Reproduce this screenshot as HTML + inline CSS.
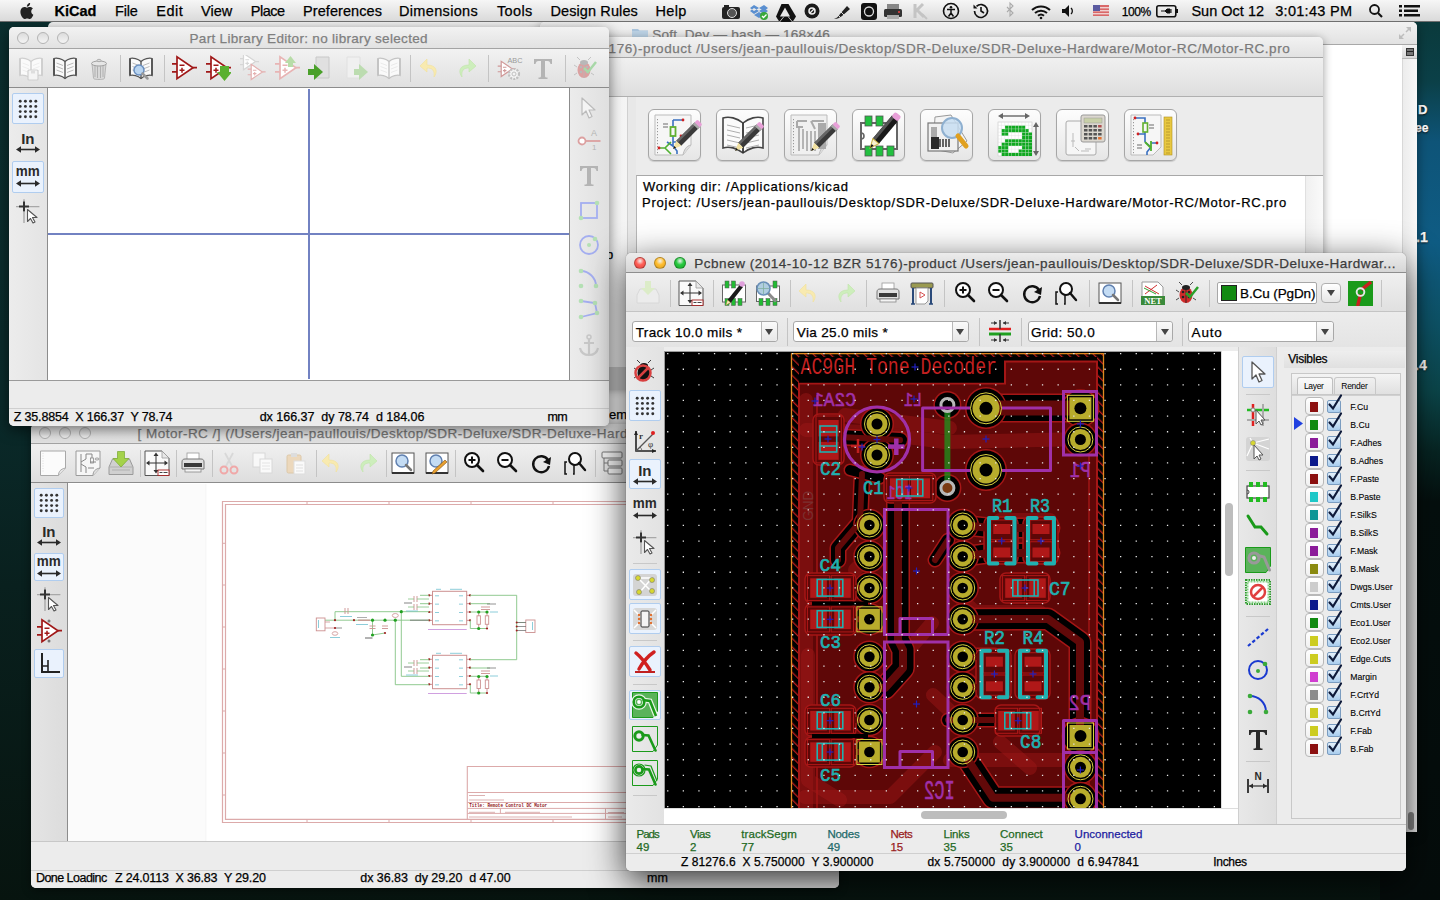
<!DOCTYPE html>
<html><head><meta charset="utf-8"><title>KiCad</title>
<style>
*{box-sizing:border-box;margin:0;padding:0}
html,body{width:1440px;height:900px;overflow:hidden;background:#0b2c2c}
body{position:relative;font-family:"Liberation Sans",sans-serif}
.a{position:absolute}
.t{position:absolute;white-space:nowrap;line-height:1;font-family:"Liberation Sans",sans-serif;-webkit-text-stroke-width:0.25px}
svg.a{overflow:visible}
</style></head><body>
<svg width="0" height="0" style="position:absolute"><defs><symbol id="i_book" viewBox="0 0 26 26"><path d="M13 6.5C10 4 5 2.5 2 3.5v17c3-1 8 .5 11 3 3-2.5 8-4 11-3v-17c-3-1-8 .5-11 3z" fill="#fafafa" stroke="#555" stroke-width="1.3"/><path d="M13 6.5v17" stroke="#555" stroke-width="1.4"/><path d="M4.5 8l6.5 2.5M4.5 11.5l6.5 2.5M4.5 15l6.5 2.5M15 10.5l6.5-2.5M15 14l6.5-2.5M15 17.5l6.5-2.5" stroke="#aaa" stroke-width=".8"/><path d="M2 3.5v17" stroke="#555" stroke-width="2"/><path d="M24 3.5v17" stroke="#555" stroke-width="1.8"/></symbol><symbol id="i_book_dis" viewBox="0 0 26 26"><path d="M13 6.5C10 4 5 2.5 2 3.5v17c3-1 8 .5 11 3 3-2.5 8-4 11-3v-17c-3-1-8 .5-11 3z" fill="#fafafa" stroke="#c4c4c4" stroke-width="1.3"/><path d="M13 6.5v17" stroke="#c4c4c4" stroke-width="1.4"/><path d="M4.5 8l6.5 2.5M4.5 11.5l6.5 2.5M4.5 15l6.5 2.5M15 10.5l6.5-2.5M15 14l6.5-2.5M15 17.5l6.5-2.5" stroke="#e4e4e4" stroke-width=".8"/><path d="M2 3.5v17" stroke="#c4c4c4" stroke-width="2"/><path d="M24 3.5v17" stroke="#c4c4c4" stroke-width="1.8"/></symbol><symbol id="i_booksave" viewBox="0 0 26 26"><path d="M13 6.5C10 4 5 2.5 2 3.5v17c3-1 8 .5 11 3 3-2.5 8-4 11-3v-17c-3-1-8 .5-11 3z" fill="#fafafa" stroke="#cfcfcf" stroke-width="1.3"/><path d="M13 6.5v17" stroke="#cfcfcf" stroke-width="1.4"/><path d="M4.5 8l6.5 2.5M4.5 11.5l6.5 2.5M4.5 15l6.5 2.5M15 10.5l6.5-2.5M15 14l6.5-2.5M15 17.5l6.5-2.5" stroke="#e8e8e8" stroke-width=".8"/><path d="M2 3.5v17" stroke="#cfcfcf" stroke-width="2"/><path d="M24 3.5v17" stroke="#cfcfcf" stroke-width="1.8"/><rect x="10" y="15" width="10" height="10" rx="1" fill="#f4f4f4" stroke="#cfcfcf" stroke-width="1.2"/><rect x="13" y="15.5" width="4" height="3" fill="#ddd"/></symbol><symbol id="i_trash" viewBox="0 0 26 26"><path d="M6 9h14l-1.5 14c0 1-1.5 1.5-5.5 1.5S7.5 24 7.5 23z" fill="#d8d8d8" stroke="#aaa" stroke-width=".8"/><ellipse cx="13" cy="8.5" rx="7.5" ry="2.5" fill="#e6e6e6" stroke="#999" stroke-width=".9"/><ellipse cx="13" cy="5.5" rx="2" ry="1.2" fill="#ddd" stroke="#999" stroke-width=".7"/><path d="M9 11v11M11.5 11v12M14.5 11v12M17 11v11" stroke="#b0b0b0" stroke-width="1"/></symbol><symbol id="i_booksearch" viewBox="0 0 26 26"><path d="M13 6.5C10 4 5 2.5 2 3.5v17c3-1 8 .5 11 3 3-2.5 8-4 11-3v-17c-3-1-8 .5-11 3z" fill="#fafafa" stroke="#555" stroke-width="1.3"/><path d="M13 6.5v17" stroke="#555" stroke-width="1.4"/><path d="M4.5 8l6.5 2.5M4.5 11.5l6.5 2.5M4.5 15l6.5 2.5M15 10.5l6.5-2.5M15 14l6.5-2.5M15 17.5l6.5-2.5" stroke="#aaa" stroke-width=".8"/><path d="M2 3.5v17" stroke="#555" stroke-width="2"/><path d="M24 3.5v17" stroke="#555" stroke-width="1.8"/><circle cx="11" cy="15" r="5" fill="#b8d4f0" stroke="#6a8fc0" stroke-width="1.5"/><path d="M14.5 18.5l5 5" stroke="#999" stroke-width="2.5" stroke-linecap="round"/></symbol><symbol id="i_opamp" viewBox="0 0 26 26"><path d="M6 1.8v21.8l16-10.9z" fill="#fff" stroke="#a01818" stroke-width="1.7" stroke-linejoin="miter"/><path d="M1 8.8h5M1 16.8h5M22 12.7h4.6" stroke="#a01818" stroke-width="1.7"/><path d="M8.5 10.3h5M8.5 15.2h5M11 12.7v5" stroke="#a01818" stroke-width="1.5"/></symbol><symbol id="i_opamp_dl" viewBox="0 0 26 26"><path d="M6 1.8v21.8l16-10.9z" fill="#fff" stroke="#a01818" stroke-width="1.7" stroke-linejoin="miter"/><path d="M1 8.8h5M1 16.8h5M22 12.7h4.6" stroke="#a01818" stroke-width="1.7"/><path d="M8.5 10.3h5M8.5 15.2h5M11 12.7v5" stroke="#a01818" stroke-width="1.5"/><path d="M15 11h9v6h3l-7.5 9-7.5-9h3z" fill="#5ab030"/></symbol><symbol id="i_opamp_pale" viewBox="0 0 26 26"><g transform="translate(-1,-3) scale(.75)"><path d="M6 1.8v21.8l16-10.9z" fill="#fff" stroke="#d6d6d6" stroke-width="1.7" stroke-linejoin="miter"/><path d="M1 8.8h5M1 16.8h5M22 12.7h4.6" stroke="#d6d6d6" stroke-width="1.7"/><path d="M8.5 10.3h5M8.5 15.2h5M11 12.7v5" stroke="#d6d6d6" stroke-width="1.5"/></g><g transform="translate(7,8) scale(.7)"><path d="M6 1.8v21.8l16-10.9z" fill="#fff" stroke="#e4b0b0" stroke-width="1.7" stroke-linejoin="miter"/><path d="M1 8.8h5M1 16.8h5M22 12.7h4.6" stroke="#e4b0b0" stroke-width="1.7"/><path d="M8.5 10.3h5M8.5 15.2h5M11 12.7v5" stroke="#e4b0b0" stroke-width="1.5"/></g></symbol><symbol id="i_opamp_up" viewBox="0 0 26 26"><path d="M6 1.8v21.8l16-10.9z" fill="#fff" stroke="#e8b4b4" stroke-width="1.7" stroke-linejoin="miter"/><path d="M1 8.8h5M1 16.8h5M22 12.7h4.6" stroke="#e8b4b4" stroke-width="1.7"/><path d="M8.5 10.3h5M8.5 15.2h5M11 12.7v5" stroke="#e8b4b4" stroke-width="1.5"/><path d="M14 12h5v-4h3l-5.5-7-5.5 7h3z" fill="#b8dca8"/></symbol><symbol id="i_import" viewBox="0 0 26 26"><path d="M9 2h13v21H9z" fill="#e0e0e0" stroke="#c8c8c8" stroke-width="1"/><path d="M1 14h6v-5l9 8-9 8v-5H1z" fill="#4aa02a"/></symbol><symbol id="i_export_dis" viewBox="0 0 26 26"><path d="M4 2h13v21H4z" fill="#f0f0f0" stroke="#e0e0e0" stroke-width="1"/><path d="M11 14h5v-5l9 8-9 8v-5h-5z" fill="#bcdcb0"/></symbol><symbol id="i_undo_dis" viewBox="0 0 26 26"><path d="M10 4L3 11l7 6v-4c5 0 8 2 7 9 4-5 3-12-7-12z" fill="#f8eab0" stroke="#f2e098" stroke-width=".6"/></symbol><symbol id="i_redo_dis" viewBox="0 0 26 26"><path d="M16 4l7 7-7 6v-4c-5 0-8 2-7 9-4-5-3-12 7-12z" fill="#cdeebc" stroke="#bfe4a8" stroke-width=".6"/></symbol><symbol id="i_undo" viewBox="0 0 26 26"><path d="M10 4L3 11l7 6v-4c5 0 8 2 7 9 4-5 3-12-7-12z" fill="#f4dc70" stroke="#d8bc40" stroke-width=".6"/></symbol><symbol id="i_opamp_abc" viewBox="0 0 26 26"><g transform="translate(0,5) scale(.7)"><path d="M6 1.8v21.8l16-10.9z" fill="#fff" stroke="#d09898" stroke-width="1.7" stroke-linejoin="miter"/><path d="M1 8.8h5M1 16.8h5M22 12.7h4.6" stroke="#d09898" stroke-width="1.7"/><path d="M8.5 10.3h5M8.5 15.2h5M11 12.7v5" stroke="#d09898" stroke-width="1.5"/></g><text x="10.5" y="8" font-size="7.5" font-family="Liberation Sans" fill="#9a9a9a" textLength="15" lengthAdjust="spacingAndGlyphs">ABC</text><circle cx="17" cy="19" r="5" fill="#f4f4f4" stroke="#c0c0c0" stroke-width="2.2" stroke-dasharray="2 1.2"/><circle cx="17" cy="19" r="2" fill="none" stroke="#c0c0c0" stroke-width="1"/></symbol><symbol id="i_T_gray" viewBox="0 0 26 26"><path d="M4 4h18v5h-1.5c-.5-2-1-3-3-3H15v15c0 1 .5 1.5 2.5 1.5V24h-9v-1.5C10.5 22.5 11 22 11 21V6H8.5c-2 0-2.5 1-3 3H4z" fill="#b4b4b4"/></symbol><symbol id="i_T_dark" viewBox="0 0 26 26"><path d="M4 4h18v5h-1.5c-.5-2-1-3-3-3H15v15c0 1 .5 1.5 2.5 1.5V24h-9v-1.5C10.5 22.5 11 22 11 21V6H8.5c-2 0-2.5 1-3 3H4z" fill="#2a2a2a"/></symbol><symbol id="i_bugcheck_dis" viewBox="0 0 26 26"><ellipse cx="12" cy="15" rx="6.5" ry="8" fill="#dca0a0"/><path d="M12 7v16" stroke="#b8b8b8" stroke-width=".8"/><circle cx="9" cy="12" r="1.3" fill="#b8b8b8"/><circle cx="15" cy="12" r="1.3" fill="#b8b8b8"/><circle cx="9" cy="17" r="1.3" fill="#b8b8b8"/><circle cx="15" cy="17" r="1.3" fill="#b8b8b8"/><ellipse cx="12" cy="7.5" rx="4" ry="2.5" fill="#b8b8b8"/><path d="M8 5L5 2M16 5l3-3M5 12L2 10M19 12l3-2M5 18l-3 2M19 18l3 2" stroke="#b8b8b8" stroke-width=".8"/><path d="M12 13l4 4 8-10" stroke="#a8d8a8" stroke-width="2.5" fill="none"/></symbol><symbol id="i_bugcheck" viewBox="0 0 26 26"><ellipse cx="12" cy="15" rx="6.5" ry="8" fill="#d02a2a"/><path d="M12 7v16" stroke="#222" stroke-width=".8"/><circle cx="9" cy="12" r="1.3" fill="#222"/><circle cx="15" cy="12" r="1.3" fill="#222"/><circle cx="9" cy="17" r="1.3" fill="#222"/><circle cx="15" cy="17" r="1.3" fill="#222"/><ellipse cx="12" cy="7.5" rx="4" ry="2.5" fill="#222"/><path d="M8 5L5 2M16 5l3-3M5 12L2 10M19 12l3-2M5 18l-3 2M19 18l3 2" stroke="#222" stroke-width=".8"/><path d="M12 13l4 4 8-10" stroke="#2aa02a" stroke-width="2.5" fill="none"/></symbol><symbol id="i_bug_no" viewBox="0 0 26 26"><ellipse cx="12" cy="15" rx="6.5" ry="8" fill="#111"/><path d="M12 7v16" stroke="#111" stroke-width=".8"/><circle cx="9" cy="12" r="1.3" fill="#111"/><circle cx="15" cy="12" r="1.3" fill="#111"/><circle cx="9" cy="17" r="1.3" fill="#111"/><circle cx="15" cy="17" r="1.3" fill="#111"/><ellipse cx="12" cy="7.5" rx="4" ry="2.5" fill="#111"/><path d="M8 5L5 2M16 5l3-3M5 12L2 10M19 12l3-2M5 18l-3 2M19 18l3 2" stroke="#111" stroke-width=".8"/><circle cx="11" cy="15" r="7.5" fill="none" stroke="#d84040" stroke-width="2.5"/><path d="M6 20L16 10" stroke="#d84040" stroke-width="2.5"/></symbol><symbol id="i_grid" viewBox="0 0 26 26"><circle cx="5.2" cy="5.2" r="1.45" fill="#333"/><circle cx="5.2" cy="10.4" r="1.45" fill="#333"/><circle cx="5.2" cy="15.6" r="1.45" fill="#333"/><circle cx="5.2" cy="20.8" r="1.45" fill="#333"/><circle cx="10.4" cy="5.2" r="1.45" fill="#333"/><circle cx="10.4" cy="10.4" r="1.45" fill="#333"/><circle cx="10.4" cy="15.6" r="1.45" fill="#333"/><circle cx="10.4" cy="20.8" r="1.45" fill="#333"/><circle cx="15.6" cy="5.2" r="1.45" fill="#333"/><circle cx="15.6" cy="10.4" r="1.45" fill="#333"/><circle cx="15.6" cy="15.6" r="1.45" fill="#333"/><circle cx="15.6" cy="20.8" r="1.45" fill="#333"/><circle cx="20.8" cy="5.2" r="1.45" fill="#333"/><circle cx="20.8" cy="10.4" r="1.45" fill="#333"/><circle cx="20.8" cy="15.6" r="1.45" fill="#333"/><circle cx="20.8" cy="20.8" r="1.45" fill="#333"/></symbol><symbol id="i_inch" viewBox="0 0 26 26"><text x="12.8" y="14.8" font-size="15" font-family="Liberation Sans" font-weight="bold" text-anchor="middle" fill="#2a2a2a">In</text><path d="M4 20.5h18" stroke="#2a2a2a" stroke-width="1.6"/><path d="M1 20.5l5-3.2v6.4zM25 20.5l-5-3.2v6.4z" fill="#2a2a2a"/></symbol><symbol id="i_mm" viewBox="0 0 26 26"><text x="12.7" y="12.4" font-size="14" font-family="Liberation Sans" font-weight="bold" text-anchor="middle" fill="#2a2a2a" textLength="24" lengthAdjust="spacingAndGlyphs">mm</text><path d="M4 19.5h18" stroke="#2a2a2a" stroke-width="1.6"/><path d="M1 19.5l5-3.2v6.4zM25 19.5l-5-3.2v6.4z" fill="#2a2a2a"/></symbol><symbol id="i_cursor" viewBox="0 0 26 26"><path d="M1 8.6h3M14 8.6h10.4" stroke="#a8a8a8" stroke-width="1.4"/><path d="M9 1.3v2.5M9 14v11" stroke="#a8a8a8" stroke-width="1.4"/><path d="M4 8.6h10M9 3.5v10" stroke="#333" stroke-width="2"/><path d="M12.5 11.5v12l3-3 2.5 4.5 2-1-2.5-4.5h4.5z" fill="#fff" stroke="#555" stroke-width="1.1" stroke-linejoin="round"/></symbol><symbol id="i_arrow_dis" viewBox="0 0 26 26"><path d="M6 3v17l4-4 3 7 3-1.5-3-6.5h6z" fill="#f4f4f4" stroke="#bbb" stroke-width="1.2" stroke-linejoin="round"/></symbol><symbol id="i_arrow" viewBox="0 0 26 26"><path d="M7 3v17l4-4 3 7 3-1.5-3-6.5h6z" fill="#fff" stroke="#555" stroke-width="1.3" stroke-linejoin="round"/></symbol><symbol id="i_pin_dis" viewBox="0 0 26 26"><circle cx="6" cy="16" r="3.5" fill="#fff" stroke="#dca0a0" stroke-width="1.8"/><path d="M9.5 16h15" stroke="#dca0a0" stroke-width="1.8"/><text x="15" y="11" font-size="9" font-family="Liberation Sans" fill="#b4b4b4">A</text><text x="16" y="25" font-size="8" font-family="Liberation Sans" fill="#b4b4b4">1</text></symbol><symbol id="i_rect_dis" viewBox="0 0 26 26"><rect x="5" y="6" width="16" height="15" fill="none" stroke="#a4aef0" stroke-width="1.8"/><circle cx="21" cy="6" r="2.3" fill="#b4e0b4"/><circle cx="5" cy="21" r="2.3" fill="#b4e0b4"/></symbol><symbol id="i_circ_dis" viewBox="0 0 26 26"><circle cx="13" cy="13" r="9" fill="none" stroke="#a4aef0" stroke-width="1.8"/><circle cx="13" cy="13" r="2" fill="#b4e0b4"/><circle cx="19" cy="7" r="2.3" fill="#b4e0b4"/></symbol><symbol id="i_arc_dis" viewBox="0 0 26 26"><path d="M5 6c8 0 15 7 15 15" fill="none" stroke="#a4aef0" stroke-width="1.8"/><circle cx="5" cy="6" r="2.3" fill="#b4e0b4"/><circle cx="20" cy="21" r="2.3" fill="#b4e0b4"/><circle cx="5" cy="21" r="2.3" fill="#b4e0b4"/></symbol><symbol id="i_poly_dis" viewBox="0 0 26 26"><path d="M5 7l14 2 2 10-16 4" fill="none" stroke="#a4aef0" stroke-width="1.8"/><circle cx="5" cy="7" r="2.3" fill="#b4e0b4"/><circle cx="19" cy="9" r="2.3" fill="#b4e0b4"/><circle cx="21" cy="19" r="2.3" fill="#b4e0b4"/><circle cx="5" cy="23" r="2.3" fill="#b4e0b4"/></symbol><symbol id="i_anchor_dis" viewBox="0 0 26 26"><circle cx="13" cy="5" r="2" fill="none" stroke="#c8c8c8" stroke-width="1.5"/><path d="M13 7v16M8 11h10M4 16c1 5 5 7 9 7s8-2 9-7" fill="none" stroke="#c8c8c8" stroke-width="2.2"/></symbol><symbol id="i_newdoc" viewBox="0 0 26 26"><path d="M0.5 1h25v17l-7 7.5H0.5z" fill="#fbfbfb" stroke="#a8a8a8" stroke-width="1"/><path d="M18.5 25.5c0-4 2-6.5 7-7.5" fill="#e4e4e4" stroke="#a8a8a8" stroke-width="1"/><path d="M3 3v20" stroke="#ccc" stroke-width=".6" stroke-dasharray="1 1.5"/></symbol><symbol id="i_schdoc" viewBox="0 0 26 26"><path d="M1 1h24v17l-7 7.5H1z" fill="#f6f6f6" stroke="#9a9a9a" stroke-width="1"/><path d="M18 25.5c0-4 2-6.5 7-7.5" fill="#e0e0e0" stroke="#9a9a9a"/><path d="M6 4v18M6 12l5-3M6 14l5 3M11 9v-5h6M11 17v6M17 4v4M15 12h6M13 18h6" stroke="#888" stroke-width="1" fill="none"/><rect x="15.5" y="8" width="3" height="5" fill="none" stroke="#888" stroke-width=".8"/><ellipse cx="22" cy="9" rx="2" ry="1" fill="none" stroke="#888" stroke-width=".8"/></symbol><symbol id="i_save_tray" viewBox="0 0 26 26"><path d="M1 17l3.5-8h17l3.5 8v7.5H1z" fill="#d0d0d0" stroke="#9a9a9a" stroke-width="1"/><path d="M1.5 17h23" stroke="#b0b0b0"/><path d="M4 20h18" stroke="#bbb" stroke-width="1.5"/><path d="M9.5 1.5h7v7h4.5l-8 8.5-8-8.5h4.5z" fill="#a4d24a" stroke="#78a830" stroke-width=".7"/></symbol><symbol id="i_save_tray_dis" viewBox="0 0 26 26"><path d="M2 15l3-6h16l3 6v8H2z" fill="#ececec" stroke="#d8d8d8" stroke-width="1"/><path d="M10 1h6v7h4l-7 7-7-7h4z" fill="#dcecc8"/></symbol><symbol id="i_pagesettings" viewBox="0 0 26 26"><path d="M1 1h17l7 7v17.5H1z" fill="#fafafa" stroke="#555" stroke-width="1"/><path d="M18 1v7h7" fill="#e8e8e8" stroke="#999" stroke-width=".8"/><path d="M12 4v18M3.5 13h19" stroke="#333" stroke-width="1"/><path d="M12 2.5l-2.5 3.5h5zM12 23.5l-2.5-3.5h5zM2 13l3.5-2.5v5zM24 13l-3.5-2.5v5z" fill="#333"/><rect x="14" y="20" width="11" height="5.5" fill="#fff" stroke="#a02020" stroke-width=".9"/><path d="M15.5 22.5h3M19.5 22.5h4" stroke="#444" stroke-width="1.2"/></symbol><symbol id="i_print" viewBox="0 0 26 26"><rect x="7" y="3" width="12" height="8" fill="#fff" stroke="#999" stroke-width=".8"/><path d="M2 12c0-2 1-3 3-3h16c2 0 3 1 3 3v7H2z" fill="#e0e0e0" stroke="#777" stroke-width="1"/><rect x="4" y="13" width="18" height="4" fill="#3a3a3a"/><rect x="5" y="19" width="16" height="3" fill="#f4f4f4" stroke="#888" stroke-width=".8"/></symbol><symbol id="i_cut_dis" viewBox="0 0 26 26"><path d="M9 3l7 13M17 3l-7 13" stroke="#d8d8d8" stroke-width="1.8"/><circle cx="8" cy="20" r="3.5" fill="none" stroke="#f0a8a8" stroke-width="2"/><circle cx="18" cy="20" r="3.5" fill="none" stroke="#f0a8a8" stroke-width="2"/></symbol><symbol id="i_copy_dis" viewBox="0 0 26 26"><rect x="3" y="3" width="12" height="14" fill="#f8f8f8" stroke="#d8d8d8"/><rect x="10" y="9" width="12" height="14" fill="#fafafa" stroke="#d8d8d8"/><path d="M12 13h8M12 16h8M12 19h8" stroke="#e4e4e4"/></symbol><symbol id="i_paste_dis" viewBox="0 0 26 26"><rect x="4" y="5" width="14" height="18" rx="1.5" fill="#ecd8bc" stroke="#dcc8a8"/><rect x="8" y="3" width="6" height="4" fill="#ddd"/><rect x="11" y="11" width="11" height="13" fill="#fafafa" stroke="#ddd"/><path d="M13 15h7M13 18h7M13 21h7" stroke="#e0e0e0"/></symbol><symbol id="i_find" viewBox="0 0 26 26"><rect x="2" y="3" width="22" height="20" fill="#fff" stroke="#555" stroke-width="1"/><path d="M2 23h22" stroke="#333" stroke-width="2"/><circle cx="12" cy="11" r="6" fill="#c4dcf4" stroke="#6080b0" stroke-width="1.5"/><path d="M16 15l5 5" stroke="#777" stroke-width="2.5" stroke-linecap="round"/></symbol><symbol id="i_findrep" viewBox="0 0 26 26"><rect x="2" y="3" width="22" height="20" fill="#fff" stroke="#555" stroke-width="1"/><path d="M2 23h22" stroke="#333" stroke-width="2"/><circle cx="12" cy="11" r="6" fill="#c4dcf4" stroke="#6080b0" stroke-width="1.5"/><path d="M8 24l3-1 12-11-2-2-12 11z" fill="#e8a030" stroke="#805010" stroke-width=".6"/></symbol><symbol id="i_zoomin" viewBox="0 0 26 26"><circle cx="11" cy="10" r="7" fill="#fff" stroke="#111" stroke-width="2"/><path d="M7.5 10h7M11 6.5v7" stroke="#111" stroke-width="2"/><path d="M16 15l6 6" stroke="#111" stroke-width="2.6" stroke-linecap="round"/></symbol><symbol id="i_zoomout" viewBox="0 0 26 26"><circle cx="11" cy="10" r="7" fill="#fff" stroke="#111" stroke-width="2"/><path d="M7.5 10h7" stroke="#111" stroke-width="2"/><path d="M16 15l6 6" stroke="#111" stroke-width="2.6" stroke-linecap="round"/></symbol><symbol id="i_refresh" viewBox="0 0 26 26"><path d="M20 10A8 8 0 1 0 21 16" fill="none" stroke="#111" stroke-width="2.4"/><path d="M23 7l-1 8-7-3z" fill="#111"/></symbol><symbol id="i_zoomfit" viewBox="0 0 26 26"><circle cx="13" cy="9" r="6" fill="#fff" stroke="#111" stroke-width="2"/><path d="M17 13l6 7" stroke="#111" stroke-width="2.4" stroke-linecap="round"/><path d="M5 12h-2v12h2M11 24h1v-9" stroke="#111" stroke-width="1.5" fill="none"/></symbol><symbol id="i_hier" viewBox="0 0 26 26"><rect x="4" y="2" width="20" height="6" rx="1" fill="#f4f4f4" stroke="#777"/><rect x="10" y="10" width="14" height="6" rx="1" fill="#f4f4f4" stroke="#777"/><rect x="10" y="18" width="14" height="6" rx="1" fill="#f4f4f4" stroke="#777"/><path d="M6 8v13h4M6 13h4" stroke="#777" fill="none"/></symbol><symbol id="i_opamp_side" viewBox="0 0 26 26"><path d="M6 1.8v21.8l16-10.9z" fill="#fff" stroke="#a01818" stroke-width="1.7" stroke-linejoin="miter"/><path d="M1 8.8h5M1 16.8h5M22 12.7h4.6" stroke="#a01818" stroke-width="1.7"/><path d="M8.5 10.3h5M8.5 15.2h5M11 12.7v5" stroke="#a01818" stroke-width="1.5"/><circle cx="13" cy="3" r="1.5" fill="#777"/><circle cx="13" cy="23" r="1.5" fill="#777"/></symbol><symbol id="i_bus" viewBox="0 0 26 26"><path d="M6 3v19h18" stroke="#222" stroke-width="2" fill="none"/><path d="M12 10v12M6 16h6" stroke="#222" stroke-width="1.6"/></symbol><symbol id="i_modedit" viewBox="0 0 26 26"><rect x="1.5" y="5" width="23" height="17" fill="#fff" stroke="#666" stroke-width="1"/><g fill="#22bb33" stroke="#555" stroke-width=".5"><rect x="4" y="1" width="4" height="7"/><rect x="10.5" y="1" width="4" height="7"/><rect x="4" y="18.5" width="4" height="7"/><rect x="10.5" y="18.5" width="4" height="7"/><rect x="17" y="18.5" width="4" height="7"/></g><path d="M5 25l1.5-5L19 4.5l3 2.5L9.5 23z" fill="#1a1a1a"/><circle cx="21" cy="4" r="2.8" fill="#e0a0dc"/><path d="M5 25l1.5-5 3 2.5z" fill="#f6ecc0" stroke="#c8b040" stroke-width=".5"/></symbol><symbol id="i_modview" viewBox="0 0 26 26"><rect x="1.5" y="6" width="23" height="15.5" fill="#fff" stroke="#666" stroke-width="1"/><g fill="#22bb33" stroke="#555" stroke-width=".5"><rect x="18" y="1" width="4" height="7"/><rect x="4" y="18.5" width="4" height="7"/><rect x="11" y="18.5" width="4" height="7"/><rect x="18" y="18.5" width="4" height="7"/></g><path d="M12.5 12.5l8.5 9" stroke="#8a8a8a" stroke-width="3"/><circle cx="8.5" cy="8.5" r="6.5" fill="#b0cde0" stroke="#6a90b8" stroke-width="1.6"/><path d="M8.5 3v11M3 8.5h11" stroke="#80b0a0" stroke-width=".8"/></symbol><symbol id="i_plot" viewBox="0 0 26 26"><rect x="2" y="3" width="22" height="5" rx="1" fill="#9a9a50" stroke="#555"/><path d="M4 8v16M22 8v16" stroke="#2a4a7a" stroke-width="2"/><path d="M2 24h4M20 24h4" stroke="#2a4a7a" stroke-width="1.5"/><path d="M7 8h12v13l-3 3H7z" fill="#fff" stroke="#999"/><path d="M11 12v6l5-3z" fill="none" stroke="#d04040" stroke-width=".9"/></symbol><symbol id="i_netlist" viewBox="0 0 26 26"><path d="M2 2h16l5 5v12H2z" fill="#fff" stroke="#999"/><path d="M5 6l14 8M5 14l12-9" stroke="#d03030" stroke-width="1"/><path d="M4 8l12 6" stroke="#30a030" stroke-width="1"/><rect x="1" y="16" width="24" height="9" fill="#3a8a3a"/><text x="13" y="24" font-size="8.5" font-family="Liberation Serif" font-weight="bold" text-anchor="middle" fill="#fff">NET</text></symbol><symbol id="i_layerbtn" viewBox="0 0 26 26"><rect x="0" y="0" width="26" height="26" fill="#1a9a1a"/><path d="M10 26L13 14M14 9L24 1" stroke="#c82020" stroke-width="3.5"/><circle cx="13" cy="11.5" r="4" fill="none" stroke="#e8e8e8" stroke-width="2"/></symbol><symbol id="i_autowidth" viewBox="0 0 26 26"><path d="M2 11h22" stroke="#e02020" stroke-width="2.5"/><path d="M2 16h22" stroke="#20a020" stroke-width="3"/><path d="M13 2v9M13 16v8" stroke="#333" stroke-width="1.5"/><path d="M4 5h6M16 5h6M4 22h6M16 22h6" stroke="#333" stroke-width="1"/><path d="M10 5l-3-2v4zM16 5l3-2v4zM10 22l-3-2v4zM16 22l3-2v4z" fill="#333"/></symbol><symbol id="i_polar" viewBox="0 0 26 26"><path d="M4 3v20h20" stroke="#222" stroke-width="1.6" fill="none"/><path d="M4 3l-2 4h4zM24 23l-4-2v4z" fill="#222"/><path d="M4 23L21 6" stroke="#555" stroke-width="1.3"/><circle cx="21" cy="5" r="2" fill="#e02020"/><text x="7" y="11" font-size="9" font-family="Liberation Serif" font-weight="bold" fill="#333">r</text><text x="16" y="19" font-size="9" font-family="Liberation Serif" fill="#333">φ</text><path d="M10 23a6 6 0 0 0-2-4" stroke="#555" fill="none" stroke-width=".8"/></symbol><symbol id="i_ratsnest" viewBox="0 0 26 26"><rect x="1" y="2" width="24" height="22" rx="3" fill="#d4d4d4"/><path d="M6 6l14 14M20 6L8 20M6 6l14 0" stroke="#fff" stroke-width="1.5"/><circle cx="6" cy="6" r="2.5" fill="#d8d830" stroke="#777" stroke-width=".6"/><circle cx="20" cy="8" r="2.5" fill="#d8d830" stroke="#777" stroke-width=".6"/><circle cx="7" cy="20" r="2.5" fill="#d8d830" stroke="#777" stroke-width=".6"/><circle cx="20" cy="19" r="2.5" fill="#d8d830" stroke="#777" stroke-width=".6"/></symbol><symbol id="i_modrats" viewBox="0 0 26 26"><rect x="1" y="2" width="24" height="22" rx="3" fill="#d8d8d8"/><path d="M2 4l8 8M24 4l-8 8M2 22l8-8M24 22l-8-8" stroke="#fff" stroke-width="1.5"/><rect x="9" y="5" width="8" height="16" rx="1" fill="#f4f4f4" stroke="#333"/><g fill="#e07030"><circle cx="7" cy="9" r="1.2"/><circle cx="7" cy="13" r="1.2"/><circle cx="7" cy="17" r="1.2"/><circle cx="19" cy="9" r="1.2"/><circle cx="19" cy="13" r="1.2"/><circle cx="19" cy="17" r="1.2"/></g></symbol><symbol id="i_xdel" viewBox="0 0 26 26"><path d="M4 4c5 4 9 9 14 17M22 3c-6 4-11 10-15 17" stroke="#d02020" stroke-width="3.5" fill="none" stroke-linecap="round"/><path d="M3 23h20" stroke="#c02020" stroke-width="2"/></symbol><symbol id="i_pad_fill" viewBox="0 0 26 26"><path d="M0.5 0.5H25.5V19L21 25.5H0.5Z" fill="#5ab35a" stroke="#1a9a1a" stroke-width="1"/><path d="M10.5 8L18 9L24 24" stroke="#eaf5ea" stroke-width="5" fill="none"/><circle cx="7" cy="10" r="5.6" fill="none" stroke="#eaf5ea" stroke-width="4.5"/><circle cx="7" cy="10" r="5.3" fill="none" stroke="#1a9a1a" stroke-width="2.6"/><path d="M10.5 8L18 9L24 24" stroke="#1a9a1a" stroke-width="2.6" fill="none"/><circle cx="7" cy="10" r="1.9" fill="#fff"/></symbol><symbol id="i_pad_out" viewBox="0 0 26 26"><path d="M0.5 0.5H25.5V19L21 25.5H0.5Z" fill="none" stroke="#1a9a1a" stroke-width="1"/><circle cx="7" cy="10" r="4.2" fill="none" stroke="#1a9a1a" stroke-width="3"/><path d="M10.5 9L16.5 9.5L23.5 24.5" stroke="#1a9a1a" stroke-width="2.6" fill="none" stroke-linecap="round"/><circle cx="7" cy="10" r="1.8" fill="#f0f0f0"/></symbol><symbol id="i_pad_out2" viewBox="0 0 26 26"><path d="M0.5 0.5H25.5V19L21 25.5H0.5Z" fill="none" stroke="#1a9a1a" stroke-width="1"/><circle cx="7" cy="10" r="6" fill="none" stroke="#1a9a1a" stroke-width="1.2"/><path d="M12.5 5L19 6L25 21" stroke="#1a9a1a" stroke-width="1.2" fill="none"/><circle cx="7" cy="10" r="3.6" fill="none" stroke="#1a9a1a" stroke-width="2.6"/><path d="M10.5 9L17 9.5L23.5 24.5" stroke="#1a9a1a" stroke-width="2.6" fill="none" stroke-linecap="round"/><circle cx="7" cy="10" r="1.6" fill="#f0f0f0"/></symbol><symbol id="i_hlnet" viewBox="0 0 26 26"><path d="M2 8h22" stroke="#22bb22" stroke-width="2.5"/><path d="M8 2v22" stroke="#e02020" stroke-width="2.5"/><path d="M2 18h22M18 2v22" stroke="#aaa" stroke-width="2"/><circle cx="8" cy="8" r="2" fill="#eee" stroke="#888"/><path d="M11 8v14l3-3 2 4 2-1-2-4h4z" fill="#fff" stroke="#555" stroke-width="1"/></symbol><symbol id="i_localrats" viewBox="0 0 26 26"><rect x="1" y="1" width="24" height="24" rx="3" fill="#d4d4d4"/><path d="M8 7L2 20M8 7l16-4M8 7l16 6M8 7L5 2" stroke="#fff" stroke-width="1.2"/><circle cx="8" cy="7" r="2.5" fill="#d8d830" stroke="#888" stroke-width=".6"/><path d="M9 9v14l3-3 2 4 2-1-2-4h4z" fill="#fff" stroke="#555" stroke-width="1"/></symbol><symbol id="i_module" viewBox="0 0 26 26"><rect x="2" y="7" width="22" height="12" fill="#fff" stroke="#444" stroke-width="1.2"/><g fill="#22bb22"><rect x="4" y="3" width="4" height="5"/><rect x="11" y="3" width="4" height="5"/><rect x="18" y="3" width="4" height="5"/><rect x="4" y="18" width="4" height="5"/><rect x="11" y="18" width="4" height="5"/><rect x="18" y="18" width="4" height="5"/></g><path d="M2 11a2 2 0 0 1 0 4" fill="none" stroke="#444"/></symbol><symbol id="i_track" viewBox="0 0 26 26"><path d="M3 4l7 11h6l6 7" stroke="#1a9a1a" stroke-width="3" fill="none" stroke-linecap="round"/></symbol><symbol id="i_via" viewBox="0 0 26 26"><path d="M0.5 0.5H25.5V19L21 25.5H0.5Z" fill="#5ab35a" stroke="#1a9a1a" stroke-width="1"/><circle cx="9" cy="11" r="5" fill="none" stroke="#999" stroke-width="3.2"/><path d="M13 8.5L19 10L24.5 23" stroke="#999" stroke-width="3" fill="none" stroke-linecap="round"/><circle cx="9" cy="11" r="2" fill="#eee"/></symbol><symbol id="i_keepout" viewBox="0 0 26 26"><rect x="1" y="1" width="24" height="24" fill="#fff" stroke="#2a9a2a" stroke-width="2" stroke-dasharray="1.5 1"/><rect x="2.5" y="2.5" width="21" height="21" fill="none" stroke="#8ad08a" stroke-width="2" stroke-dasharray="2 1"/><circle cx="13" cy="13" r="7" fill="none" stroke="#e04040" stroke-width="2.5"/><path d="M8 18l10-10" stroke="#e04040" stroke-width="2.5"/></symbol><symbol id="i_dashline" viewBox="0 0 26 26"><path d="M3 22L23 5" stroke="#1a3ad0" stroke-width="2.2" stroke-dasharray="3.5 2.2"/></symbol><symbol id="i_circle" viewBox="0 0 26 26"><circle cx="13" cy="13" r="9" fill="none" stroke="#1a3ad0" stroke-width="2"/><circle cx="13" cy="14" r="2" fill="#3aaa3a"/><circle cx="20" cy="7" r="2.3" fill="#3aaa3a"/></symbol><symbol id="i_arc" viewBox="0 0 26 26"><path d="M5 5c8 0 16 6 16 16" fill="none" stroke="#1a3ad0" stroke-width="2"/><circle cx="5" cy="5" r="2.3" fill="#3aaa3a"/><circle cx="21" cy="21" r="2.3" fill="#3aaa3a"/><circle cx="5" cy="21" r="2.3" fill="#3aaa3a"/></symbol><symbol id="i_dimension" viewBox="0 0 26 26"><path d="M3 11v14M23 11v14" stroke="#2a2a2a" stroke-width="1.8"/><path d="M4 18h18" stroke="#2a2a2a" stroke-width="1.2"/><path d="M4 18l4-2.5v5zM22 18l-4-2.5v5z" fill="#2a2a2a"/><text x="13" y="12" font-size="10" font-family="Liberation Sans" font-weight="bold" text-anchor="middle" fill="#2a2a2a">N</text></symbol></defs></svg><div class="a" style="left:0.00px;top:0.00px;width:1440.00px;height:900.00px;background:linear-gradient(180deg,#0b3030 0%,#0a2a2a 45%,#09201e 65%,#07140f 100%)"></div><div class="a" style="left:1380.00px;top:22.00px;width:60.00px;height:878.00px;background:linear-gradient(180deg,#0a3a3c 0px,#0b4048 60px,#0e5478 120px,#0f5c84 220px,#0d5266 300px,#0b4448 370px,#072422 430px,#050f0e 480px,#050c0b 878px)"></div><span id="t1" class="t" style="left:1418.00px;top:102.90px;font-size:13.00px;color:#fff;font-weight:bold;text-shadow:0 1px 2px #000">D</span><span id="t2" class="t" style="left:1415.00px;top:122.24px;font-size:12.00px;color:#fff;font-weight:bold;text-shadow:0 1px 2px #000">ee</span><span id="t3" class="t" style="left:1416.00px;top:229.55px;font-size:14.00px;color:#fff;font-weight:bold;text-shadow:0 1px 2px #000">.1</span><span id="t4" class="t" style="left:1415.00px;top:358.05px;font-size:14.00px;color:#fff;font-weight:bold;text-shadow:0 1px 2px #000">.4</span><div class="a" style="left:48.00px;top:22.00px;width:600.00px;height:20.00px;background:linear-gradient(#f4f4f4,#e4e4e4);border-radius:5px 5px 0 0"></div><div class="a" style="left:540.00px;top:22.00px;width:877.00px;height:810.00px;background:#fff;border-radius:5px 5px 4px 4px;box-shadow:0 3px 12px rgba(0,0,0,.45)"></div><div class="a" style="left:540.00px;top:22.00px;width:877.00px;height:23.00px;background:linear-gradient(#f2f2f2,#e2e2e2);border-radius:5px 5px 0 0;border-bottom:1px solid #a8a8a8"></div><svg class="a" style="left:632.00px;top:28.00px;" width="16.00" height="12.00" viewBox="0 0 16.00 12.00"><path d="M0 1h6l1.5 1.5H16V12H0z" fill="#a9c4dc"/><path d="M0 3h16v9H0z" fill="#bcd3e6"/></svg><span id="t5" class="t" style="left:652.20px;top:27.97px;font-size:13.50px;color:#7a7a7a;letter-spacing:0.229px;">Soft_Dev — bash — 168×46</span><svg class="a" style="left:1398.00px;top:26.00px;" width="14.00" height="14.00" viewBox="0 0 14.00 14.00"><path d="M8 1h5v5zM6 13H1V8z" fill="#bdbdbd"/><path d="M12 2L8 6M2 12l4-4" stroke="#bdbdbd" stroke-width="1.5"/></svg><div class="a" style="left:1402.00px;top:45.00px;width:15.00px;height:787.00px;background:linear-gradient(90deg,#ececec,#f8f8f8);border-left:1px solid #d8d8d8"></div><div class="a" style="left:1402.00px;top:45.00px;width:15.00px;height:14.00px;background:linear-gradient(#f4f4f4,#d8d8d8);border-bottom:1px solid #b8b8b8"></div><div class="a" style="left:1406.00px;top:48.00px;width:8.00px;height:8.00px;background:#777;border:1px solid #333"></div><div class="a" style="left:1407.00px;top:51.00px;width:6.00px;height:1.00px;background:#222"></div><span id="t6" class="t" style="left:609.00px;top:407.90px;font-size:13.00px;color:#000;">emp</span><div class="a" style="left:1407.50px;top:812.00px;width:6.00px;height:18.00px;background:#8a8a8a;border-radius:3px"></div><div class="a" style="left:480.00px;top:37.00px;width:843.00px;height:350.00px;background:#ececec;border-radius:5px;box-shadow:0 2px 10px rgba(0,0,0,.4)"></div><div class="a" style="left:480.00px;top:37.00px;width:843.00px;height:21.00px;background:linear-gradient(#f2f2f2,#e2e2e2);border-radius:5px 5px 0 0;border-bottom:1px solid #a4a4a4"></div><span id="t7" class="t" style="left:608.60px;top:42.27px;font-size:13.50px;color:#7a7a7a;letter-spacing:0.566px;">176)-product /Users/jean-paullouis/Desktop/SDR-Deluxe/SDR-Deluxe-Hardware/Motor-RC/Motor-RC.pro</span><span id="t8" class="t" style="left:560.00px;top:42.27px;font-size:13.50px;color:#7a7a7a;">BZR 5</span><div class="a" style="left:480.00px;top:58.00px;width:843.00px;height:39.00px;background:linear-gradient(#f0f0f0,#dedede);border-bottom:1px solid #b0b0b0"></div><div class="a" style="left:480.00px;top:97.00px;width:147.00px;height:290.00px;background:linear-gradient(90deg,#f6f6f6,#fff 70%,#f4f4f4)"></div><div class="a" style="left:627.00px;top:97.00px;width:9.00px;height:290.00px;background:#e8e8e8;border-left:1px solid #d0d0d0"></div><span id="t9" class="t" style="left:606.00px;top:247.90px;font-size:13.00px;color:#000;">p</span><div class="a" style="left:636.00px;top:97.00px;width:687.00px;height:78.00px;background:#ececec"></div><div class="a" style="left:636.00px;top:175.00px;width:687.00px;height:212.00px;background:#fff;border-top:1px solid #a8a8a8;border-left:1px solid #b8b8b8"></div><div class="a" style="left:1305.00px;top:176.00px;width:18.00px;height:211.00px;background:linear-gradient(90deg,#f0f0f0,#fafafa);border-left:1px solid #e0e0e0"></div><span id="t10" class="t" style="left:643.00px;top:180.10px;font-size:13.00px;color:#000;letter-spacing:0.791px;">Working dir: /Applications/kicad</span><span id="t11" class="t" style="left:642.00px;top:195.60px;font-size:13.00px;color:#000;letter-spacing:0.768px;">Project: /Users/jean-paullouis/Desktop/SDR-Deluxe/SDR-Deluxe-Hardware/Motor-RC/Motor-RC.pro</span><div class="a" style="left:648.00px;top:108.50px;width:53.00px;height:52.00px;background:linear-gradient(#fdfdfd,#e6e6e6);border:1px solid #a6a6a6;border-radius:6px;box-shadow:0 1px 1px rgba(0,0,0,.15)"></div><div class="a" style="left:716.00px;top:108.50px;width:53.00px;height:52.00px;background:linear-gradient(#fdfdfd,#e6e6e6);border:1px solid #a6a6a6;border-radius:6px;box-shadow:0 1px 1px rgba(0,0,0,.15)"></div><div class="a" style="left:784.00px;top:108.50px;width:53.00px;height:52.00px;background:linear-gradient(#fdfdfd,#e6e6e6);border:1px solid #a6a6a6;border-radius:6px;box-shadow:0 1px 1px rgba(0,0,0,.15)"></div><div class="a" style="left:852.00px;top:108.50px;width:53.00px;height:52.00px;background:linear-gradient(#fdfdfd,#e6e6e6);border:1px solid #a6a6a6;border-radius:6px;box-shadow:0 1px 1px rgba(0,0,0,.15)"></div><div class="a" style="left:920.00px;top:108.50px;width:53.00px;height:52.00px;background:linear-gradient(#fdfdfd,#e6e6e6);border:1px solid #a6a6a6;border-radius:6px;box-shadow:0 1px 1px rgba(0,0,0,.15)"></div><div class="a" style="left:988.00px;top:108.50px;width:53.00px;height:52.00px;background:linear-gradient(#fdfdfd,#e6e6e6);border:1px solid #a6a6a6;border-radius:6px;box-shadow:0 1px 1px rgba(0,0,0,.15)"></div><div class="a" style="left:1056.00px;top:108.50px;width:53.00px;height:52.00px;background:linear-gradient(#fdfdfd,#e6e6e6);border:1px solid #a6a6a6;border-radius:6px;box-shadow:0 1px 1px rgba(0,0,0,.15)"></div><div class="a" style="left:1124.00px;top:108.50px;width:53.00px;height:52.00px;background:linear-gradient(#fdfdfd,#e6e6e6);border:1px solid #a6a6a6;border-radius:6px;box-shadow:0 1px 1px rgba(0,0,0,.15)"></div><div class="a" style="left:480.00px;top:367.00px;width:147.00px;height:22.00px;background:#d0d0d0"></div><svg class="a" style="left:650.5px;top:110.5px" width="48" height="48" viewBox="0 0 48 48"><path d="M4 4h36v30l-8 10H4z" fill="#f6f6f6" stroke="#bbb" stroke-width="1"/><path d="M32 44c1-5 3-9 8-10" fill="#ddd" stroke="#bbb"/><rect x="6" y="8" width="1" height="1.2" fill="#999"/><rect x="6" y="11" width="1" height="1.2" fill="#999"/><rect x="6" y="14" width="1" height="1.2" fill="#999"/><rect x="6" y="17" width="1" height="1.2" fill="#999"/><rect x="6" y="20" width="1" height="1.2" fill="#999"/><rect x="6" y="23" width="1" height="1.2" fill="#999"/><rect x="6" y="26" width="1" height="1.2" fill="#999"/><rect x="6" y="29" width="1" height="1.2" fill="#999"/><rect x="6" y="32" width="1" height="1.2" fill="#999"/><rect x="6" y="35" width="1" height="1.2" fill="#999"/><rect x="6" y="38" width="1" height="1.2" fill="#999"/><rect x="6" y="41" width="1" height="1.2" fill="#999"/><path d="M22 9h10M22 9v7M22 25v6h8M22 31v4M22 35l-6-4M22 35l4 5v3" stroke="#3a70c0" stroke-width="1.6" fill="none"/><rect x="19.5" y="16" width="5" height="9" fill="none" stroke="#60b030" stroke-width="1.8"/><path d="M14 37l6-6M14 37h-6M20 43l-6-6" stroke="#50b030" stroke-width="1.6" fill="none"/><circle cx="32" cy="9" r="1.4" fill="#d02020"/><circle cx="30" cy="25" r="1.4" fill="#d02020"/><circle cx="8" cy="37" r="1.4" fill="#d02020"/><path d="M12 13h5M12 16h5" stroke="#999" stroke-width="1.6"/><g transform="translate(32 28) rotate(45)"><rect x="-3.5" y="-20" width="7" height="26" fill="#3a3a3a"/><rect x="-3.5" y="-20" width="2.5" height="26" fill="#666"/><rect x="-3.5" y="-24" width="7" height="5" rx="1.5" fill="#e8a0d8"/><rect x="-3.5" y="-20" width="7" height="2.5" fill="#aaa"/><path d="M-3.5 6L0 14 3.5 6z" fill="#f0e0a0"/><path d="M-1.2 11L0 14 1.2 11z" fill="#111"/></g></svg><svg class="a" style="left:718.5px;top:110.5px" width="48" height="48" viewBox="0 0 48 48"><path d="M24 12c-6-5-14-7-20-5v30c6-2 14 0 20 5 6-5 14-7 20-5V7c-6-2-14 0-20 5z" fill="#fbfbfb" stroke="#444" stroke-width="1.6"/><path d="M24 12v30" stroke="#333" stroke-width="1.8"/><path d="M8 14 l13 3M27 17 l13 -3" stroke="#999" stroke-width=".8"/><path d="M8 19 l13 3M27 22 l13 -3" stroke="#999" stroke-width=".8"/><path d="M8 24 l13 3M27 27 l13 -3" stroke="#999" stroke-width=".8"/><path d="M8 29 l13 3M27 32 l13 -3" stroke="#999" stroke-width=".8"/><path d="M8 34 l13 3M27 37 l13 -3" stroke="#999" stroke-width=".8"/><g transform="translate(26 30) rotate(45)"><rect x="-3.5" y="-20" width="7" height="26" fill="#3a3a3a"/><rect x="-3.5" y="-20" width="2.5" height="26" fill="#666"/><rect x="-3.5" y="-24" width="7" height="5" rx="1.5" fill="#e8a0d8"/><rect x="-3.5" y="-20" width="7" height="2.5" fill="#aaa"/><path d="M-3.5 6L0 14 3.5 6z" fill="#f0e0a0"/><path d="M-1.2 11L0 14 1.2 11z" fill="#111"/></g></svg><svg class="a" style="left:786.5px;top:110.5px" width="48" height="48" viewBox="0 0 48 48"><path d="M4 4h36v30l-8 10H4z" fill="#f0f0f0" stroke="#bbb" stroke-width="1"/><path d="M32 44c1-5 3-9 8-10" fill="#ddd" stroke="#bbb"/><rect x="6" y="8" width="1" height="1.2" fill="#999"/><rect x="6" y="11" width="1" height="1.2" fill="#999"/><rect x="6" y="14" width="1" height="1.2" fill="#999"/><rect x="6" y="17" width="1" height="1.2" fill="#999"/><rect x="6" y="20" width="1" height="1.2" fill="#999"/><rect x="6" y="23" width="1" height="1.2" fill="#999"/><rect x="6" y="26" width="1" height="1.2" fill="#999"/><rect x="6" y="29" width="1" height="1.2" fill="#999"/><rect x="6" y="32" width="1" height="1.2" fill="#999"/><rect x="6" y="35" width="1" height="1.2" fill="#999"/><rect x="6" y="38" width="1" height="1.2" fill="#999"/><rect x="6" y="41" width="1" height="1.2" fill="#999"/><path d="M10 10h10M25 10h12" stroke="#aaa" stroke-width="2"/><path d="M12 16v24M16 18v20M20 20v20M24 20v20M28 20v20" stroke="#b4b4b4" stroke-width="2"/><rect x="31" y="12" width="8" height="26" fill="#aaa"/><path d="M10 10v6h6M24 10l4 8" stroke="#aaa" stroke-width="2" fill="none"/><g transform="translate(34 30) rotate(45)"><rect x="-3.5" y="-20" width="7" height="26" fill="#3a3a3a"/><rect x="-3.5" y="-20" width="2.5" height="26" fill="#666"/><rect x="-3.5" y="-24" width="7" height="5" rx="1.5" fill="#e8a0d8"/><rect x="-3.5" y="-20" width="7" height="2.5" fill="#aaa"/><path d="M-3.5 6L0 14 3.5 6z" fill="#f0e0a0"/><path d="M-1.2 11L0 14 1.2 11z" fill="#111"/></g></svg><svg class="a" style="left:854.5px;top:110.5px" width="48" height="48" viewBox="0 0 48 48"><rect x="6" y="12" width="36" height="26" fill="#fff" stroke="#666" stroke-width="2"/><path d="M6 22a3 3 0 0 1 0 6" fill="none" stroke="#666" stroke-width="1.6"/><g fill="#22c040" stroke="#555" stroke-width=".8"><rect x="10" y="5" width="7" height="10"/><rect x="21" y="5" width="7" height="10"/><rect x="10" y="35" width="7" height="10"/><rect x="21" y="35" width="7" height="10"/><rect x="32" y="35" width="7" height="10"/></g><g transform="translate(26 24) rotate(40)"><rect x="-4" y="-22" width="8" height="30" fill="#1a1a1a"/><rect x="-4" y="-22" width="3" height="30" fill="#555"/><rect x="-4" y="-27" width="8" height="6" rx="2" fill="#e8a0d8"/><path d="M-4 8L0 17 4 8z" fill="#f8f0d0" stroke="#c8b040" stroke-width="1"/><path d="M-1.3 13L0 17 1.3 13z" fill="#111"/></g></svg><svg class="a" style="left:922.5px;top:110.5px" width="48" height="48" viewBox="0 0 48 48"><path d="M12 6l16-2 16 26-14 12-20-4z" fill="#f4f4f4" stroke="#999"/><rect x="5" y="12" width="30" height="28" fill="#f0f0f0" stroke="#777" stroke-width="1.2"/><rect x="8" y="16" width="6" height="20" fill="#aaa"/><rect x="8" y="26" width="8" height="12" fill="#2a2a2a"/><path d="M17 28v8M20 28v8M23 28v8M26 28v8" stroke="#333" stroke-width="1.5"/><circle cx="29" cy="17" r="10" fill="#c8def2" fill-opacity=".85" stroke="#8fb0d0" stroke-width="2"/><path d="M35 25l8 10" stroke="#e0a020" stroke-width="5" stroke-linecap="round"/></svg><svg class="a" style="left:990.5px;top:110.5px" width="48" height="48" viewBox="0 0 48 48"><rect x="7" y="11" width="34" height="34" fill="#fff" stroke="#ccc" stroke-width=".6"/><path d="M7 11v34M7 11h34" stroke="#ddd" stroke-width=".4"/><path d="M10.4 11v34M7 14.4h34" stroke="#ddd" stroke-width=".4"/><path d="M13.8 11v34M7 17.8h34" stroke="#ddd" stroke-width=".4"/><path d="M17.2 11v34M7 21.2h34" stroke="#ddd" stroke-width=".4"/><path d="M20.6 11v34M7 24.6h34" stroke="#ddd" stroke-width=".4"/><path d="M24 11v34M7 28h34" stroke="#ddd" stroke-width=".4"/><path d="M27.4 11v34M7 31.4h34" stroke="#ddd" stroke-width=".4"/><path d="M30.8 11v34M7 34.8h34" stroke="#ddd" stroke-width=".4"/><path d="M34.2 11v34M7 38.2h34" stroke="#ddd" stroke-width=".4"/><path d="M37.6 11v34M7 41.6h34" stroke="#ddd" stroke-width=".4"/><path d="M41 11v34M7 45h34" stroke="#ddd" stroke-width=".4"/><rect x="14.1" y="14.7" width="3.1" height="3.1" fill="#10a820"/><rect x="17.5" y="14.7" width="3.1" height="3.1" fill="#10a820"/><rect x="20.9" y="14.7" width="3.1" height="3.1" fill="#10a820"/><rect x="24.3" y="14.7" width="3.1" height="3.1" fill="#10a820"/><rect x="27.7" y="14.7" width="3.1" height="3.1" fill="#10a820"/><rect x="31.1" y="14.7" width="3.1" height="3.1" fill="#10a820"/><rect x="10.7" y="18.1" width="3.1" height="3.1" fill="#10a820"/><rect x="14.1" y="18.1" width="3.1" height="3.1" fill="#10a820"/><rect x="17.5" y="18.1" width="3.1" height="3.1" fill="#10a820"/><rect x="20.9" y="18.1" width="3.1" height="3.1" fill="#10a820"/><rect x="24.3" y="18.1" width="3.1" height="3.1" fill="#10a820"/><rect x="27.7" y="18.1" width="3.1" height="3.1" fill="#10a820"/><rect x="31.1" y="18.1" width="3.1" height="3.1" fill="#10a820"/><rect x="34.5" y="18.1" width="3.1" height="3.1" fill="#10a820"/><rect x="10.7" y="21.5" width="3.1" height="3.1" fill="#10a820"/><rect x="14.1" y="21.5" width="3.1" height="3.1" fill="#10a820"/><rect x="31.1" y="21.5" width="3.1" height="3.1" fill="#10a820"/><rect x="34.5" y="21.5" width="3.1" height="3.1" fill="#10a820"/><rect x="37.9" y="21.5" width="3.1" height="3.1" fill="#10a820"/><rect x="31.1" y="24.9" width="3.1" height="3.1" fill="#10a820"/><rect x="34.5" y="24.9" width="3.1" height="3.1" fill="#10a820"/><rect x="37.9" y="24.9" width="3.1" height="3.1" fill="#10a820"/><rect x="14.1" y="28.3" width="3.1" height="3.1" fill="#10a820"/><rect x="17.5" y="28.3" width="3.1" height="3.1" fill="#10a820"/><rect x="20.9" y="28.3" width="3.1" height="3.1" fill="#10a820"/><rect x="24.3" y="28.3" width="3.1" height="3.1" fill="#10a820"/><rect x="27.7" y="28.3" width="3.1" height="3.1" fill="#10a820"/><rect x="31.1" y="28.3" width="3.1" height="3.1" fill="#10a820"/><rect x="34.5" y="28.3" width="3.1" height="3.1" fill="#10a820"/><rect x="37.9" y="28.3" width="3.1" height="3.1" fill="#10a820"/><rect x="10.7" y="31.7" width="3.1" height="3.1" fill="#10a820"/><rect x="14.1" y="31.7" width="3.1" height="3.1" fill="#10a820"/><rect x="17.5" y="31.7" width="3.1" height="3.1" fill="#10a820"/><rect x="20.9" y="31.7" width="3.1" height="3.1" fill="#10a820"/><rect x="24.3" y="31.7" width="3.1" height="3.1" fill="#10a820"/><rect x="27.7" y="31.7" width="3.1" height="3.1" fill="#10a820"/><rect x="31.1" y="31.7" width="3.1" height="3.1" fill="#10a820"/><rect x="34.5" y="31.7" width="3.1" height="3.1" fill="#10a820"/><rect x="37.9" y="31.7" width="3.1" height="3.1" fill="#10a820"/><rect x="7.3" y="35.1" width="3.1" height="3.1" fill="#10a820"/><rect x="10.7" y="35.1" width="3.1" height="3.1" fill="#10a820"/><rect x="14.1" y="35.1" width="3.1" height="3.1" fill="#10a820"/><rect x="31.1" y="35.1" width="3.1" height="3.1" fill="#10a820"/><rect x="34.5" y="35.1" width="3.1" height="3.1" fill="#10a820"/><rect x="37.9" y="35.1" width="3.1" height="3.1" fill="#10a820"/><rect x="7.3" y="38.5" width="3.1" height="3.1" fill="#10a820"/><rect x="10.7" y="38.5" width="3.1" height="3.1" fill="#10a820"/><rect x="14.1" y="38.5" width="3.1" height="3.1" fill="#10a820"/><rect x="27.7" y="38.5" width="3.1" height="3.1" fill="#10a820"/><rect x="31.1" y="38.5" width="3.1" height="3.1" fill="#10a820"/><rect x="34.5" y="38.5" width="3.1" height="3.1" fill="#10a820"/><rect x="37.9" y="38.5" width="3.1" height="3.1" fill="#10a820"/><rect x="10.7" y="41.9" width="3.1" height="3.1" fill="#10a820"/><rect x="14.1" y="41.9" width="3.1" height="3.1" fill="#10a820"/><rect x="17.5" y="41.9" width="3.1" height="3.1" fill="#10a820"/><rect x="20.9" y="41.9" width="3.1" height="3.1" fill="#10a820"/><rect x="24.3" y="41.9" width="3.1" height="3.1" fill="#10a820"/><rect x="27.7" y="41.9" width="3.1" height="3.1" fill="#10a820"/><rect x="31.1" y="41.9" width="3.1" height="3.1" fill="#10a820"/><rect x="34.5" y="41.9" width="3.1" height="3.1" fill="#10a820"/><rect x="37.9" y="41.9" width="3.1" height="3.1" fill="#10a820"/><path d="M9 5h28" stroke="#666" stroke-width="1.4"/><path d="M7 5l5-3v6zM39 5l-5-3v6z" fill="#666"/><path d="M45 13v30" stroke="#666" stroke-width="1.4"/><path d="M45 11l-3 5h6zM45 45l-3-5h6z" fill="#666"/></svg><svg class="a" style="left:1058.5px;top:110.5px" width="48" height="48" viewBox="0 0 48 48"><rect x="7" y="10" width="30" height="34" rx="2" fill="#f6f6f6" stroke="#aaa"/><path d="M14 22v14M12 30h4M16 36l4 4M22 40h8M26 38h6" stroke="#bbb" stroke-width="1"/><rect x="22" y="4" width="24" height="27" rx="2" fill="#dcd8d0" stroke="#999"/><rect x="25" y="7" width="18" height="5" fill="#c8d0a8" stroke="#999" stroke-width=".5"/><rect x="25" y="14" width="3.5" height="2.5" fill="#555"/><rect x="25" y="18" width="3.5" height="2.5" fill="#555"/><rect x="25" y="22" width="3.5" height="2.5" fill="#555"/><rect x="25" y="26" width="3.5" height="2.5" fill="#555"/><rect x="29.7" y="14" width="3.5" height="2.5" fill="#555"/><rect x="29.7" y="18" width="3.5" height="2.5" fill="#555"/><rect x="29.7" y="22" width="3.5" height="2.5" fill="#555"/><rect x="29.7" y="26" width="3.5" height="2.5" fill="#555"/><rect x="34.4" y="14" width="3.5" height="2.5" fill="#555"/><rect x="34.4" y="18" width="3.5" height="2.5" fill="#555"/><rect x="34.4" y="22" width="3.5" height="2.5" fill="#555"/><rect x="34.4" y="26" width="3.5" height="2.5" fill="#555"/><rect x="39.1" y="14" width="3.5" height="2.5" fill="#b05050"/><rect x="39.1" y="18" width="3.5" height="2.5" fill="#555"/><rect x="39.1" y="22" width="3.5" height="2.5" fill="#555"/><rect x="39.1" y="26" width="3.5" height="2.5" fill="#e07030"/></svg><svg class="a" style="left:1126.5px;top:110.5px" width="48" height="48" viewBox="0 0 48 48"><path d="M4 4h30v32l-8 8H4z" fill="#f6f6f6" stroke="#bbb"/><rect x="6" y="8" width="1" height="1.2" fill="#999"/><rect x="6" y="11" width="1" height="1.2" fill="#999"/><rect x="6" y="14" width="1" height="1.2" fill="#999"/><rect x="6" y="17" width="1" height="1.2" fill="#999"/><rect x="6" y="20" width="1" height="1.2" fill="#999"/><rect x="6" y="23" width="1" height="1.2" fill="#999"/><rect x="6" y="26" width="1" height="1.2" fill="#999"/><rect x="6" y="29" width="1" height="1.2" fill="#999"/><rect x="6" y="32" width="1" height="1.2" fill="#999"/><rect x="6" y="35" width="1" height="1.2" fill="#999"/><rect x="6" y="38" width="1" height="1.2" fill="#999"/><rect x="6" y="41" width="1" height="1.2" fill="#999"/><path d="M8 7h10v5M18 21v10M12 23h6M18 31l6 5M24 36l-4 5v3M24 32h6" stroke="#3a70c0" stroke-width="1.6" fill="none"/><rect x="16" y="12" width="4.5" height="9" fill="none" stroke="#60b030" stroke-width="1.6"/><path d="M18 31l6 6M24 30v10" stroke="#50b030" stroke-width="1.8"/><circle cx="8" cy="7" r="1.4" fill="#d02020"/><circle cx="11" cy="23" r="1.4" fill="#d02020"/><circle cx="30" cy="32" r="1.4" fill="#d02020"/><path d="M22 14h5M22 17h5M10 34h5M10 37h5" stroke="#999" stroke-width="1.5"/><rect x="37" y="6" width="8" height="38" fill="#e8c840" stroke="#b09020" stroke-width=".6"/><path d="M39 9 h4" stroke="#a08020" stroke-width=".6"/><path d="M39 12 h4" stroke="#a08020" stroke-width=".6"/><path d="M39 15 h4" stroke="#a08020" stroke-width=".6"/><path d="M39 18 h4" stroke="#a08020" stroke-width=".6"/><path d="M39 21 h4" stroke="#a08020" stroke-width=".6"/><path d="M39 24 h4" stroke="#a08020" stroke-width=".6"/><path d="M39 27 h4" stroke="#a08020" stroke-width=".6"/><path d="M39 30 h4" stroke="#a08020" stroke-width=".6"/><path d="M39 33 h4" stroke="#a08020" stroke-width=".6"/><path d="M39 36 h4" stroke="#a08020" stroke-width=".6"/><path d="M39 39 h4" stroke="#a08020" stroke-width=".6"/><path d="M39 42 h4" stroke="#a08020" stroke-width=".6"/></svg><div class="a" style="left:31.00px;top:424.00px;width:808.00px;height:464.00px;background:#ececec;border-radius:5px;box-shadow:0 2px 10px rgba(0,0,0,.45)"></div><div class="a" style="left:31.00px;top:424.00px;width:808.00px;height:19.50px;background:linear-gradient(#f2f2f2,#e2e2e2);border-radius:5px 5px 0 0;border-bottom:1px solid #a4a4a4"></div><div class="a" style="left:39.00px;top:427.00px;width:12.00px;height:12.00px;border-radius:50%;background:linear-gradient(#dcdcdc,#f4f4f4);border:1px solid #b4b4b4"></div><div class="a" style="left:59.00px;top:427.00px;width:12.00px;height:12.00px;border-radius:50%;background:linear-gradient(#dcdcdc,#f4f4f4);border:1px solid #b4b4b4"></div><div class="a" style="left:79.00px;top:427.00px;width:12.00px;height:12.00px;border-radius:50%;background:linear-gradient(#dcdcdc,#f4f4f4);border:1px solid #b4b4b4"></div><span id="t12" class="t" style="left:137.50px;top:426.97px;font-size:13.50px;color:#7a7a7a;letter-spacing:0.484px;">[ Motor-RC /] (/Users/jean-paullouis/Desktop/SDR-Deluxe/SDR-Deluxe-Hard</span><div class="a" style="left:31.00px;top:443.50px;width:808.00px;height:39.00px;background:linear-gradient(#f0f0f0,#dedede);border-bottom:1px solid #8c8c8c"></div><div class="a" style="left:31.00px;top:483.00px;width:36.00px;height:358.00px;background:linear-gradient(90deg,#e4e4e4,#dcdcdc)"></div><div class="a" style="left:67.00px;top:483.00px;width:772.00px;height:358.00px;background:#fff;border-left:1px solid #8c8c8c"></div><div class="a" style="left:31.00px;top:841.00px;width:808.00px;height:29.00px;background:#ececec;border-top:1px solid #c8c8c8"></div><div class="a" style="left:31.00px;top:870.00px;width:808.00px;height:18.00px;background:#ececec;border-top:1px solid #cfcfcf;border-radius:0 0 5px 5px"></div><span id="t13" class="t" style="left:35.90px;top:872.32px;font-size:12.50px;color:#000;letter-spacing:-0.527px;">Done Loadinc</span><span id="t14" class="t" style="left:114.90px;top:872.32px;font-size:12.50px;color:#000;letter-spacing:-0.161px;">Z 24.0113&nbsp;&nbsp;X 36.83&nbsp;&nbsp;Y 29.20</span><span id="t15" class="t" style="left:360.30px;top:872.32px;font-size:12.50px;color:#000;letter-spacing:-0.044px;">dx 36.83&nbsp;&nbsp;dy 29.20&nbsp;&nbsp;d 47.00</span><span id="t16" class="t" style="left:647.00px;top:872.32px;font-size:12.50px;color:#000;letter-spacing:0.187px;">mm</span><svg class="a" style="left:40.0px;top:450.0px" width="26" height="26"><use href="#i_newdoc" width="26" height="26"/></svg><svg class="a" style="left:74.5px;top:450.0px" width="26" height="26"><use href="#i_schdoc" width="26" height="26"/></svg><svg class="a" style="left:108.0px;top:450.0px" width="26" height="26"><use href="#i_save_tray" width="26" height="26"/></svg><svg class="a" style="left:143.7px;top:450.0px" width="26" height="26"><use href="#i_pagesettings" width="26" height="26"/></svg><svg class="a" style="left:179.5px;top:450.0px" width="26" height="26"><use href="#i_print" width="26" height="26"/></svg><svg class="a" style="left:216.0px;top:450.0px" width="26" height="26"><use href="#i_cut_dis" width="26" height="26"/></svg><svg class="a" style="left:249.7px;top:450.0px" width="26" height="26"><use href="#i_copy_dis" width="26" height="26"/></svg><svg class="a" style="left:283.0px;top:450.0px" width="26" height="26"><use href="#i_paste_dis" width="26" height="26"/></svg><svg class="a" style="left:318.5px;top:450.0px" width="26" height="26"><use href="#i_undo_dis" width="26" height="26"/></svg><svg class="a" style="left:353.7px;top:450.0px" width="26" height="26"><use href="#i_redo_dis" width="26" height="26"/></svg><svg class="a" style="left:390.0px;top:450.0px" width="26" height="26"><use href="#i_find" width="26" height="26"/></svg><svg class="a" style="left:424.0px;top:450.0px" width="26" height="26"><use href="#i_findrep" width="26" height="26"/></svg><svg class="a" style="left:460.7px;top:450.0px" width="26" height="26"><use href="#i_zoomin" width="26" height="26"/></svg><svg class="a" style="left:494.0px;top:450.0px" width="26" height="26"><use href="#i_zoomout" width="26" height="26"/></svg><svg class="a" style="left:528.0px;top:450.0px" width="26" height="26"><use href="#i_refresh" width="26" height="26"/></svg><svg class="a" style="left:561.6px;top:450.0px" width="26" height="26"><use href="#i_zoomfit" width="26" height="26"/></svg><svg class="a" style="left:598.0px;top:450.0px" width="26" height="26"><use href="#i_hier" width="26" height="26"/></svg><div class="a" style="left:139.50px;top:450.00px;width:1.00px;height:27.00px;background:#c4c4c4"></div><div class="a" style="left:175.50px;top:450.00px;width:1.00px;height:27.00px;background:#c4c4c4"></div><div class="a" style="left:211.70px;top:450.00px;width:1.00px;height:27.00px;background:#c4c4c4"></div><div class="a" style="left:315.60px;top:450.00px;width:1.00px;height:27.00px;background:#c4c4c4"></div><div class="a" style="left:385.60px;top:450.00px;width:1.00px;height:27.00px;background:#c4c4c4"></div><div class="a" style="left:455.00px;top:450.00px;width:1.00px;height:27.00px;background:#c4c4c4"></div><div class="a" style="left:594.50px;top:450.00px;width:1.00px;height:27.00px;background:#c4c4c4"></div><div class="a" style="left:34.0px;top:487.5px;width:30.0px;height:30.0px;background:#eaf2fd;border:1px solid #b0cdef;border-radius:2px"></div><svg class="a" style="left:36.0px;top:489.5px" width="26" height="26"><use href="#i_grid" width="26" height="26"/></svg><svg class="a" style="left:36.0px;top:522.0px" width="26" height="26"><use href="#i_inch" width="26" height="26"/></svg><div class="a" style="left:34.0px;top:552.5px;width:30.0px;height:28.5px;background:#eaf2fd;border:1px solid #b0cdef;border-radius:2px"></div><svg class="a" style="left:36.0px;top:553.7px" width="26" height="26"><use href="#i_mm" width="26" height="26"/></svg><svg class="a" style="left:36.0px;top:586.0px" width="26" height="26"><use href="#i_cursor" width="26" height="26"/></svg><svg class="a" style="left:36.0px;top:618.0px" width="26" height="26"><use href="#i_opamp_side" width="26" height="26"/></svg><div class="a" style="left:34.0px;top:649.0px;width:30.0px;height:28.5px;background:#eaf2fd;border:1px solid #b0cdef;border-radius:2px"></div><svg class="a" style="left:36.0px;top:650.0px" width="26" height="26"><use href="#i_bus" width="26" height="26"/></svg><svg class="a" style="left:0;top:0" width="1440" height="900" viewBox="0 0 1440 900"><g clip-path="url(#schclip)"><defs><clipPath id="schclip"><rect x="68" y="484" width="570" height="357"/></clipPath></defs><rect x="68" y="484" width="137.5" height="357" fill="#fbfbfb"/><rect x="205.5" y="484" width="0.8" height="357" fill="#f2f2f2"/><path d="M660 501.5 L222.5 501.5 L222.5 822.5 L660 822.5" stroke="#dcaaaa" stroke-width="1.2" fill="none"/><path d="M660 504.5 L225.5 504.5 L225.5 819.3 L660 819.3" stroke="#dcaaaa" stroke-width="1.2" fill="none"/><path d="M307 501.5 L307 504.5" stroke="#dcaaaa" stroke-width="1" fill="none"/><path d="M307 819.3 L307 822.5" stroke="#dcaaaa" stroke-width="1" fill="none"/><path d="M389 501.5 L389 504.5" stroke="#dcaaaa" stroke-width="1" fill="none"/><path d="M389 819.3 L389 822.5" stroke="#dcaaaa" stroke-width="1" fill="none"/><path d="M471 501.5 L471 504.5" stroke="#dcaaaa" stroke-width="1" fill="none"/><path d="M471 819.3 L471 822.5" stroke="#dcaaaa" stroke-width="1" fill="none"/><path d="M553 501.5 L553 504.5" stroke="#dcaaaa" stroke-width="1" fill="none"/><path d="M553 819.3 L553 822.5" stroke="#dcaaaa" stroke-width="1" fill="none"/><path d="M222.5 543.3 L225.5 543.3" stroke="#dcaaaa" stroke-width="1" fill="none"/><path d="M222.5 585 L225.5 585" stroke="#dcaaaa" stroke-width="1" fill="none"/><path d="M222.5 627 L225.5 627" stroke="#dcaaaa" stroke-width="1" fill="none"/><path d="M222.5 669 L225.5 669" stroke="#dcaaaa" stroke-width="1" fill="none"/><path d="M222.5 711 L225.5 711" stroke="#dcaaaa" stroke-width="1" fill="none"/><path d="M222.5 753 L225.5 753" stroke="#dcaaaa" stroke-width="1" fill="none"/><path d="M222.5 795 L225.5 795" stroke="#dcaaaa" stroke-width="1" fill="none"/><path d="M660 766.5 L467.3 766.5 L467.3 819.3" stroke="#dcaaaa" stroke-width="1.1" fill="none"/><path d="M467.3 792.5 L660 792.5" stroke="#dcaaaa" stroke-width="1" fill="none"/><path d="M467.3 802.5 L660 802.5" stroke="#dcaaaa" stroke-width="1" fill="none"/><path d="M467.3 808.4 L660 808.4" stroke="#dcaaaa" stroke-width="1" fill="none"/><path d="M467.3 813.4 L660 813.4" stroke="#dcaaaa" stroke-width="1" fill="none"/><path d="M500.4 808.4 L500.4 813.4" stroke="#dcaaaa" stroke-width="1" fill="none"/><path d="M605.5 808.4 L605.5 819.3" stroke="#dcaaaa" stroke-width="1" fill="none"/><path d="M469 795.5 L485 795.5" stroke="#d8a8a8" stroke-width="0.9" fill="none"/><path d="M469 800 L504 800" stroke="#d8a8a8" stroke-width="0.9" fill="none"/><path d="M469 812.3 L495 812.3" stroke="#d8a8a8" stroke-width="0.9" fill="none"/><path d="M505 812.3 L540 812.3" stroke="#d8a8a8" stroke-width="0.9" fill="none"/><path d="M469 817 L572 817" stroke="#d8a8a8" stroke-width="0.9" fill="none"/><path d="M608 812.5 L624 812.5" stroke="#d8a8a8" stroke-width="0.9" fill="none"/><path d="M608 817 L622 817" stroke="#d8a8a8" stroke-width="0.9" fill="none"/><text x="469.2" y="807.2" font-size="6" font-weight="bold" fill="#901818" font-family="Liberation Mono" textLength="78" lengthAdjust="spacingAndGlyphs">Title: Remote Control DC Motor</text><rect x="432.5" y="591.3" width="34.2" height="33.4" fill="none" stroke="#cc9090" stroke-width="1"/><path d="M428 595.3 L432.5 595.3" stroke="#cc9090" stroke-width="1" fill="none"/><circle cx="429.2" cy="595.3" r="1.1" fill="#a02020"/><path d="M466.7 595.3 L471 595.3" stroke="#cc9090" stroke-width="1" fill="none"/><circle cx="470" cy="595.3" r="1.1" fill="#a02020"/><path d="M435 595.8 L439 595.8" stroke="#70c0d0" stroke-width="0.8" fill="none"/><path d="M459 595.8 L463 595.8" stroke="#70c0d0" stroke-width="0.8" fill="none"/><path d="M428 603.65 L432.5 603.65" stroke="#cc9090" stroke-width="1" fill="none"/><circle cx="429.2" cy="603.65" r="1.1" fill="#a02020"/><path d="M466.7 603.65 L471 603.65" stroke="#cc9090" stroke-width="1" fill="none"/><circle cx="470" cy="603.65" r="1.1" fill="#a02020"/><path d="M435 604.15 L439 604.15" stroke="#70c0d0" stroke-width="0.8" fill="none"/><path d="M459 604.15 L463 604.15" stroke="#70c0d0" stroke-width="0.8" fill="none"/><path d="M428 612 L432.5 612" stroke="#cc9090" stroke-width="1" fill="none"/><circle cx="429.2" cy="612" r="1.1" fill="#a02020"/><path d="M466.7 612 L471 612" stroke="#cc9090" stroke-width="1" fill="none"/><circle cx="470" cy="612" r="1.1" fill="#a02020"/><path d="M435 612.5 L439 612.5" stroke="#70c0d0" stroke-width="0.8" fill="none"/><path d="M459 612.5 L463 612.5" stroke="#70c0d0" stroke-width="0.8" fill="none"/><path d="M428 620.35 L432.5 620.35" stroke="#cc9090" stroke-width="1" fill="none"/><circle cx="429.2" cy="620.35" r="1.1" fill="#a02020"/><path d="M466.7 620.35 L471 620.35" stroke="#cc9090" stroke-width="1" fill="none"/><circle cx="470" cy="620.35" r="1.1" fill="#a02020"/><path d="M435 620.85 L439 620.85" stroke="#70c0d0" stroke-width="0.8" fill="none"/><path d="M459 620.85 L463 620.85" stroke="#70c0d0" stroke-width="0.8" fill="none"/><path d="M428 629.5 L466.7 629.5" stroke="#d0a0e0" stroke-width="1" fill="none"/><path d="M436 589.3 L441 589.3" stroke="#70c0d0" stroke-width="0.8" fill="none"/><path d="M450 589.3 L462 589.3" stroke="#70c0d0" stroke-width="0.8" fill="none"/><rect x="432.5" y="655.3" width="34.2" height="33.4" fill="none" stroke="#cc9090" stroke-width="1"/><path d="M428 659.3 L432.5 659.3" stroke="#cc9090" stroke-width="1" fill="none"/><circle cx="429.2" cy="659.3" r="1.1" fill="#a02020"/><path d="M466.7 659.3 L471 659.3" stroke="#cc9090" stroke-width="1" fill="none"/><circle cx="470" cy="659.3" r="1.1" fill="#a02020"/><path d="M435 659.8 L439 659.8" stroke="#70c0d0" stroke-width="0.8" fill="none"/><path d="M459 659.8 L463 659.8" stroke="#70c0d0" stroke-width="0.8" fill="none"/><path d="M428 667.65 L432.5 667.65" stroke="#cc9090" stroke-width="1" fill="none"/><circle cx="429.2" cy="667.65" r="1.1" fill="#a02020"/><path d="M466.7 667.65 L471 667.65" stroke="#cc9090" stroke-width="1" fill="none"/><circle cx="470" cy="667.65" r="1.1" fill="#a02020"/><path d="M435 668.15 L439 668.15" stroke="#70c0d0" stroke-width="0.8" fill="none"/><path d="M459 668.15 L463 668.15" stroke="#70c0d0" stroke-width="0.8" fill="none"/><path d="M428 676 L432.5 676" stroke="#cc9090" stroke-width="1" fill="none"/><circle cx="429.2" cy="676" r="1.1" fill="#a02020"/><path d="M466.7 676 L471 676" stroke="#cc9090" stroke-width="1" fill="none"/><circle cx="470" cy="676" r="1.1" fill="#a02020"/><path d="M435 676.5 L439 676.5" stroke="#70c0d0" stroke-width="0.8" fill="none"/><path d="M459 676.5 L463 676.5" stroke="#70c0d0" stroke-width="0.8" fill="none"/><path d="M428 684.35 L432.5 684.35" stroke="#cc9090" stroke-width="1" fill="none"/><circle cx="429.2" cy="684.35" r="1.1" fill="#a02020"/><path d="M466.7 684.35 L471 684.35" stroke="#cc9090" stroke-width="1" fill="none"/><circle cx="470" cy="684.35" r="1.1" fill="#a02020"/><path d="M435 684.85 L439 684.85" stroke="#70c0d0" stroke-width="0.8" fill="none"/><path d="M459 684.85 L463 684.85" stroke="#70c0d0" stroke-width="0.8" fill="none"/><path d="M428 693.5 L466.7 693.5" stroke="#d0a0e0" stroke-width="1" fill="none"/><path d="M436 653.3 L441 653.3" stroke="#70c0d0" stroke-width="0.8" fill="none"/><path d="M450 653.3 L462 653.3" stroke="#70c0d0" stroke-width="0.8" fill="none"/><path d="M470 595.3 L516.7 595.3 L516.7 659.7 L470 659.7" stroke="#84c484" stroke-width="0.9" fill="none"/><path d="M335 620.2 L335 611.7 L429.2 611.7" stroke="#84c484" stroke-width="0.9" fill="none"/><path d="M325 620.2 L429.2 620.2" stroke="#84c484" stroke-width="0.9" fill="none"/><path d="M401.3 611.7 L401.3 676.3 L429.2 676.3" stroke="#84c484" stroke-width="0.9" fill="none"/><path d="M395.3 620.2 L395.3 684.7 L429.2 684.7" stroke="#84c484" stroke-width="0.9" fill="none"/><path d="M470 603.7 L490 603.7" stroke="#84c484" stroke-width="0.9" fill="none"/><path d="M470 612 L487 612" stroke="#84c484" stroke-width="0.9" fill="none"/><path d="M470.3 620.3 L470.3 628.5 L487 628.5" stroke="#84c484" stroke-width="0.9" fill="none"/><path d="M470 668 L490 668" stroke="#84c484" stroke-width="0.9" fill="none"/><path d="M470 676.3 L487 676.3" stroke="#84c484" stroke-width="0.9" fill="none"/><path d="M470.3 684.7 L470.3 693 L487 693" stroke="#84c484" stroke-width="0.9" fill="none"/><path d="M516.7 622.5 L526 622.5" stroke="#84c484" stroke-width="0.9" fill="none"/><path d="M372.5 620.2 L372.5 635 L385 633" stroke="#84c484" stroke-width="0.9" fill="none"/><path d="M420 603.7 L429.2 603.7" stroke="#84c484" stroke-width="0.9" fill="none"/><path d="M420 595.3 L429.2 595.3" stroke="#84c484" stroke-width="0.9" fill="none"/><path d="M420 668 L429.2 668" stroke="#84c484" stroke-width="0.9" fill="none"/><path d="M420 659.7 L429.2 659.7" stroke="#84c484" stroke-width="0.9" fill="none"/><rect x="477" y="615.8" width="3.4" height="8.5" fill="none" stroke="#cc9090" stroke-width="0.9"/><path d="M478.7 612.8 L478.7 615.8" stroke="#cc9090" stroke-width="0.9" fill="none"/><path d="M478.7 624.3 L478.7 627.8" stroke="#cc9090" stroke-width="0.9" fill="none"/><rect x="477" y="680" width="3.4" height="8.5" fill="none" stroke="#cc9090" stroke-width="0.9"/><path d="M478.7 677 L478.7 680" stroke="#cc9090" stroke-width="0.9" fill="none"/><path d="M478.7 688.5 L478.7 692" stroke="#cc9090" stroke-width="0.9" fill="none"/><rect x="485.3" y="615.8" width="3.4" height="8.5" fill="none" stroke="#cc9090" stroke-width="0.9"/><path d="M487 612.8 L487 615.8" stroke="#cc9090" stroke-width="0.9" fill="none"/><path d="M487 624.3 L487 627.8" stroke="#cc9090" stroke-width="0.9" fill="none"/><rect x="485.3" y="680" width="3.4" height="8.5" fill="none" stroke="#cc9090" stroke-width="0.9"/><path d="M487 677 L487 680" stroke="#cc9090" stroke-width="0.9" fill="none"/><path d="M487 688.5 L487 692" stroke="#cc9090" stroke-width="0.9" fill="none"/><path d="M414 596 L414 602" stroke="#cc9090" stroke-width="0.9" fill="none"/><path d="M417 596 L417 602" stroke="#cc9090" stroke-width="0.9" fill="none"/><path d="M408 599 L414 599" stroke="#84c484" stroke-width="0.8" fill="none"/><path d="M417 599 L429 599" stroke="#84c484" stroke-width="0.8" fill="none"/><path d="M414 604 L414 610" stroke="#cc9090" stroke-width="0.9" fill="none"/><path d="M417 604 L417 610" stroke="#cc9090" stroke-width="0.9" fill="none"/><path d="M408 607 L414 607" stroke="#84c484" stroke-width="0.8" fill="none"/><path d="M417 607 L429 607" stroke="#84c484" stroke-width="0.8" fill="none"/><path d="M404 603 L412 603" stroke="#777" stroke-width="0.9" fill="none"/><path d="M406 611 L418 611" stroke="#70c0d0" stroke-width="0.8" fill="none"/><path d="M414 660 L414 666" stroke="#cc9090" stroke-width="0.9" fill="none"/><path d="M417 660 L417 666" stroke="#cc9090" stroke-width="0.9" fill="none"/><path d="M408 663 L414 663" stroke="#84c484" stroke-width="0.8" fill="none"/><path d="M417 663 L429 663" stroke="#84c484" stroke-width="0.8" fill="none"/><path d="M414 668 L414 674" stroke="#cc9090" stroke-width="0.9" fill="none"/><path d="M417 668 L417 674" stroke="#cc9090" stroke-width="0.9" fill="none"/><path d="M408 671 L414 671" stroke="#84c484" stroke-width="0.8" fill="none"/><path d="M417 671 L429 671" stroke="#84c484" stroke-width="0.8" fill="none"/><path d="M404 667 L412 667" stroke="#777" stroke-width="0.9" fill="none"/><path d="M406 675 L418 675" stroke="#70c0d0" stroke-width="0.8" fill="none"/><path d="M481 607 L490 607" stroke="#cc9090" stroke-width="0.9" fill="none"/><path d="M481 609.5 L490 609.5" stroke="#cc9090" stroke-width="0.9" fill="none"/><path d="M487 604 L496 604" stroke="#777" stroke-width="0.8" fill="none"/><path d="M490 612 L498 612" stroke="#70c0d0" stroke-width="0.8" fill="none"/><path d="M481 671 L490 671" stroke="#cc9090" stroke-width="0.9" fill="none"/><path d="M481 673.5 L490 673.5" stroke="#cc9090" stroke-width="0.9" fill="none"/><path d="M487 668 L496 668" stroke="#777" stroke-width="0.8" fill="none"/><path d="M490 676 L498 676" stroke="#70c0d0" stroke-width="0.8" fill="none"/><rect x="316.3" y="618" width="8.7" height="12.8" fill="none" stroke="#cc9090" stroke-width="0.9"/><path d="M318.5 620 L318.5 628" stroke="#70c0d0" stroke-width="0.8" fill="none"/><path d="M325 622 L330 622" stroke="#cc9090" stroke-width="0.8" fill="none"/><path d="M325 628 L335 628" stroke="#cc9090" stroke-width="0.8" fill="none"/><ellipse cx="335" cy="633.5" rx="2.8" ry="1.8" fill="none" stroke="#cc9090" stroke-width="0.8"/><path d="M330 637.5 L340 637.5" stroke="#70c0d0" stroke-width="0.8" fill="none"/><path d="M335 628 L342 628" stroke="#777" stroke-width="0.8" fill="none"/><rect x="525.8" y="620" width="9.2" height="12.5" fill="none" stroke="#cc9090" stroke-width="0.9"/><path d="M532.5 622 L532.5 630" stroke="#70c0d0" stroke-width="0.8" fill="none"/><path d="M516 622.5 L526 622.5" stroke="#777" stroke-width="0.8" fill="none"/><circle cx="516.7" cy="622.5" r="1" fill="#a02020"/><path d="M516 626.5 L526 626.5" stroke="#777" stroke-width="0.8" fill="none"/><circle cx="516.7" cy="626.5" r="1" fill="#a02020"/><path d="M516 630.5 L526 630.5" stroke="#777" stroke-width="0.8" fill="none"/><circle cx="516.7" cy="630.5" r="1" fill="#a02020"/><path d="M358 620.2 L370 620.2" stroke="#cc9090" stroke-width="1.2" fill="none"/><path d="M357 617.5 L367 617.5" stroke="#999" stroke-width="0.8" fill="none"/><path d="M356 624.5 L368 624.5" stroke="#70c0d0" stroke-width="0.8" fill="none"/><path d="M345 608 L345 614" stroke="#cc9090" stroke-width="0.9" fill="none"/><path d="M348 608 L348 614" stroke="#cc9090" stroke-width="0.9" fill="none"/><path d="M340 616.5 L352 616.5" stroke="#70c0d0" stroke-width="0.8" fill="none"/><path d="M369.5 626 L375.5 626" stroke="#cc9090" stroke-width="0.9" fill="none"/><path d="M369.5 628.5 L375.5 628.5" stroke="#cc9090" stroke-width="0.9" fill="none"/><path d="M382 626 L388 626" stroke="#cc9090" stroke-width="0.9" fill="none"/><path d="M382 628.5 L388 628.5" stroke="#cc9090" stroke-width="0.9" fill="none"/><path d="M365 638 L372.5 638" stroke="#555" stroke-width="0.9" fill="none"/><ellipse cx="395.3" cy="615.5" rx="3" ry="2" fill="none" stroke="#cc9090" stroke-width="0.8"/><path d="M410 620.2 L428 620.2" stroke="#777" stroke-width="0.9" fill="none"/><circle cx="401.3" cy="611.7" r="1.6" fill="#20a020"/><circle cx="395.3" cy="620.2" r="1.6" fill="#20a020"/><circle cx="372.5" cy="620.2" r="1.6" fill="#20a020"/><circle cx="385" cy="620.2" r="1.6" fill="#20a020"/><circle cx="372.5" cy="635" r="1.6" fill="#20a020"/><circle cx="478.7" cy="612" r="1.6" fill="#20a020"/><circle cx="487" cy="612" r="1.6" fill="#20a020"/><circle cx="478.7" cy="628.5" r="1.6" fill="#20a020"/><circle cx="478.7" cy="676.5" r="1.6" fill="#20a020"/><circle cx="487" cy="676.5" r="1.6" fill="#20a020"/><circle cx="478.7" cy="693" r="1.6" fill="#20a020"/><circle cx="335" cy="620.2" r="1.1" fill="#a02020"/><circle cx="335" cy="628" r="1.1" fill="#a02020"/><circle cx="354" cy="620.2" r="1.1" fill="#a02020"/><circle cx="385" cy="633" r="1.1" fill="#a02020"/><circle cx="487" cy="628.5" r="1.1" fill="#a02020"/><circle cx="487" cy="693" r="1.1" fill="#a02020"/></g></svg><div class="a" style="left:9.00px;top:27.00px;width:599.50px;height:399.00px;background:#ececec;border-radius:5px;box-shadow:0 4px 14px rgba(0,0,0,.55)"></div><div class="a" style="left:9.00px;top:27.00px;width:599.50px;height:21.50px;background:linear-gradient(#f2f2f2,#e2e2e2);border-radius:5px 5px 0 0;border-bottom:1px solid #a4a4a4"></div><div class="a" style="left:17.00px;top:32.00px;width:12.00px;height:12.00px;border-radius:50%;background:linear-gradient(#dcdcdc,#f4f4f4);border:1px solid #b4b4b4"></div><div class="a" style="left:37.00px;top:32.00px;width:12.00px;height:12.00px;border-radius:50%;background:linear-gradient(#dcdcdc,#f4f4f4);border:1px solid #b4b4b4"></div><div class="a" style="left:57.00px;top:32.00px;width:12.00px;height:12.00px;border-radius:50%;background:linear-gradient(#dcdcdc,#f4f4f4);border:1px solid #b4b4b4"></div><span id="t17" class="t" style="left:189.50px;top:32.17px;font-size:13.50px;color:#7f7f7f;letter-spacing:0.312px;">Part Library Editor: no library selected</span><div class="a" style="left:9.00px;top:48.50px;width:599.50px;height:39.00px;background:linear-gradient(#f2f2f2,#e0e0e0);border-bottom:1px solid #8c8c8c"></div><div class="a" style="left:9.00px;top:87.50px;width:37.50px;height:292.00px;background:linear-gradient(90deg,#ececec,#e4e4e4)"></div><div class="a" style="left:47.00px;top:87.50px;width:523.00px;height:292.00px;background:#fff;border-left:1px solid #8c8c8c;border-right:1px solid #8c8c8c"></div><div class="a" style="left:570.00px;top:87.50px;width:38.50px;height:292.00px;background:linear-gradient(90deg,#ececec,#e0e0e0)"></div><div class="a" style="left:308.00px;top:89.00px;width:2.00px;height:290.00px;background:#7282c2"></div><div class="a" style="left:48.00px;top:233.00px;width:521.00px;height:2.00px;background:#7282c2"></div><div class="a" style="left:9.00px;top:379.50px;width:599.50px;height:29.00px;background:#ececec;border-top:1px solid #9a9a9a"></div><div class="a" style="left:9.00px;top:408.00px;width:599.50px;height:18.00px;background:#ececec;border-top:1px solid #cfcfcf;border-radius:0 0 5px 5px"></div><span id="t18" class="t" style="left:13.75px;top:411.32px;font-size:12.50px;color:#000;letter-spacing:-0.164px;">Z 35.8854&nbsp;&nbsp;X 166.37&nbsp;&nbsp;Y 78.74</span><span id="t19" class="t" style="left:259.70px;top:411.32px;font-size:12.50px;color:#000;letter-spacing:-0.024px;">dx 166.37&nbsp;&nbsp;dy 78.74&nbsp;&nbsp;d 184.06</span><span id="t20" class="t" style="left:547.50px;top:411.32px;font-size:12.50px;color:#000;letter-spacing:-0.613px;">mm</span><svg class="a" style="left:17.8px;top:55.0px" width="26" height="26"><use href="#i_booksave" width="26" height="26"/></svg><svg class="a" style="left:52.0px;top:55.0px" width="26" height="26"><use href="#i_book" width="26" height="26"/></svg><svg class="a" style="left:85.5px;top:55.0px" width="26" height="26"><use href="#i_trash" width="26" height="26"/></svg><svg class="a" style="left:128.0px;top:55.0px" width="26" height="26"><use href="#i_booksearch" width="26" height="26"/></svg><svg class="a" style="left:171.0px;top:55.0px" width="26" height="26"><use href="#i_opamp" width="26" height="26"/></svg><svg class="a" style="left:205.0px;top:55.0px" width="26" height="26"><use href="#i_opamp_dl" width="26" height="26"/></svg><svg class="a" style="left:239.7px;top:55.0px" width="26" height="26"><use href="#i_opamp_pale" width="26" height="26"/></svg><svg class="a" style="left:274.0px;top:55.0px" width="26" height="26"><use href="#i_opamp_up" width="26" height="26"/></svg><svg class="a" style="left:307.0px;top:55.0px" width="26" height="26"><use href="#i_import" width="26" height="26"/></svg><svg class="a" style="left:343.0px;top:55.0px" width="26" height="26"><use href="#i_export_dis" width="26" height="26"/></svg><svg class="a" style="left:376.0px;top:55.0px" width="26" height="26"><use href="#i_book_dis" width="26" height="26"/></svg><svg class="a" style="left:417.0px;top:55.0px" width="26" height="26"><use href="#i_undo_dis" width="26" height="26"/></svg><svg class="a" style="left:453.0px;top:55.0px" width="26" height="26"><use href="#i_redo_dis" width="26" height="26"/></svg><svg class="a" style="left:497.0px;top:55.0px" width="26" height="26"><use href="#i_opamp_abc" width="26" height="26"/></svg><svg class="a" style="left:530.0px;top:55.0px" width="26" height="26"><use href="#i_T_gray" width="26" height="26"/></svg><svg class="a" style="left:572.0px;top:55.0px" width="26" height="26"><use href="#i_bugcheck_dis" width="26" height="26"/></svg><div class="a" style="left:120.00px;top:55.00px;width:1.00px;height:27.00px;background:#c4c4c4"></div><div class="a" style="left:163.50px;top:55.00px;width:1.00px;height:27.00px;background:#c4c4c4"></div><div class="a" style="left:410.00px;top:55.00px;width:1.00px;height:27.00px;background:#c4c4c4"></div><div class="a" style="left:487.50px;top:55.00px;width:1.00px;height:27.00px;background:#c4c4c4"></div><div class="a" style="left:564.60px;top:55.00px;width:1.00px;height:27.00px;background:#c4c4c4"></div><div class="a" style="left:12.0px;top:93.0px;width:32.0px;height:31.0px;background:#eaf2fd;border:1px solid #b0cdef;border-radius:2px"></div><svg class="a" style="left:15.0px;top:95.5px" width="26" height="26"><use href="#i_grid" width="26" height="26"/></svg><svg class="a" style="left:15.0px;top:129.0px" width="26" height="26"><use href="#i_inch" width="26" height="26"/></svg><div class="a" style="left:12.0px;top:161.0px;width:32.0px;height:31.5px;background:#eaf2fd;border:1px solid #b0cdef;border-radius:2px"></div><svg class="a" style="left:15.0px;top:164.0px" width="26" height="26"><use href="#i_mm" width="26" height="26"/></svg><svg class="a" style="left:15.0px;top:198.0px" width="26" height="26"><use href="#i_cursor" width="26" height="26"/></svg><svg class="a" style="left:576.0px;top:95.0px" width="26" height="26"><use href="#i_arrow_dis" width="26" height="26"/></svg><svg class="a" style="left:576.0px;top:125.0px" width="26" height="26"><use href="#i_pin_dis" width="26" height="26"/></svg><svg class="a" style="left:576.0px;top:162.0px" width="26" height="26"><use href="#i_T_gray" width="26" height="26"/></svg><svg class="a" style="left:576.0px;top:197.0px" width="26" height="26"><use href="#i_rect_dis" width="26" height="26"/></svg><svg class="a" style="left:576.0px;top:232.0px" width="26" height="26"><use href="#i_circ_dis" width="26" height="26"/></svg><svg class="a" style="left:576.0px;top:265.0px" width="26" height="26"><use href="#i_arc_dis" width="26" height="26"/></svg><svg class="a" style="left:576.0px;top:294.0px" width="26" height="26"><use href="#i_poly_dis" width="26" height="26"/></svg><svg class="a" style="left:576.0px;top:332.0px" width="26" height="26"><use href="#i_anchor_dis" width="26" height="26"/></svg><div class="a" style="left:626.00px;top:252.50px;width:780.00px;height:618.50px;background:#ececec;border-radius:5px;box-shadow:0 10px 36px rgba(0,0,0,.8),0 0 1px rgba(0,0,0,.6)"></div><div class="a" style="left:626.00px;top:252.50px;width:780.00px;height:20.50px;background:linear-gradient(#ececec,#d6d6d6);border-radius:5px 5px 0 0;border-bottom:1px solid #8e8e8e"></div><div class="a" style="left:634.00px;top:257.00px;width:12.00px;height:12.00px;border-radius:50%;background:radial-gradient(circle at 50% 30%,#fff8 0,#ff5f57 45%,#e0443e 100%);border:1px solid rgba(0,0,0,.25)"></div><div class="a" style="left:654.00px;top:257.00px;width:12.00px;height:12.00px;border-radius:50%;background:radial-gradient(circle at 50% 30%,#fff8 0,#ffbd2e 45%,#dea123 100%);border:1px solid rgba(0,0,0,.25)"></div><div class="a" style="left:674.00px;top:257.00px;width:12.00px;height:12.00px;border-radius:50%;background:radial-gradient(circle at 50% 30%,#fff8 0,#28c940 45%,#1aab29 100%);border:1px solid rgba(0,0,0,.25)"></div><span id="t21" class="t" style="left:694.30px;top:257.07px;font-size:13.50px;color:#3c3c3c;letter-spacing:0.518px;">Pcbnew (2014-10-12 BZR 5176)-product /Users/jean-paullouis/Desktop/SDR-Deluxe/SDR-Deluxe-Hardwar...</span><div class="a" style="left:626.00px;top:273.00px;width:780.00px;height:39.00px;background:linear-gradient(#f0f0f0,#e0e0e0);border-bottom:1px solid #c4c4c4"></div><div class="a" style="left:626.00px;top:312.00px;width:780.00px;height:35.00px;background:linear-gradient(#ececec,#e4e4e4)"></div><div class="a" style="left:632.00px;top:321.00px;width:146.00px;height:21.00px;background:#fff;border:1px solid #a8a8a8;border-radius:3px"></div><div class="a" style="left:760.70px;top:322.00px;width:16.30px;height:19.00px;background:linear-gradient(#fafafa,#e8e8e8);border-left:1px solid #b8b8b8;border-radius:0 3px 3px 0"></div><svg class="a" style="left:765.35px;top:328.50px;" width="8.00" height="6.00" viewBox="0 0 8.00 6.00"><path d="M0 0h8L4 6z" fill="#444"/></svg><span id="t22" class="t" style="left:635.70px;top:326.17px;font-size:13.50px;color:#000;letter-spacing:0.389px;">Track 10.0 mils *</span><div class="a" style="left:792.70px;top:321.00px;width:176.30px;height:21.00px;background:#fff;border:1px solid #a8a8a8;border-radius:3px"></div><div class="a" style="left:951.50px;top:322.00px;width:16.50px;height:19.00px;background:linear-gradient(#fafafa,#e8e8e8);border-left:1px solid #b8b8b8;border-radius:0 3px 3px 0"></div><svg class="a" style="left:956.25px;top:328.50px;" width="8.00" height="6.00" viewBox="0 0 8.00 6.00"><path d="M0 0h8L4 6z" fill="#444"/></svg><span id="t23" class="t" style="left:796.80px;top:326.17px;font-size:13.50px;color:#000;letter-spacing:0.351px;">Via 25.0 mils *</span><div class="a" style="left:1027.70px;top:321.00px;width:145.30px;height:21.00px;background:#fff;border:1px solid #a8a8a8;border-radius:3px"></div><div class="a" style="left:1156.00px;top:322.00px;width:16.00px;height:19.00px;background:linear-gradient(#fafafa,#e8e8e8);border-left:1px solid #b8b8b8;border-radius:0 3px 3px 0"></div><svg class="a" style="left:1160.50px;top:328.50px;" width="8.00" height="6.00" viewBox="0 0 8.00 6.00"><path d="M0 0h8L4 6z" fill="#444"/></svg><span id="t24" class="t" style="left:1031.00px;top:326.17px;font-size:13.50px;color:#000;letter-spacing:0.503px;">Grid: 50.0</span><div class="a" style="left:1188.00px;top:321.00px;width:146.00px;height:21.00px;background:#fff;border:1px solid #a8a8a8;border-radius:3px"></div><div class="a" style="left:1316.00px;top:322.00px;width:17.00px;height:19.00px;background:linear-gradient(#fafafa,#e8e8e8);border-left:1px solid #b8b8b8;border-radius:0 3px 3px 0"></div><svg class="a" style="left:1321.00px;top:328.50px;" width="8.00" height="6.00" viewBox="0 0 8.00 6.00"><path d="M0 0h8L4 6z" fill="#444"/></svg><span id="t25" class="t" style="left:1191.60px;top:326.17px;font-size:13.50px;color:#000;letter-spacing:0.812px;">Auto</span><div class="a" style="left:787.00px;top:318.00px;width:1.00px;height:28.00px;background:#c4c4c4"></div><div class="a" style="left:978.80px;top:318.00px;width:1.00px;height:28.00px;background:#c4c4c4"></div><div class="a" style="left:1021.00px;top:318.00px;width:1.00px;height:28.00px;background:#c4c4c4"></div><div class="a" style="left:1182.00px;top:318.00px;width:1.00px;height:28.00px;background:#c4c4c4"></div><div class="a" style="left:626.00px;top:347.00px;width:38.00px;height:477.00px;background:linear-gradient(90deg,#eaeaea,#e2e2e2)"></div><div class="a" style="left:664.00px;top:351.00px;width:558.00px;height:457.00px;background:#000;border:1px solid #9a9a9a"></div><div class="a" style="left:1221.00px;top:351.00px;width:17.00px;height:457.00px;background:#fff;border-left:1px solid #ddd"></div><div class="a" style="left:1225.00px;top:503.00px;width:8.00px;height:73.00px;background:#bdbdbd;border-radius:4px"></div><div class="a" style="left:664.00px;top:808.00px;width:574.00px;height:16.00px;background:#fff;border-top:1px solid #ddd"></div><div class="a" style="left:921.00px;top:811.00px;width:86.00px;height:8.00px;background:#bdbdbd;border-radius:4px"></div><div class="a" style="left:1238.00px;top:347.00px;width:38.00px;height:477.00px;background:linear-gradient(90deg,#e8e8e8,#dedede);border-left:1px solid #cfcfcf"></div><div class="a" style="left:1276.00px;top:347.00px;width:130.00px;height:477.00px;background:#ececec;border-left:1px solid #d0d0d0"></div><div class="a" style="left:1284.00px;top:351.00px;width:121.00px;height:17.00px;background:linear-gradient(#eeeeee,#e0e0e0)"></div><span id="t26" class="t" style="left:1288.30px;top:353.44px;font-size:12.00px;color:#000;letter-spacing:-0.262px;">Visibles</span><div class="a" style="left:1290.50px;top:373.00px;width:110.00px;height:446.00px;background:#ececec;border:1px solid #c8c8c8"></div><div class="a" style="left:1291.50px;top:374.00px;width:108.00px;height:21.00px;background:linear-gradient(#f4f4f4,#e0e0e0);border-bottom:1px solid #c8c8c8"></div><div class="a" style="left:1297.00px;top:377.00px;width:36.00px;height:17.00px;background:linear-gradient(#fafafa,#ececec);border:1px solid #c0c0c0;border-bottom:none;border-radius:3px 3px 0 0"></div><div class="a" style="left:1334.00px;top:377.00px;width:42.00px;height:17.00px;background:linear-gradient(#f0f0f0,#e2e2e2);border:1px solid #c8c8c8;border-bottom:none;border-radius:3px 3px 0 0"></div><span id="t27" class="t" style="left:1304.00px;top:381.70px;font-size:8.50px;color:#000;letter-spacing:-0.358px;-webkit-text-stroke-width:0">Layer</span><span id="t28" class="t" style="left:1341.30px;top:381.70px;font-size:8.50px;color:#000;letter-spacing:-0.270px;-webkit-text-stroke-width:0">Render</span><div class="a" style="left:1291.50px;top:395.00px;width:108.00px;height:1.00px;background:#d0d0d0"></div><div class="a" style="left:1304.50px;top:397.00px;width:19.00px;height:18.00px;background:linear-gradient(#fff,#f0f0f0);border:1px solid #b8b8b8;border-radius:4px"></div><div class="a" style="left:1309.80px;top:401.50px;width:8.50px;height:10.00px;background:#8c1010"></div><div class="a" style="left:1327.00px;top:399.50px;width:13.50px;height:13.00px;background:linear-gradient(#e4f0fb,#a9cdee);border:1px solid #7a9cc0;border-radius:2px"></div><svg class="a" style="left:1326.00px;top:394.00px;" width="18.00" height="17.00" viewBox="0 0 18.00 17.00"><path d="M3.5 10.5l3.5 4 8-13" stroke="#0e1a3a" stroke-width="2.2" fill="none" stroke-linecap="round"/></svg><span id="t29" class="t" style="left:1350.20px;top:403.04px;font-size:8.70px;color:#000;-webkit-text-stroke-width:0.1px">F.Cu</span><div class="a" style="left:1304.50px;top:415.00px;width:19.00px;height:18.00px;background:linear-gradient(#fff,#f0f0f0);border:1px solid #b8b8b8;border-radius:4px"></div><div class="a" style="left:1309.80px;top:419.50px;width:8.50px;height:10.00px;background:#108a10"></div><div class="a" style="left:1327.00px;top:417.50px;width:13.50px;height:13.00px;background:linear-gradient(#e4f0fb,#a9cdee);border:1px solid #7a9cc0;border-radius:2px"></div><svg class="a" style="left:1326.00px;top:412.00px;" width="18.00" height="17.00" viewBox="0 0 18.00 17.00"><path d="M3.5 10.5l3.5 4 8-13" stroke="#0e1a3a" stroke-width="2.2" fill="none" stroke-linecap="round"/></svg><span id="t30" class="t" style="left:1350.20px;top:421.04px;font-size:8.70px;color:#000;-webkit-text-stroke-width:0.1px">B.Cu</span><div class="a" style="left:1304.50px;top:433.00px;width:19.00px;height:18.00px;background:linear-gradient(#fff,#f0f0f0);border:1px solid #b8b8b8;border-radius:4px"></div><div class="a" style="left:1309.80px;top:437.50px;width:8.50px;height:10.00px;background:#8c1c9a"></div><div class="a" style="left:1327.00px;top:435.50px;width:13.50px;height:13.00px;background:linear-gradient(#e4f0fb,#a9cdee);border:1px solid #7a9cc0;border-radius:2px"></div><svg class="a" style="left:1326.00px;top:430.00px;" width="18.00" height="17.00" viewBox="0 0 18.00 17.00"><path d="M3.5 10.5l3.5 4 8-13" stroke="#0e1a3a" stroke-width="2.2" fill="none" stroke-linecap="round"/></svg><span id="t31" class="t" style="left:1350.20px;top:439.04px;font-size:8.70px;color:#000;-webkit-text-stroke-width:0.1px">F.Adhes</span><div class="a" style="left:1304.50px;top:451.00px;width:19.00px;height:18.00px;background:linear-gradient(#fff,#f0f0f0);border:1px solid #b8b8b8;border-radius:4px"></div><div class="a" style="left:1309.80px;top:455.50px;width:8.50px;height:10.00px;background:#0c1a8c"></div><div class="a" style="left:1327.00px;top:453.50px;width:13.50px;height:13.00px;background:linear-gradient(#e4f0fb,#a9cdee);border:1px solid #7a9cc0;border-radius:2px"></div><svg class="a" style="left:1326.00px;top:448.00px;" width="18.00" height="17.00" viewBox="0 0 18.00 17.00"><path d="M3.5 10.5l3.5 4 8-13" stroke="#0e1a3a" stroke-width="2.2" fill="none" stroke-linecap="round"/></svg><span id="t32" class="t" style="left:1350.20px;top:457.04px;font-size:8.70px;color:#000;-webkit-text-stroke-width:0.1px">B.Adhes</span><div class="a" style="left:1304.50px;top:469.00px;width:19.00px;height:18.00px;background:linear-gradient(#fff,#f0f0f0);border:1px solid #b8b8b8;border-radius:4px"></div><div class="a" style="left:1309.80px;top:473.50px;width:8.50px;height:10.00px;background:#8c1010"></div><div class="a" style="left:1327.00px;top:471.50px;width:13.50px;height:13.00px;background:linear-gradient(#e4f0fb,#a9cdee);border:1px solid #7a9cc0;border-radius:2px"></div><svg class="a" style="left:1326.00px;top:466.00px;" width="18.00" height="17.00" viewBox="0 0 18.00 17.00"><path d="M3.5 10.5l3.5 4 8-13" stroke="#0e1a3a" stroke-width="2.2" fill="none" stroke-linecap="round"/></svg><span id="t33" class="t" style="left:1350.20px;top:475.04px;font-size:8.70px;color:#000;-webkit-text-stroke-width:0.1px">F.Paste</span><div class="a" style="left:1304.50px;top:487.00px;width:19.00px;height:18.00px;background:linear-gradient(#fff,#f0f0f0);border:1px solid #b8b8b8;border-radius:4px"></div><div class="a" style="left:1309.80px;top:491.50px;width:8.50px;height:10.00px;background:#1ec8c8"></div><div class="a" style="left:1327.00px;top:489.50px;width:13.50px;height:13.00px;background:linear-gradient(#e4f0fb,#a9cdee);border:1px solid #7a9cc0;border-radius:2px"></div><svg class="a" style="left:1326.00px;top:484.00px;" width="18.00" height="17.00" viewBox="0 0 18.00 17.00"><path d="M3.5 10.5l3.5 4 8-13" stroke="#0e1a3a" stroke-width="2.2" fill="none" stroke-linecap="round"/></svg><span id="t34" class="t" style="left:1350.20px;top:493.04px;font-size:8.70px;color:#000;-webkit-text-stroke-width:0.1px">B.Paste</span><div class="a" style="left:1304.50px;top:505.00px;width:19.00px;height:18.00px;background:linear-gradient(#fff,#f0f0f0);border:1px solid #b8b8b8;border-radius:4px"></div><div class="a" style="left:1309.80px;top:509.50px;width:8.50px;height:10.00px;background:#0e9696"></div><div class="a" style="left:1327.00px;top:507.50px;width:13.50px;height:13.00px;background:linear-gradient(#e4f0fb,#a9cdee);border:1px solid #7a9cc0;border-radius:2px"></div><svg class="a" style="left:1326.00px;top:502.00px;" width="18.00" height="17.00" viewBox="0 0 18.00 17.00"><path d="M3.5 10.5l3.5 4 8-13" stroke="#0e1a3a" stroke-width="2.2" fill="none" stroke-linecap="round"/></svg><span id="t35" class="t" style="left:1350.20px;top:511.04px;font-size:8.70px;color:#000;-webkit-text-stroke-width:0.1px">F.SilkS</span><div class="a" style="left:1304.50px;top:523.00px;width:19.00px;height:18.00px;background:linear-gradient(#fff,#f0f0f0);border:1px solid #b8b8b8;border-radius:4px"></div><div class="a" style="left:1309.80px;top:527.50px;width:8.50px;height:10.00px;background:#8c1c9a"></div><div class="a" style="left:1327.00px;top:525.50px;width:13.50px;height:13.00px;background:linear-gradient(#e4f0fb,#a9cdee);border:1px solid #7a9cc0;border-radius:2px"></div><svg class="a" style="left:1326.00px;top:520.00px;" width="18.00" height="17.00" viewBox="0 0 18.00 17.00"><path d="M3.5 10.5l3.5 4 8-13" stroke="#0e1a3a" stroke-width="2.2" fill="none" stroke-linecap="round"/></svg><span id="t36" class="t" style="left:1350.20px;top:529.04px;font-size:8.70px;color:#000;-webkit-text-stroke-width:0.1px">B.SilkS</span><div class="a" style="left:1304.50px;top:541.00px;width:19.00px;height:18.00px;background:linear-gradient(#fff,#f0f0f0);border:1px solid #b8b8b8;border-radius:4px"></div><div class="a" style="left:1309.80px;top:545.50px;width:8.50px;height:10.00px;background:#8c1c9a"></div><div class="a" style="left:1327.00px;top:543.50px;width:13.50px;height:13.00px;background:linear-gradient(#e4f0fb,#a9cdee);border:1px solid #7a9cc0;border-radius:2px"></div><svg class="a" style="left:1326.00px;top:538.00px;" width="18.00" height="17.00" viewBox="0 0 18.00 17.00"><path d="M3.5 10.5l3.5 4 8-13" stroke="#0e1a3a" stroke-width="2.2" fill="none" stroke-linecap="round"/></svg><span id="t37" class="t" style="left:1350.20px;top:547.04px;font-size:8.70px;color:#000;-webkit-text-stroke-width:0.1px">F.Mask</span><div class="a" style="left:1304.50px;top:559.00px;width:19.00px;height:18.00px;background:linear-gradient(#fff,#f0f0f0);border:1px solid #b8b8b8;border-radius:4px"></div><div class="a" style="left:1309.80px;top:563.50px;width:8.50px;height:10.00px;background:#8a8a10"></div><div class="a" style="left:1327.00px;top:561.50px;width:13.50px;height:13.00px;background:linear-gradient(#e4f0fb,#a9cdee);border:1px solid #7a9cc0;border-radius:2px"></div><svg class="a" style="left:1326.00px;top:556.00px;" width="18.00" height="17.00" viewBox="0 0 18.00 17.00"><path d="M3.5 10.5l3.5 4 8-13" stroke="#0e1a3a" stroke-width="2.2" fill="none" stroke-linecap="round"/></svg><span id="t38" class="t" style="left:1350.20px;top:565.04px;font-size:8.70px;color:#000;-webkit-text-stroke-width:0.1px">B.Mask</span><div class="a" style="left:1304.50px;top:577.00px;width:19.00px;height:18.00px;background:linear-gradient(#fff,#f0f0f0);border:1px solid #b8b8b8;border-radius:4px"></div><div class="a" style="left:1309.80px;top:581.50px;width:8.50px;height:10.00px;background:#cccccc"></div><div class="a" style="left:1327.00px;top:579.50px;width:13.50px;height:13.00px;background:linear-gradient(#e4f0fb,#a9cdee);border:1px solid #7a9cc0;border-radius:2px"></div><svg class="a" style="left:1326.00px;top:574.00px;" width="18.00" height="17.00" viewBox="0 0 18.00 17.00"><path d="M3.5 10.5l3.5 4 8-13" stroke="#0e1a3a" stroke-width="2.2" fill="none" stroke-linecap="round"/></svg><span id="t39" class="t" style="left:1350.20px;top:583.04px;font-size:8.70px;color:#000;-webkit-text-stroke-width:0.1px">Dwgs.User</span><div class="a" style="left:1304.50px;top:595.00px;width:19.00px;height:18.00px;background:linear-gradient(#fff,#f0f0f0);border:1px solid #b8b8b8;border-radius:4px"></div><div class="a" style="left:1309.80px;top:599.50px;width:8.50px;height:10.00px;background:#0c1a8c"></div><div class="a" style="left:1327.00px;top:597.50px;width:13.50px;height:13.00px;background:linear-gradient(#e4f0fb,#a9cdee);border:1px solid #7a9cc0;border-radius:2px"></div><svg class="a" style="left:1326.00px;top:592.00px;" width="18.00" height="17.00" viewBox="0 0 18.00 17.00"><path d="M3.5 10.5l3.5 4 8-13" stroke="#0e1a3a" stroke-width="2.2" fill="none" stroke-linecap="round"/></svg><span id="t40" class="t" style="left:1350.20px;top:601.04px;font-size:8.70px;color:#000;-webkit-text-stroke-width:0.1px">Cmts.User</span><div class="a" style="left:1304.50px;top:613.00px;width:19.00px;height:18.00px;background:linear-gradient(#fff,#f0f0f0);border:1px solid #b8b8b8;border-radius:4px"></div><div class="a" style="left:1309.80px;top:617.50px;width:8.50px;height:10.00px;background:#108a10"></div><div class="a" style="left:1327.00px;top:615.50px;width:13.50px;height:13.00px;background:linear-gradient(#e4f0fb,#a9cdee);border:1px solid #7a9cc0;border-radius:2px"></div><svg class="a" style="left:1326.00px;top:610.00px;" width="18.00" height="17.00" viewBox="0 0 18.00 17.00"><path d="M3.5 10.5l3.5 4 8-13" stroke="#0e1a3a" stroke-width="2.2" fill="none" stroke-linecap="round"/></svg><span id="t41" class="t" style="left:1350.20px;top:619.04px;font-size:8.70px;color:#000;-webkit-text-stroke-width:0.1px">Eco1.User</span><div class="a" style="left:1304.50px;top:631.00px;width:19.00px;height:18.00px;background:linear-gradient(#fff,#f0f0f0);border:1px solid #b8b8b8;border-radius:4px"></div><div class="a" style="left:1309.80px;top:635.50px;width:8.50px;height:10.00px;background:#cccc20"></div><div class="a" style="left:1327.00px;top:633.50px;width:13.50px;height:13.00px;background:linear-gradient(#e4f0fb,#a9cdee);border:1px solid #7a9cc0;border-radius:2px"></div><svg class="a" style="left:1326.00px;top:628.00px;" width="18.00" height="17.00" viewBox="0 0 18.00 17.00"><path d="M3.5 10.5l3.5 4 8-13" stroke="#0e1a3a" stroke-width="2.2" fill="none" stroke-linecap="round"/></svg><span id="t42" class="t" style="left:1350.20px;top:637.04px;font-size:8.70px;color:#000;-webkit-text-stroke-width:0.1px">Eco2.User</span><div class="a" style="left:1304.50px;top:649.00px;width:19.00px;height:18.00px;background:linear-gradient(#fff,#f0f0f0);border:1px solid #b8b8b8;border-radius:4px"></div><div class="a" style="left:1309.80px;top:653.50px;width:8.50px;height:10.00px;background:#cccc20"></div><div class="a" style="left:1327.00px;top:651.50px;width:13.50px;height:13.00px;background:linear-gradient(#e4f0fb,#a9cdee);border:1px solid #7a9cc0;border-radius:2px"></div><svg class="a" style="left:1326.00px;top:646.00px;" width="18.00" height="17.00" viewBox="0 0 18.00 17.00"><path d="M3.5 10.5l3.5 4 8-13" stroke="#0e1a3a" stroke-width="2.2" fill="none" stroke-linecap="round"/></svg><span id="t43" class="t" style="left:1350.20px;top:655.04px;font-size:8.70px;color:#000;-webkit-text-stroke-width:0.1px">Edge.Cuts</span><div class="a" style="left:1304.50px;top:667.00px;width:19.00px;height:18.00px;background:linear-gradient(#fff,#f0f0f0);border:1px solid #b8b8b8;border-radius:4px"></div><div class="a" style="left:1309.80px;top:671.50px;width:8.50px;height:10.00px;background:#d03ed0"></div><div class="a" style="left:1327.00px;top:669.50px;width:13.50px;height:13.00px;background:linear-gradient(#e4f0fb,#a9cdee);border:1px solid #7a9cc0;border-radius:2px"></div><svg class="a" style="left:1326.00px;top:664.00px;" width="18.00" height="17.00" viewBox="0 0 18.00 17.00"><path d="M3.5 10.5l3.5 4 8-13" stroke="#0e1a3a" stroke-width="2.2" fill="none" stroke-linecap="round"/></svg><span id="t44" class="t" style="left:1350.20px;top:673.04px;font-size:8.70px;color:#000;-webkit-text-stroke-width:0.1px">Margin</span><div class="a" style="left:1304.50px;top:685.00px;width:19.00px;height:18.00px;background:linear-gradient(#fff,#f0f0f0);border:1px solid #b8b8b8;border-radius:4px"></div><div class="a" style="left:1309.80px;top:689.50px;width:8.50px;height:10.00px;background:#8c8c8c"></div><div class="a" style="left:1327.00px;top:687.50px;width:13.50px;height:13.00px;background:linear-gradient(#e4f0fb,#a9cdee);border:1px solid #7a9cc0;border-radius:2px"></div><svg class="a" style="left:1326.00px;top:682.00px;" width="18.00" height="17.00" viewBox="0 0 18.00 17.00"><path d="M3.5 10.5l3.5 4 8-13" stroke="#0e1a3a" stroke-width="2.2" fill="none" stroke-linecap="round"/></svg><span id="t45" class="t" style="left:1350.20px;top:691.04px;font-size:8.70px;color:#000;-webkit-text-stroke-width:0.1px">F.CrtYd</span><div class="a" style="left:1304.50px;top:703.00px;width:19.00px;height:18.00px;background:linear-gradient(#fff,#f0f0f0);border:1px solid #b8b8b8;border-radius:4px"></div><div class="a" style="left:1309.80px;top:707.50px;width:8.50px;height:10.00px;background:#cccc20"></div><div class="a" style="left:1327.00px;top:705.50px;width:13.50px;height:13.00px;background:linear-gradient(#e4f0fb,#a9cdee);border:1px solid #7a9cc0;border-radius:2px"></div><svg class="a" style="left:1326.00px;top:700.00px;" width="18.00" height="17.00" viewBox="0 0 18.00 17.00"><path d="M3.5 10.5l3.5 4 8-13" stroke="#0e1a3a" stroke-width="2.2" fill="none" stroke-linecap="round"/></svg><span id="t46" class="t" style="left:1350.20px;top:709.04px;font-size:8.70px;color:#000;-webkit-text-stroke-width:0.1px">B.CrtYd</span><div class="a" style="left:1304.50px;top:721.00px;width:19.00px;height:18.00px;background:linear-gradient(#fff,#f0f0f0);border:1px solid #b8b8b8;border-radius:4px"></div><div class="a" style="left:1309.80px;top:725.50px;width:8.50px;height:10.00px;background:#cccc20"></div><div class="a" style="left:1327.00px;top:723.50px;width:13.50px;height:13.00px;background:linear-gradient(#e4f0fb,#a9cdee);border:1px solid #7a9cc0;border-radius:2px"></div><svg class="a" style="left:1326.00px;top:718.00px;" width="18.00" height="17.00" viewBox="0 0 18.00 17.00"><path d="M3.5 10.5l3.5 4 8-13" stroke="#0e1a3a" stroke-width="2.2" fill="none" stroke-linecap="round"/></svg><span id="t47" class="t" style="left:1350.20px;top:727.04px;font-size:8.70px;color:#000;-webkit-text-stroke-width:0.1px">F.Fab</span><div class="a" style="left:1304.50px;top:739.00px;width:19.00px;height:18.00px;background:linear-gradient(#fff,#f0f0f0);border:1px solid #b8b8b8;border-radius:4px"></div><div class="a" style="left:1309.80px;top:743.50px;width:8.50px;height:10.00px;background:#8c1010"></div><div class="a" style="left:1327.00px;top:741.50px;width:13.50px;height:13.00px;background:linear-gradient(#e4f0fb,#a9cdee);border:1px solid #7a9cc0;border-radius:2px"></div><svg class="a" style="left:1326.00px;top:736.00px;" width="18.00" height="17.00" viewBox="0 0 18.00 17.00"><path d="M3.5 10.5l3.5 4 8-13" stroke="#0e1a3a" stroke-width="2.2" fill="none" stroke-linecap="round"/></svg><span id="t48" class="t" style="left:1350.20px;top:745.04px;font-size:8.70px;color:#000;-webkit-text-stroke-width:0.1px">B.Fab</span><svg class="a" style="left:1294.00px;top:417.00px;" width="9.00" height="13.00" viewBox="0 0 9.00 13.00"><path d="M0 0l9 6.5-9 6.5z" fill="#2040e0"/></svg><div class="a" style="left:626.00px;top:824.00px;width:780.00px;height:29.00px;background:#ececec;border-top:1px solid #c0c0c0"></div><div class="a" style="left:626.00px;top:853.00px;width:780.00px;height:18.00px;background:#ececec;border-top:1px solid #cfcfcf;border-radius:0 0 5px 5px"></div><span id="t49" class="t" style="left:636.60px;top:828.97px;font-size:11.50px;color:#1f6a1f;letter-spacing:-1.021px;">Pads</span><span id="t50" class="t" style="left:636.60px;top:842.07px;font-size:11.50px;color:#1f6a1f;">49</span><span id="t51" class="t" style="left:690.00px;top:828.97px;font-size:11.50px;color:#1f6a1f;letter-spacing:-0.471px;">Vias</span><span id="t52" class="t" style="left:690.00px;top:842.07px;font-size:11.50px;color:#1f6a1f;">2</span><span id="t53" class="t" style="left:741.30px;top:828.97px;font-size:11.50px;color:#1f6a1f;letter-spacing:0.077px;">trackSegm</span><span id="t54" class="t" style="left:741.30px;top:842.07px;font-size:11.50px;color:#1f6a1f;">77</span><span id="t55" class="t" style="left:827.40px;top:828.97px;font-size:11.50px;color:#1e6a6a;letter-spacing:-0.248px;">Nodes</span><span id="t56" class="t" style="left:827.40px;top:842.07px;font-size:11.50px;color:#1e6a6a;">49</span><span id="t57" class="t" style="left:890.40px;top:828.97px;font-size:11.50px;color:#9a1c1c;letter-spacing:-0.432px;">Nets</span><span id="t58" class="t" style="left:890.40px;top:842.07px;font-size:11.50px;color:#9a1c1c;">15</span><span id="t59" class="t" style="left:943.50px;top:828.97px;font-size:11.50px;color:#1f6a1f;letter-spacing:-0.174px;">Links</span><span id="t60" class="t" style="left:943.50px;top:842.07px;font-size:11.50px;color:#1f6a1f;">35</span><span id="t61" class="t" style="left:1000.00px;top:828.97px;font-size:11.50px;color:#1f6a1f;letter-spacing:-0.023px;">Connect</span><span id="t62" class="t" style="left:1000.00px;top:842.07px;font-size:11.50px;color:#1f6a1f;">35</span><span id="t63" class="t" style="left:1074.60px;top:828.97px;font-size:11.50px;color:#1c1ca0;letter-spacing:0.003px;">Unconnected</span><span id="t64" class="t" style="left:1074.60px;top:842.07px;font-size:11.50px;color:#1c1ca0;">0</span><span id="t65" class="t" style="left:681.00px;top:855.84px;font-size:12.00px;color:#000;letter-spacing:0.079px;">Z 81276.6&nbsp;&nbsp;X 5.750000&nbsp;&nbsp;Y 3.900000</span><span id="t66" class="t" style="left:927.40px;top:855.84px;font-size:12.00px;color:#000;letter-spacing:0.173px;">dx 5.750000&nbsp;&nbsp;dy 3.900000&nbsp;&nbsp;d 6.947841</span><span id="t67" class="t" style="left:1213.30px;top:855.84px;font-size:12.00px;color:#000;letter-spacing:-0.331px;">Inches</span><svg class="a" style="left:635.0px;top:280.0px" width="26" height="26"><use href="#i_save_tray_dis" width="26" height="26"/></svg><svg class="a" style="left:678.0px;top:280.0px" width="26" height="26"><use href="#i_pagesettings" width="26" height="26"/></svg><svg class="a" style="left:721.0px;top:280.0px" width="26" height="26"><use href="#i_modedit" width="26" height="26"/></svg><svg class="a" style="left:754.7px;top:280.0px" width="26" height="26"><use href="#i_modview" width="26" height="26"/></svg><svg class="a" style="left:796.0px;top:280.0px" width="26" height="26"><use href="#i_undo_dis" width="26" height="26"/></svg><svg class="a" style="left:832.0px;top:280.0px" width="26" height="26"><use href="#i_redo_dis" width="26" height="26"/></svg><svg class="a" style="left:874.7px;top:280.0px" width="26" height="26"><use href="#i_print" width="26" height="26"/></svg><svg class="a" style="left:908.8px;top:280.0px" width="26" height="26"><use href="#i_plot" width="26" height="26"/></svg><svg class="a" style="left:952.0px;top:280.0px" width="26" height="26"><use href="#i_zoomin" width="26" height="26"/></svg><svg class="a" style="left:985.0px;top:280.0px" width="26" height="26"><use href="#i_zoomout" width="26" height="26"/></svg><svg class="a" style="left:1019.0px;top:280.0px" width="26" height="26"><use href="#i_refresh" width="26" height="26"/></svg><svg class="a" style="left:1052.7px;top:280.0px" width="26" height="26"><use href="#i_zoomfit" width="26" height="26"/></svg><svg class="a" style="left:1097.0px;top:280.0px" width="26" height="26"><use href="#i_find" width="26" height="26"/></svg><svg class="a" style="left:1140.0px;top:280.0px" width="26" height="26"><use href="#i_netlist" width="26" height="26"/></svg><svg class="a" style="left:1173.5px;top:280.0px" width="26" height="26"><use href="#i_bugcheck" width="26" height="26"/></svg><div class="a" style="left:669.60px;top:280.00px;width:1.00px;height:27.00px;background:#c4c4c4"></div><div class="a" style="left:712.70px;top:280.00px;width:1.00px;height:27.00px;background:#c4c4c4"></div><div class="a" style="left:790.00px;top:280.00px;width:1.00px;height:27.00px;background:#c4c4c4"></div><div class="a" style="left:866.00px;top:280.00px;width:1.00px;height:27.00px;background:#c4c4c4"></div><div class="a" style="left:943.50px;top:280.00px;width:1.00px;height:27.00px;background:#c4c4c4"></div><div class="a" style="left:1088.80px;top:280.00px;width:1.00px;height:27.00px;background:#c4c4c4"></div><div class="a" style="left:1131.60px;top:280.00px;width:1.00px;height:27.00px;background:#c4c4c4"></div><div class="a" style="left:1208.80px;top:280.00px;width:1.00px;height:27.00px;background:#c4c4c4"></div><div class="a" style="left:1381.00px;top:280.00px;width:1.00px;height:27.00px;background:#c4c4c4"></div><div class="a" style="left:1217.00px;top:282.00px;width:100.00px;height:22.00px;background:#fff;border:1px solid #a8a8a8;border-radius:2px"></div><div class="a" style="left:1221.00px;top:285.00px;width:16.00px;height:16.00px;background:#128a12;border:1px solid #222"></div><span id="t68" class="t" style="left:1240.00px;top:287.47px;font-size:13.50px;color:#000;letter-spacing:-0.103px;">B.Cu (PgDn)</span><div class="a" style="left:1321.00px;top:283.00px;width:20.00px;height:20.00px;background:linear-gradient(#fff,#e6e6e6);border:1px solid #b0b0b0;border-radius:4px"></div><svg class="a" style="left:1327.00px;top:290.00px;" width="8.00" height="6.00" viewBox="0 0 8.00 6.00"><path d="M0 0h8L4 6z" fill="#444"/></svg><svg class="a" style="left:1347.5px;top:280.5px" width="25" height="25"><use href="#i_layerbtn" width="25" height="25"/></svg><svg class="a" style="left:986.6px;top:318.0px" width="26" height="26"><use href="#i_autowidth" width="26" height="26"/></svg><svg class="a" style="left:632.0px;top:358.0px" width="26" height="26"><use href="#i_bug_no" width="26" height="26"/></svg><div class="a" style="left:629.3px;top:390.0px;width:31.5px;height:31.0px;background:#eaf2fd;border:1px solid #b0cdef;border-radius:2px"></div><svg class="a" style="left:632.0px;top:392.5px" width="26" height="26"><use href="#i_grid" width="26" height="26"/></svg><svg class="a" style="left:632.0px;top:427.5px" width="26" height="26"><use href="#i_polar" width="26" height="26"/></svg><div class="a" style="left:629.3px;top:459.0px;width:31.5px;height:30.0px;background:#eaf2fd;border:1px solid #b0cdef;border-radius:2px"></div><svg class="a" style="left:632.0px;top:461.0px" width="26" height="26"><use href="#i_inch" width="26" height="26"/></svg><svg class="a" style="left:632.0px;top:496.0px" width="26" height="26"><use href="#i_mm" width="26" height="26"/></svg><svg class="a" style="left:632.0px;top:529.0px" width="26" height="26"><use href="#i_cursor" width="26" height="26"/></svg><div class="a" style="left:633.00px;top:563.00px;width:24.00px;height:1.00px;background:#c8c8c8"></div><div class="a" style="left:629.3px;top:569.0px;width:31.5px;height:31.0px;background:#eaf2fd;border:1px solid #b0cdef;border-radius:2px"></div><svg class="a" style="left:632.0px;top:571.5px" width="26" height="26"><use href="#i_ratsnest" width="26" height="26"/></svg><div class="a" style="left:629.3px;top:603.0px;width:31.5px;height:31.0px;background:#eaf2fd;border:1px solid #b0cdef;border-radius:2px"></div><svg class="a" style="left:632.0px;top:605.6px" width="26" height="26"><use href="#i_modrats" width="26" height="26"/></svg><div class="a" style="left:633.00px;top:640.00px;width:24.00px;height:1.00px;background:#c8c8c8"></div><div class="a" style="left:629.3px;top:646.0px;width:31.5px;height:31.0px;background:#eaf2fd;border:1px solid #b0cdef;border-radius:2px"></div><svg class="a" style="left:632.0px;top:648.6px" width="26" height="26"><use href="#i_xdel" width="26" height="26"/></svg><div class="a" style="left:633.00px;top:683.50px;width:24.00px;height:1.00px;background:#c8c8c8"></div><div class="a" style="left:629.3px;top:690.0px;width:31.5px;height:30.0px;background:#eaf2fd;border:1px solid #b0cdef;border-radius:2px"></div><svg class="a" style="left:632.0px;top:692.0px" width="26" height="26"><use href="#i_pad_fill" width="26" height="26"/></svg><svg class="a" style="left:632.0px;top:725.7px" width="26" height="26"><use href="#i_pad_out" width="26" height="26"/></svg><svg class="a" style="left:632.0px;top:759.5px" width="26" height="26"><use href="#i_pad_out2" width="26" height="26"/></svg><div class="a" style="left:633.00px;top:794.70px;width:24.00px;height:1.00px;background:#c8c8c8"></div><div class="a" style="left:1242.0px;top:356.0px;width:32.0px;height:31.5px;background:#eaf2fd;border:1px solid #b0cdef;border-radius:2px"></div><svg class="a" style="left:1245.0px;top:359.0px" width="26" height="26"><use href="#i_arrow" width="26" height="26"/></svg><div class="a" style="left:1246.00px;top:393.60px;width:24.00px;height:1.00px;background:#c8c8c8"></div><div class="a" style="left:1246.00px;top:470.00px;width:24.00px;height:1.00px;background:#c8c8c8"></div><div class="a" style="left:1246.00px;top:615.50px;width:24.00px;height:1.00px;background:#c8c8c8"></div><div class="a" style="left:1246.00px;top:760.50px;width:24.00px;height:1.00px;background:#c8c8c8"></div><svg class="a" style="left:1245.0px;top:402.0px" width="26" height="26"><use href="#i_hlnet" width="26" height="26"/></svg><svg class="a" style="left:1245.0px;top:435.6px" width="26" height="26"><use href="#i_localrats" width="26" height="26"/></svg><svg class="a" style="left:1245.0px;top:478.7px" width="26" height="26"><use href="#i_module" width="26" height="26"/></svg><svg class="a" style="left:1245.0px;top:512.0px" width="26" height="26"><use href="#i_track" width="26" height="26"/></svg><svg class="a" style="left:1245.0px;top:546.7px" width="26" height="26"><use href="#i_via" width="26" height="26"/></svg><svg class="a" style="left:1245.0px;top:579.0px" width="26" height="26"><use href="#i_keepout" width="26" height="26"/></svg><svg class="a" style="left:1245.0px;top:624.0px" width="26" height="26"><use href="#i_dashline" width="26" height="26"/></svg><svg class="a" style="left:1245.0px;top:657.0px" width="26" height="26"><use href="#i_circle" width="26" height="26"/></svg><svg class="a" style="left:1245.0px;top:690.6px" width="26" height="26"><use href="#i_arc" width="26" height="26"/></svg><svg class="a" style="left:1245.0px;top:726.0px" width="26" height="26"><use href="#i_T_dark" width="26" height="26"/></svg><svg class="a" style="left:1245.0px;top:768.0px" width="26" height="26"><use href="#i_dimension" width="26" height="26"/></svg><svg class="a" style="left:0;top:0" width="1440" height="900" viewBox="0 0 1440 900"><rect x="665" y="352" width="556" height="456" fill="#000"/><defs><pattern id="hatch" width="6" height="6" patternUnits="userSpaceOnUse" patternTransform="rotate(-45)"><rect width="6" height="6" fill="#000"/><rect width="1.3" height="6" fill="#b81c1c"/></pattern><clipPath id="pcbclip"><rect x="665" y="352" width="556" height="456"/></clipPath></defs><g clip-path="url(#pcbclip)"><rect x="791.5" y="353.5" width="7.5" height="466.5" fill="url(#hatch)"/><rect x="1097" y="353.5" width="7" height="466.5" fill="url(#hatch)"/><rect x="791.5" y="353.5" width="312.5" height="3.5" fill="url(#hatch)"/><path d="M791.5 820 L791.5 353.7 L1103.5 353.7 L1103.5 820" stroke="#e08a20" stroke-width="1.3" fill="none" stroke-linecap="butt" stroke-linejoin="round"/><path d="M799 383.5 L1005 383.5 L1005 361.5 L1097 361.5 L1097 820 L799 820Z" fill="#5e0707" stroke="#a51616" stroke-width="2"/><path d="M806 430 L870 432 L945 442 L1062 439.5" stroke="rgba(160,24,24,.45)" stroke-width="14" fill="none" stroke-linecap="round" stroke-linejoin="round"/><path d="M806 400 L806 808" stroke="rgba(160,24,24,.45)" stroke-width="14" fill="none" stroke-linecap="round" stroke-linejoin="round"/><path d="M845 415 L950 428" stroke="rgba(160,24,24,.45)" stroke-width="14" fill="none" stroke-linecap="round" stroke-linejoin="round"/><path d="M932 623 L900 660" stroke="rgba(160,24,24,.45)" stroke-width="14" fill="none" stroke-linecap="round" stroke-linejoin="round"/><path d="M962 600 L975 612 L1040 612" stroke="rgba(160,24,24,.45)" stroke-width="14" fill="none" stroke-linecap="round" stroke-linejoin="round"/><path d="M1000 742 L1030 768" stroke="rgba(160,24,24,.45)" stroke-width="14" fill="none" stroke-linecap="round" stroke-linejoin="round"/><path d="M805 797 L890 797 L935 752" stroke="rgba(160,24,24,.45)" stroke-width="14" fill="none" stroke-linecap="round" stroke-linejoin="round"/><path d="M933 695 L965 725" stroke="rgba(160,24,24,.45)" stroke-width="14" fill="none" stroke-linecap="round" stroke-linejoin="round"/><path d="M950 760 L1063 760" stroke="rgba(160,24,24,.45)" stroke-width="14" fill="none" stroke-linecap="round" stroke-linejoin="round"/><path d="M808 655 L808 780 L840 800" stroke="rgba(160,24,24,.45)" stroke-width="14" fill="none" stroke-linecap="round" stroke-linejoin="round"/><path d="M855 570 L870 555" stroke="rgba(160,24,24,.45)" stroke-width="14" fill="none" stroke-linecap="round" stroke-linejoin="round"/><path d="M1000 520 L1050 520" stroke="rgba(160,24,24,.45)" stroke-width="14" fill="none" stroke-linecap="round" stroke-linejoin="round"/><path d="M817 395 L817 808" stroke="#a51616" stroke-width="1.4" fill="none" stroke-linecap="butt" stroke-linejoin="round"/><path d="M1089 395 L1089 808" stroke="#a51616" stroke-width="1.4" fill="none" stroke-linecap="butt" stroke-linejoin="round"/><path d="M990 408 L1080 408" stroke="#a51616" stroke-width="29" fill="none" stroke-linecap="round" stroke-linejoin="round"/><path d="M990 408 L1080 408" stroke="#000" stroke-width="26" fill="none" stroke-linecap="round" stroke-linejoin="round"/><path d="M962.7 619.3 L1048 619 L1080 642 L1080 736" stroke="#a51616" stroke-width="23" fill="none" stroke-linecap="round" stroke-linejoin="round"/><path d="M962.7 619.3 L1048 619 L1080 642 L1080 736" stroke="#000" stroke-width="20" fill="none" stroke-linecap="round" stroke-linejoin="round"/><path d="M962.7 752 L993 797.7 L1080 797.7" stroke="#a51616" stroke-width="23" fill="none" stroke-linecap="round" stroke-linejoin="round"/><path d="M962.7 752 L993 797.7 L1080 797.7" stroke="#000" stroke-width="20" fill="none" stroke-linecap="round" stroke-linejoin="round"/><path d="M898 500 L898 640 L903 650 L903 668 L885 688 L869.4 687.3" stroke="#a51616" stroke-width="24" fill="none" stroke-linecap="round" stroke-linejoin="round"/><path d="M898 500 L898 640 L903 650 L903 668 L885 688 L869.4 687.3" stroke="#000" stroke-width="21" fill="none" stroke-linecap="round" stroke-linejoin="round"/><path d="M862 474 L860 522 L838 548 L838 560" stroke="#a51616" stroke-width="17" fill="none" stroke-linecap="round" stroke-linejoin="round"/><path d="M862 474 L860 522 L838 548 L838 560" stroke="#000" stroke-width="14" fill="none" stroke-linecap="round" stroke-linejoin="round"/><path d="M840 437 L900 440" stroke="#a51616" stroke-width="17" fill="none" stroke-linecap="round" stroke-linejoin="round"/><path d="M840 437 L900 440" stroke="#000" stroke-width="14" fill="none" stroke-linecap="round" stroke-linejoin="round"/><path d="M850 470 L880 478" stroke="#a51616" stroke-width="13" fill="none" stroke-linecap="round" stroke-linejoin="round"/><path d="M850 470 L880 478" stroke="#000" stroke-width="10" fill="none" stroke-linecap="round" stroke-linejoin="round"/><path d="M962.7 525 L990 528 L1050 528" stroke="#a51616" stroke-width="21" fill="none" stroke-linecap="round" stroke-linejoin="round"/><path d="M962.7 525 L990 528 L1050 528" stroke="#000" stroke-width="18" fill="none" stroke-linecap="round" stroke-linejoin="round"/><path d="M962.7 556.5 L990 553 L1050 553" stroke="#a51616" stroke-width="21" fill="none" stroke-linecap="round" stroke-linejoin="round"/><path d="M962.7 556.5 L990 553 L1050 553" stroke="#000" stroke-width="18" fill="none" stroke-linecap="round" stroke-linejoin="round"/><path d="M962.7 657 L995 657" stroke="#a51616" stroke-width="19" fill="none" stroke-linecap="round" stroke-linejoin="round"/><path d="M962.7 657 L995 657" stroke="#000" stroke-width="16" fill="none" stroke-linecap="round" stroke-linejoin="round"/><path d="M962.7 687 L995 687" stroke="#a51616" stroke-width="19" fill="none" stroke-linecap="round" stroke-linejoin="round"/><path d="M962.7 687 L995 687" stroke="#000" stroke-width="16" fill="none" stroke-linecap="round" stroke-linejoin="round"/><path d="M852 588 L869.4 588" stroke="#a51616" stroke-width="15" fill="none" stroke-linecap="round" stroke-linejoin="round"/><path d="M852 588 L869.4 588" stroke="#000" stroke-width="12" fill="none" stroke-linecap="round" stroke-linejoin="round"/><path d="M852 619.3 L869.4 619.3" stroke="#a51616" stroke-width="15" fill="none" stroke-linecap="round" stroke-linejoin="round"/><path d="M852 619.3 L869.4 619.3" stroke="#000" stroke-width="12" fill="none" stroke-linecap="round" stroke-linejoin="round"/><path d="M852 720 L869.4 720" stroke="#a51616" stroke-width="15" fill="none" stroke-linecap="round" stroke-linejoin="round"/><path d="M852 720 L869.4 720" stroke="#000" stroke-width="12" fill="none" stroke-linecap="round" stroke-linejoin="round"/><path d="M852 752 L869.4 752" stroke="#a51616" stroke-width="15" fill="none" stroke-linecap="round" stroke-linejoin="round"/><path d="M852 752 L869.4 752" stroke="#000" stroke-width="12" fill="none" stroke-linecap="round" stroke-linejoin="round"/><path d="M948 720 L1000 720" stroke="#a51616" stroke-width="15" fill="none" stroke-linecap="round" stroke-linejoin="round"/><path d="M948 720 L1000 720" stroke="#000" stroke-width="12" fill="none" stroke-linecap="round" stroke-linejoin="round"/><path d="M935 560 L948 540" stroke="#a51616" stroke-width="15" fill="none" stroke-linecap="round" stroke-linejoin="round"/><path d="M935 560 L948 540" stroke="#000" stroke-width="12" fill="none" stroke-linecap="round" stroke-linejoin="round"/><rect x="799" y="357" width="205" height="25.5" fill="#000"/><circle cx="877" cy="424" r="17" fill="#a51616"/><circle cx="877" cy="424" r="15.5" fill="#000"/><circle cx="877" cy="455" r="17" fill="#a51616"/><circle cx="877" cy="455" r="15.5" fill="#000"/><circle cx="986" cy="408" r="21" fill="#a51616"/><circle cx="986" cy="408" r="19.5" fill="#000"/><circle cx="986" cy="470" r="21" fill="#a51616"/><circle cx="986" cy="470" r="19.5" fill="#000"/><circle cx="1080.4" cy="408.3" r="19" fill="#a51616"/><circle cx="1080.4" cy="408.3" r="17.5" fill="#000"/><circle cx="1080.4" cy="439.5" r="17" fill="#a51616"/><circle cx="1080.4" cy="439.5" r="15.5" fill="#000"/><circle cx="1080.5" cy="736" r="19" fill="#a51616"/><circle cx="1080.5" cy="736" r="17.5" fill="#000"/><circle cx="1080.5" cy="767.3" r="17" fill="#a51616"/><circle cx="1080.5" cy="767.3" r="15.5" fill="#000"/><circle cx="1080.5" cy="798.8" r="17" fill="#a51616"/><circle cx="1080.5" cy="798.8" r="15.5" fill="#000"/><circle cx="947.4" cy="405" r="14" fill="#a51616"/><circle cx="947.4" cy="405" r="12.5" fill="#000"/><circle cx="947.4" cy="488" r="14" fill="#a51616"/><circle cx="947.4" cy="488" r="12.5" fill="#000"/><circle cx="869.4" cy="525" r="16.2" fill="#a51616"/><circle cx="869.4" cy="525" r="14.7" fill="#000"/><circle cx="962.7" cy="525" r="16.2" fill="#a51616"/><circle cx="962.7" cy="525" r="14.7" fill="#000"/><circle cx="869.4" cy="556.5" r="16.2" fill="#a51616"/><circle cx="869.4" cy="556.5" r="14.7" fill="#000"/><circle cx="962.7" cy="556.5" r="16.2" fill="#a51616"/><circle cx="962.7" cy="556.5" r="14.7" fill="#000"/><circle cx="869.4" cy="588" r="16.2" fill="#a51616"/><circle cx="869.4" cy="588" r="14.7" fill="#000"/><circle cx="962.7" cy="588" r="16.2" fill="#a51616"/><circle cx="962.7" cy="588" r="14.7" fill="#000"/><circle cx="869.4" cy="619.3" r="16.2" fill="#a51616"/><circle cx="869.4" cy="619.3" r="14.7" fill="#000"/><circle cx="962.7" cy="619.3" r="16.2" fill="#a51616"/><circle cx="962.7" cy="619.3" r="14.7" fill="#000"/><circle cx="869.4" cy="656.7" r="16.2" fill="#a51616"/><circle cx="869.4" cy="656.7" r="14.7" fill="#000"/><circle cx="962.7" cy="656.7" r="16.2" fill="#a51616"/><circle cx="962.7" cy="656.7" r="14.7" fill="#000"/><circle cx="869.4" cy="687.3" r="16.2" fill="#a51616"/><circle cx="869.4" cy="687.3" r="14.7" fill="#000"/><circle cx="962.7" cy="687.3" r="16.2" fill="#a51616"/><circle cx="962.7" cy="687.3" r="14.7" fill="#000"/><circle cx="869.4" cy="720" r="16.2" fill="#a51616"/><circle cx="869.4" cy="720" r="14.7" fill="#000"/><circle cx="962.7" cy="720" r="16.2" fill="#a51616"/><circle cx="962.7" cy="720" r="14.7" fill="#000"/><circle cx="869.4" cy="752" r="16.2" fill="#a51616"/><circle cx="869.4" cy="752" r="14.7" fill="#000"/><circle cx="962.7" cy="752" r="16.2" fill="#a51616"/><circle cx="962.7" cy="752" r="14.7" fill="#000"/><rect x="805" y="573" width="51" height="30" rx="6" fill="#5e0707" stroke="#a51616" stroke-width="1.5"/><rect x="805" y="604" width="51" height="31" rx="6" fill="#5e0707" stroke="#a51616" stroke-width="1.5"/><rect x="805" y="705" width="51" height="31" rx="6" fill="#5e0707" stroke="#a51616" stroke-width="1.5"/><rect x="805" y="737" width="51" height="30" rx="6" fill="#5e0707" stroke="#a51616" stroke-width="1.5"/><rect x="813" y="414" width="31" height="51" rx="6" fill="#5e0707" stroke="#a51616" stroke-width="1.5"/><rect x="884" y="473" width="52" height="30" rx="6" fill="#5e0707" stroke="#a51616" stroke-width="1.5"/><rect x="1000" y="573" width="50" height="30" rx="6" fill="#5e0707" stroke="#a51616" stroke-width="1.5"/><rect x="995" y="705" width="45" height="31" rx="6" fill="#5e0707" stroke="#a51616" stroke-width="1.5"/><rect x="984" y="517" width="34" height="47" rx="6" fill="#5e0707" stroke="#a51616" stroke-width="1.5"/><rect x="1023" y="517" width="35" height="47" rx="6" fill="#5e0707" stroke="#a51616" stroke-width="1.5"/><rect x="976" y="649" width="35" height="50" rx="6" fill="#5e0707" stroke="#a51616" stroke-width="1.5"/><rect x="1015" y="649" width="35" height="50" rx="6" fill="#5e0707" stroke="#a51616" stroke-width="1.5"/><rect x="812" y="601.5" width="56" height="4" fill="#000"/><rect x="812" y="734" width="56" height="4" fill="#000"/><path d="M990 408 L1080 408" stroke="#620909" stroke-width="15" fill="none" stroke-linecap="round" stroke-linejoin="round"/><path d="M962.7 619.3 L1048 619 L1080 642 L1080 736" stroke="#620909" stroke-width="8" fill="none" stroke-linecap="round" stroke-linejoin="round"/><path d="M962.7 752 L993 797.7 L1080 797.7" stroke="#620909" stroke-width="8" fill="none" stroke-linecap="round" stroke-linejoin="round"/><path d="M898 500 L898 640 L903 650 L903 668 L885 688 L869.4 687.3" stroke="#620909" stroke-width="8" fill="none" stroke-linecap="round" stroke-linejoin="round"/><path d="M862 474 L860 522 L838 548 L838 560" stroke="#620909" stroke-width="6" fill="none" stroke-linecap="round" stroke-linejoin="round"/><path d="M840 437 L900 440" stroke="#620909" stroke-width="6" fill="none" stroke-linecap="round" stroke-linejoin="round"/><path d="M962.7 525 L990 528 L1050 528" stroke="#620909" stroke-width="8" fill="none" stroke-linecap="round" stroke-linejoin="round"/><path d="M962.7 556.5 L990 553 L1050 553" stroke="#620909" stroke-width="8" fill="none" stroke-linecap="round" stroke-linejoin="round"/><path d="M962.7 657 L995 657" stroke="#620909" stroke-width="6" fill="none" stroke-linecap="round" stroke-linejoin="round"/><path d="M962.7 687 L995 687" stroke="#620909" stroke-width="6" fill="none" stroke-linecap="round" stroke-linejoin="round"/><path d="M852 588 L869.4 588" stroke="#620909" stroke-width="6" fill="none" stroke-linecap="round" stroke-linejoin="round"/><path d="M852 619.3 L869.4 619.3" stroke="#620909" stroke-width="6" fill="none" stroke-linecap="round" stroke-linejoin="round"/><path d="M852 720 L869.4 720" stroke="#620909" stroke-width="6" fill="none" stroke-linecap="round" stroke-linejoin="round"/><path d="M852 752 L869.4 752" stroke="#620909" stroke-width="6" fill="none" stroke-linecap="round" stroke-linejoin="round"/><path d="M948 720 L1000 720" stroke="#620909" stroke-width="6" fill="none" stroke-linecap="round" stroke-linejoin="round"/><path d="M935 560 L948 540" stroke="#620909" stroke-width="6" fill="none" stroke-linecap="round" stroke-linejoin="round"/><path d="M947.4 405 L947.4 488" stroke="rgba(30,150,30,.75)" stroke-width="6" fill="none" stroke-linecap="butt" stroke-linejoin="round"/><rect x="810.2" y="578.3" width="16.7" height="19.5" fill="#b01818"/><rect x="834.2" y="578.3" width="16.6" height="19.5" fill="#b01818"/><rect x="807.4" y="575.6" width="22.2" height="25" fill="none" stroke="#b01818" stroke-width="1"/><rect x="831.2" y="575.6" width="22.3" height="25" fill="none" stroke="#b01818" stroke-width="1"/><rect x="810.2" y="609.6" width="16.7" height="19.5" fill="#b01818"/><rect x="834.2" y="609.6" width="16.6" height="19.5" fill="#b01818"/><rect x="807.4" y="606.9" width="22.2" height="25" fill="none" stroke="#b01818" stroke-width="1"/><rect x="831.2" y="606.9" width="22.3" height="25" fill="none" stroke="#b01818" stroke-width="1"/><rect x="810.2" y="711" width="16.7" height="19.5" fill="#b01818"/><rect x="834.2" y="711" width="16.6" height="19.5" fill="#b01818"/><rect x="807.4" y="708.3" width="22.2" height="25" fill="none" stroke="#b01818" stroke-width="1"/><rect x="831.2" y="708.3" width="22.3" height="25" fill="none" stroke="#b01818" stroke-width="1"/><rect x="810.2" y="742.3" width="16.7" height="19.5" fill="#b01818"/><rect x="834.2" y="742.3" width="16.6" height="19.5" fill="#b01818"/><rect x="807.4" y="739.6" width="22.2" height="25" fill="none" stroke="#b01818" stroke-width="1"/><rect x="831.2" y="739.6" width="22.3" height="25" fill="none" stroke="#b01818" stroke-width="1"/><rect x="1005.2" y="578.3" width="16.7" height="19.5" fill="#b01818"/><rect x="1029.2" y="578.3" width="16.6" height="19.5" fill="#b01818"/><rect x="1002.4" y="575.6" width="22.2" height="25" fill="none" stroke="#b01818" stroke-width="1"/><rect x="1026.2" y="575.6" width="22.3" height="25" fill="none" stroke="#b01818" stroke-width="1"/><rect x="998.2" y="711" width="16.7" height="19.5" fill="#b01818"/><rect x="1022.2" y="711" width="16.6" height="19.5" fill="#b01818"/><rect x="995.4" y="708.3" width="22.2" height="25" fill="none" stroke="#b01818" stroke-width="1"/><rect x="1019.2" y="708.3" width="22.3" height="25" fill="none" stroke="#b01818" stroke-width="1"/><rect x="818.4" y="420" width="20.3" height="16.4" fill="#b01818"/><rect x="818.4" y="441.9" width="20.3" height="17.9" fill="#b01818"/><rect x="816" y="416" width="25.3" height="46.9" fill="none" stroke="#b01818" stroke-width="1"/><rect x="890" y="478.3" width="17.8" height="20" fill="#b01818"/><rect x="911" y="478.3" width="19" height="20" fill="#b01818"/><rect x="886.7" y="475.6" width="46.1" height="25" fill="none" stroke="#b01818" stroke-width="1"/><path d="M909.4 475.6 L909.4 500.6" stroke="#b01818" stroke-width="1" fill="none" stroke-linecap="round" stroke-linejoin="round"/><rect x="990.75" y="520" width="22" height="19.75" fill="none" stroke="#b01818" stroke-width="1"/><rect x="990.75" y="541.75" width="22" height="19.75" fill="none" stroke="#b01818" stroke-width="1"/><rect x="993.25" y="524" width="17" height="10" fill="#b01818"/><rect x="993.25" y="547.5" width="17" height="10" fill="#b01818"/><rect x="1030" y="520" width="22" height="19.75" fill="none" stroke="#b01818" stroke-width="1"/><rect x="1030" y="541.75" width="22" height="19.75" fill="none" stroke="#b01818" stroke-width="1"/><rect x="1032.5" y="524" width="17" height="10" fill="#b01818"/><rect x="1032.5" y="547.5" width="17" height="10" fill="#b01818"/><rect x="983.4" y="652.7" width="22" height="20.3" fill="none" stroke="#b01818" stroke-width="1"/><rect x="983.4" y="675" width="22" height="20.3" fill="none" stroke="#b01818" stroke-width="1"/><rect x="985.9" y="656.7" width="17" height="10" fill="#b01818"/><rect x="985.9" y="681.3" width="17" height="10" fill="#b01818"/><rect x="1022" y="652.7" width="22" height="20.3" fill="none" stroke="#b01818" stroke-width="1"/><rect x="1022" y="675" width="22" height="20.3" fill="none" stroke="#b01818" stroke-width="1"/><rect x="1024.5" y="656.7" width="17" height="10" fill="#b01818"/><rect x="1024.5" y="681.3" width="17" height="10" fill="#b01818"/><circle cx="877" cy="424" r="10.5" fill="#b8ac2c"/><circle cx="877" cy="424" r="12.5" fill="none" stroke="#d8d040" stroke-width="1"/><circle cx="877" cy="424" r="5.5" fill="#000"/><circle cx="877" cy="455" r="10.5" fill="#b8ac2c"/><circle cx="877" cy="455" r="12.5" fill="none" stroke="#d8d040" stroke-width="1"/><circle cx="877" cy="455" r="5.5" fill="#000"/><circle cx="986" cy="408.3" r="13.5" fill="#b8ac2c"/><circle cx="986" cy="408.3" r="15.5" fill="none" stroke="#d8d040" stroke-width="1"/><circle cx="986" cy="408.3" r="6.5" fill="#000"/><circle cx="986" cy="470" r="13.5" fill="#b8ac2c"/><circle cx="986" cy="470" r="15.5" fill="none" stroke="#d8d040" stroke-width="1"/><circle cx="986" cy="470" r="6.5" fill="#000"/><rect x="1069.4" y="397.3" width="22" height="22" fill="#b8ac2c"/><rect x="1067.4" y="395.3" width="26" height="26" fill="none" stroke="#d8d040" stroke-width="1"/><circle cx="1080.4" cy="408.3" r="6" fill="#000"/><circle cx="1080.4" cy="439.5" r="10.5" fill="#b8ac2c"/><circle cx="1080.4" cy="439.5" r="12.5" fill="none" stroke="#d8d040" stroke-width="1"/><circle cx="1080.4" cy="439.5" r="5.5" fill="#000"/><rect x="1069.5" y="725" width="22" height="22" fill="#b8ac2c"/><rect x="1067.5" y="723" width="26" height="26" fill="none" stroke="#d8d040" stroke-width="1"/><circle cx="1080.5" cy="736" r="6" fill="#000"/><circle cx="1080.5" cy="767.3" r="10.5" fill="#b8ac2c"/><circle cx="1080.5" cy="767.3" r="12.5" fill="none" stroke="#d8d040" stroke-width="1"/><circle cx="1080.5" cy="767.3" r="5.5" fill="#000"/><circle cx="1080.5" cy="798.8" r="10.5" fill="#b8ac2c"/><circle cx="1080.5" cy="798.8" r="12.5" fill="none" stroke="#d8d040" stroke-width="1"/><circle cx="1080.5" cy="798.8" r="5.5" fill="#000"/><circle cx="869.4" cy="525" r="10" fill="#b8ac2c"/><circle cx="869.4" cy="525" r="12" fill="none" stroke="#d8d040" stroke-width="1"/><circle cx="869.4" cy="525" r="5.3" fill="#000"/><circle cx="962.7" cy="525" r="10" fill="#b8ac2c"/><circle cx="962.7" cy="525" r="12" fill="none" stroke="#d8d040" stroke-width="1"/><circle cx="962.7" cy="525" r="5.3" fill="#000"/><circle cx="869.4" cy="556.5" r="10" fill="#b8ac2c"/><circle cx="869.4" cy="556.5" r="12" fill="none" stroke="#d8d040" stroke-width="1"/><circle cx="869.4" cy="556.5" r="5.3" fill="#000"/><circle cx="962.7" cy="556.5" r="10" fill="#b8ac2c"/><circle cx="962.7" cy="556.5" r="12" fill="none" stroke="#d8d040" stroke-width="1"/><circle cx="962.7" cy="556.5" r="5.3" fill="#000"/><circle cx="869.4" cy="588" r="10" fill="#b8ac2c"/><circle cx="869.4" cy="588" r="12" fill="none" stroke="#d8d040" stroke-width="1"/><circle cx="869.4" cy="588" r="5.3" fill="#000"/><circle cx="962.7" cy="588" r="10" fill="#b8ac2c"/><circle cx="962.7" cy="588" r="12" fill="none" stroke="#d8d040" stroke-width="1"/><circle cx="962.7" cy="588" r="5.3" fill="#000"/><rect x="858.9" y="608.8" width="21" height="21" fill="#b8ac2c"/><rect x="856.9" y="606.8" width="25" height="25" fill="none" stroke="#d8d040" stroke-width="1"/><circle cx="869.4" cy="619.3" r="5.3" fill="#000"/><circle cx="962.7" cy="619.3" r="10" fill="#b8ac2c"/><circle cx="962.7" cy="619.3" r="12" fill="none" stroke="#d8d040" stroke-width="1"/><circle cx="962.7" cy="619.3" r="5.3" fill="#000"/><circle cx="869.4" cy="656.7" r="10" fill="#b8ac2c"/><circle cx="869.4" cy="656.7" r="12" fill="none" stroke="#d8d040" stroke-width="1"/><circle cx="869.4" cy="656.7" r="5.3" fill="#000"/><circle cx="962.7" cy="656.7" r="10" fill="#b8ac2c"/><circle cx="962.7" cy="656.7" r="12" fill="none" stroke="#d8d040" stroke-width="1"/><circle cx="962.7" cy="656.7" r="5.3" fill="#000"/><circle cx="869.4" cy="687.3" r="10" fill="#b8ac2c"/><circle cx="869.4" cy="687.3" r="12" fill="none" stroke="#d8d040" stroke-width="1"/><circle cx="869.4" cy="687.3" r="5.3" fill="#000"/><circle cx="962.7" cy="687.3" r="10" fill="#b8ac2c"/><circle cx="962.7" cy="687.3" r="12" fill="none" stroke="#d8d040" stroke-width="1"/><circle cx="962.7" cy="687.3" r="5.3" fill="#000"/><circle cx="869.4" cy="720" r="10" fill="#b8ac2c"/><circle cx="869.4" cy="720" r="12" fill="none" stroke="#d8d040" stroke-width="1"/><circle cx="869.4" cy="720" r="5.3" fill="#000"/><circle cx="962.7" cy="720" r="10" fill="#b8ac2c"/><circle cx="962.7" cy="720" r="12" fill="none" stroke="#d8d040" stroke-width="1"/><circle cx="962.7" cy="720" r="5.3" fill="#000"/><rect x="858.9" y="741.5" width="21" height="21" fill="#b8ac2c"/><rect x="856.9" y="739.5" width="25" height="25" fill="none" stroke="#d8d040" stroke-width="1"/><circle cx="869.4" cy="752" r="5.3" fill="#000"/><circle cx="962.7" cy="752" r="10" fill="#b8ac2c"/><circle cx="962.7" cy="752" r="12" fill="none" stroke="#d8d040" stroke-width="1"/><circle cx="962.7" cy="752" r="5.3" fill="#000"/><circle cx="947.4" cy="405" r="6.5" fill="#000" stroke="#b8b8b8" stroke-width="3"/><circle cx="947.4" cy="488" r="6.5" fill="#7a3a12" stroke="#b8b8b8" stroke-width="3"/><circle cx="877" cy="439.5" r="32.5" fill="none" stroke="#a030a8" stroke-width="3.2"/><path d="M888 446.6 L904.5 446.6" stroke="#a030a8" stroke-width="4.5" fill="none" stroke-linecap="butt" stroke-linejoin="round"/><path d="M896.3 438.5 L896.3 455" stroke="#a030a8" stroke-width="4.5" fill="none" stroke-linecap="butt" stroke-linejoin="round"/><path d="M851 446 L865 446" stroke="#c02020" stroke-width="2.5" fill="none" stroke-linecap="butt" stroke-linejoin="round"/><path d="M858 439 L858 453" stroke="#c02020" stroke-width="2.5" fill="none" stroke-linecap="butt" stroke-linejoin="round"/><path d="M970 408 L922.6 408 L922.6 470.6 L970 470.6" stroke="#a030a8" stroke-width="3" fill="none" stroke-linecap="butt" stroke-linejoin="round"/><path d="M1002 408 L1050.5 408 L1050.5 470.6 L1002 470.6" stroke="#a030a8" stroke-width="3" fill="none" stroke-linecap="butt" stroke-linejoin="round"/><rect x="1063.5" y="391.5" width="33" height="63.5" fill="none" stroke="#a030a8" stroke-width="3"/><path d="M1063.5 820 L1063.5 720.5 L1096.5 720.5 L1096.5 820" stroke="#a030a8" stroke-width="3" fill="none" stroke-linecap="butt" stroke-linejoin="round"/><path d="M1063.5 752.5 L1096.5 752.5" stroke="#a030a8" stroke-width="3" fill="none" stroke-linecap="butt" stroke-linejoin="round"/><rect x="884.5" y="509.5" width="63.5" height="125" fill="none" stroke="#a030a8" stroke-width="3"/><path d="M900 634.5 L900 618.5 L932.5 618.5 L932.5 634.5" stroke="#a030a8" stroke-width="3" fill="none" stroke-linecap="butt" stroke-linejoin="round"/><rect x="884.5" y="642" width="63.5" height="125.5" fill="none" stroke="#a030a8" stroke-width="3"/><path d="M900 767.5 L900 751.5 L932.5 751.5 L932.5 767.5" stroke="#a030a8" stroke-width="3" fill="none" stroke-linecap="butt" stroke-linejoin="round"/><text x="813" y="406" font-size="20.1613" fill="#a030a8" font-family="Liberation Mono" textLength="43" lengthAdjust="spacingAndGlyphs" transform="translate(1669 0) scale(-1 1)" stroke="#a030a8" stroke-width="0.6">C2A1</text><text x="904" y="406" font-size="20.1613" fill="#a030a8" font-family="Liberation Mono" textLength="18" lengthAdjust="spacingAndGlyphs" transform="translate(1826 0) scale(-1 1)" stroke="#a030a8" stroke-width="0.6">L1</text><text x="1070" y="476.5" font-size="22.5806" fill="#a030a8" font-family="Liberation Mono" textLength="20.6" lengthAdjust="spacingAndGlyphs" transform="translate(2160.6 0) scale(-1 1)" stroke="#a030a8" stroke-width="0.6">P1</text><text x="1069" y="710" font-size="21.4516" fill="#a030a8" font-family="Liberation Mono" textLength="21.7" lengthAdjust="spacingAndGlyphs" transform="translate(2159.7 0) scale(-1 1)" stroke="#a030a8" stroke-width="0.6">P2</text><text x="924" y="798.8" font-size="27.0968" fill="#a030a8" font-family="Liberation Mono" textLength="30.7" lengthAdjust="spacingAndGlyphs" transform="translate(1878.7 0) scale(-1 1)" stroke="#a030a8" stroke-width="0.6">IC2</text><text x="887" y="499.4" font-size="20.4839" fill="#a030a8" font-family="Liberation Mono" textLength="25.8" lengthAdjust="spacingAndGlyphs" transform="translate(1799.8 0) scale(-1 1)" stroke="#a030a8" stroke-width="0.6">IC1</text><path d="M997.325 518 L989 518 L989 563.5 L997.325 563.5" stroke="#20b0b0" stroke-width="4" fill="none" stroke-linecap="round" stroke-linejoin="round"/><path d="M1006.17 518 L1014.5 518 L1014.5 563.5 L1006.17 563.5" stroke="#20b0b0" stroke-width="4" fill="none" stroke-linecap="round" stroke-linejoin="round"/><path d="M1036.5 518 L1028 518 L1028 563.5 L1036.5 563.5" stroke="#20b0b0" stroke-width="4" fill="none" stroke-linecap="round" stroke-linejoin="round"/><path d="M1045.5 518 L1054 518 L1054 563.5 L1045.5 563.5" stroke="#20b0b0" stroke-width="4" fill="none" stroke-linecap="round" stroke-linejoin="round"/><path d="M989.93 650.7 L981.5 650.7 L981.5 697.3 L989.93 697.3" stroke="#20b0b0" stroke-width="4" fill="none" stroke-linecap="round" stroke-linejoin="round"/><path d="M998.87 650.7 L1007.3 650.7 L1007.3 697.3 L998.87 697.3" stroke="#20b0b0" stroke-width="4" fill="none" stroke-linecap="round" stroke-linejoin="round"/><path d="M1028.5 650.7 L1020 650.7 L1020 697.3 L1028.5 697.3" stroke="#20b0b0" stroke-width="4" fill="none" stroke-linecap="round" stroke-linejoin="round"/><path d="M1037.5 650.7 L1046 650.7 L1046 697.3 L1037.5 697.3" stroke="#20b0b0" stroke-width="4" fill="none" stroke-linecap="round" stroke-linejoin="round"/><rect x="817.2" y="579.4" width="25.6" height="16.7" fill="none" stroke="#20b0b0" stroke-width="1.6"/><path d="M822.32 579.4 L822.32 596.1" stroke="#20b0b0" stroke-width="1.6" fill="none" stroke-linecap="butt" stroke-linejoin="round"/><path d="M838.96 579.4 L838.96 596.1" stroke="#20b0b0" stroke-width="1.6" fill="none" stroke-linecap="butt" stroke-linejoin="round"/><rect x="817.2" y="610.7" width="25.6" height="16.7" fill="none" stroke="#20b0b0" stroke-width="1.6"/><path d="M822.32 610.7 L822.32 627.4" stroke="#20b0b0" stroke-width="1.6" fill="none" stroke-linecap="butt" stroke-linejoin="round"/><path d="M838.96 610.7 L838.96 627.4" stroke="#20b0b0" stroke-width="1.6" fill="none" stroke-linecap="butt" stroke-linejoin="round"/><rect x="817.2" y="712.1" width="25.6" height="16.7" fill="none" stroke="#20b0b0" stroke-width="1.6"/><path d="M822.32 712.1 L822.32 728.8" stroke="#20b0b0" stroke-width="1.6" fill="none" stroke-linecap="butt" stroke-linejoin="round"/><path d="M838.96 712.1 L838.96 728.8" stroke="#20b0b0" stroke-width="1.6" fill="none" stroke-linecap="butt" stroke-linejoin="round"/><rect x="817.2" y="743.4" width="25.6" height="16.7" fill="none" stroke="#20b0b0" stroke-width="1.6"/><path d="M822.32 743.4 L822.32 760.1" stroke="#20b0b0" stroke-width="1.6" fill="none" stroke-linecap="butt" stroke-linejoin="round"/><path d="M838.96 743.4 L838.96 760.1" stroke="#20b0b0" stroke-width="1.6" fill="none" stroke-linecap="butt" stroke-linejoin="round"/><rect x="1012.8" y="580" width="25.2" height="16" fill="none" stroke="#20b0b0" stroke-width="1.6"/><path d="M1017.84 580 L1017.84 596" stroke="#20b0b0" stroke-width="1.6" fill="none" stroke-linecap="butt" stroke-linejoin="round"/><path d="M1034.22 580 L1034.22 596" stroke="#20b0b0" stroke-width="1.6" fill="none" stroke-linecap="butt" stroke-linejoin="round"/><rect x="1004.8" y="712.7" width="25.9" height="16" fill="none" stroke="#20b0b0" stroke-width="1.6"/><path d="M1009.98 712.7 L1009.98 728.7" stroke="#20b0b0" stroke-width="1.6" fill="none" stroke-linecap="butt" stroke-linejoin="round"/><path d="M1026.82 712.7 L1026.82 728.7" stroke="#20b0b0" stroke-width="1.6" fill="none" stroke-linecap="butt" stroke-linejoin="round"/><rect x="820" y="426" width="16.7" height="26" fill="none" stroke="#20b0b0" stroke-width="1.6"/><path d="M820 432 L836.7 432" stroke="#20b0b0" stroke-width="1.4" fill="none" stroke-linecap="round" stroke-linejoin="round"/><path d="M820 446 L836.7 446" stroke="#20b0b0" stroke-width="1.4" fill="none" stroke-linecap="round" stroke-linejoin="round"/><rect x="896.7" y="479.4" width="26.1" height="16.6" fill="none" stroke="#20b0b0" stroke-width="1.6"/><path d="M902 479.4 L902 496" stroke="#20b0b0" stroke-width="1.4" fill="none" stroke-linecap="round" stroke-linejoin="round"/><path d="M917.8 479.4 L917.8 496" stroke="#20b0b0" stroke-width="1.4" fill="none" stroke-linecap="round" stroke-linejoin="round"/><text x="820" y="475" font-size="20.1613" fill="#20b0b0" font-family="Liberation Mono" textLength="21" lengthAdjust="spacingAndGlyphs" stroke="#20b0b0" stroke-width="0.7">C2</text><text x="863" y="493.7" font-size="20.4839" fill="#20b0b0" font-family="Liberation Mono" textLength="20.5" lengthAdjust="spacingAndGlyphs" stroke="#20b0b0" stroke-width="0.7">C1</text><text x="819.6" y="570.5" font-size="17.5806" fill="#20b0b0" font-family="Liberation Mono" textLength="21.4" lengthAdjust="spacingAndGlyphs" stroke="#20b0b0" stroke-width="0.7">C4</text><text x="820" y="648" font-size="18.2258" fill="#20b0b0" font-family="Liberation Mono" textLength="20.8" lengthAdjust="spacingAndGlyphs" stroke="#20b0b0" stroke-width="0.7">C3</text><text x="820" y="706" font-size="18.0645" fill="#20b0b0" font-family="Liberation Mono" textLength="20.8" lengthAdjust="spacingAndGlyphs" stroke="#20b0b0" stroke-width="0.7">C6</text><text x="820" y="781.2" font-size="18.0645" fill="#20b0b0" font-family="Liberation Mono" textLength="20.8" lengthAdjust="spacingAndGlyphs" stroke="#20b0b0" stroke-width="0.7">C5</text><text x="992" y="511.5" font-size="19.3548" fill="#20b0b0" font-family="Liberation Mono" textLength="20" lengthAdjust="spacingAndGlyphs" stroke="#20b0b0" stroke-width="0.7">R1</text><text x="1030" y="511.5" font-size="19.3548" fill="#20b0b0" font-family="Liberation Mono" textLength="20" lengthAdjust="spacingAndGlyphs" stroke="#20b0b0" stroke-width="0.7">R3</text><text x="984" y="644" font-size="19.5161" fill="#20b0b0" font-family="Liberation Mono" textLength="21" lengthAdjust="spacingAndGlyphs" stroke="#20b0b0" stroke-width="0.7">R2</text><text x="1022.5" y="644" font-size="19.5161" fill="#20b0b0" font-family="Liberation Mono" textLength="21" lengthAdjust="spacingAndGlyphs" stroke="#20b0b0" stroke-width="0.7">R4</text><text x="1049" y="594.8" font-size="19.3548" fill="#20b0b0" font-family="Liberation Mono" textLength="21.7" lengthAdjust="spacingAndGlyphs" stroke="#20b0b0" stroke-width="0.7">C7</text><text x="1020" y="748" font-size="19.5161" fill="#20b0b0" font-family="Liberation Mono" textLength="21.3" lengthAdjust="spacingAndGlyphs" stroke="#20b0b0" stroke-width="0.7">C8</text><text x="800.5" y="374.3" font-size="23.0645" fill="#c42020" font-family="Liberation Mono" textLength="196.5" lengthAdjust="spacingAndGlyphs">AC9GH Tone Decoder</text><text x="0" y="0" font-size="15" fill="#7a3030" font-family="Liberation Sans" textLength="30" lengthAdjust="spacingAndGlyphs" transform="translate(812.5 520.7) rotate(-90)">GND</text><path d="M667.1 353.0h1.3v1.3h-1.3zM667.1 368.6h1.3v1.3h-1.3zM667.1 384.2h1.3v1.3h-1.3zM667.1 399.8h1.3v1.3h-1.3zM667.1 415.4h1.3v1.3h-1.3zM667.1 431.1h1.3v1.3h-1.3zM667.1 446.7h1.3v1.3h-1.3zM667.1 462.3h1.3v1.3h-1.3zM667.1 477.9h1.3v1.3h-1.3zM667.1 493.5h1.3v1.3h-1.3zM667.1 509.2h1.3v1.3h-1.3zM667.1 524.8h1.3v1.3h-1.3zM667.1 540.4h1.3v1.3h-1.3zM667.1 556.0h1.3v1.3h-1.3zM667.1 571.6h1.3v1.3h-1.3zM667.1 587.3h1.3v1.3h-1.3zM667.1 602.9h1.3v1.3h-1.3zM667.1 618.5h1.3v1.3h-1.3zM667.1 634.1h1.3v1.3h-1.3zM667.1 649.7h1.3v1.3h-1.3zM667.1 665.4h1.3v1.3h-1.3zM667.1 681.0h1.3v1.3h-1.3zM667.1 696.6h1.3v1.3h-1.3zM667.1 712.2h1.3v1.3h-1.3zM667.1 727.8h1.3v1.3h-1.3zM667.1 743.5h1.3v1.3h-1.3zM667.1 759.1h1.3v1.3h-1.3zM667.1 774.7h1.3v1.3h-1.3zM667.1 790.3h1.3v1.3h-1.3zM667.1 805.9h1.3v1.3h-1.3zM682.7 353.0h1.3v1.3h-1.3zM682.7 368.6h1.3v1.3h-1.3zM682.7 384.2h1.3v1.3h-1.3zM682.7 399.8h1.3v1.3h-1.3zM682.7 415.4h1.3v1.3h-1.3zM682.7 431.1h1.3v1.3h-1.3zM682.7 446.7h1.3v1.3h-1.3zM682.7 462.3h1.3v1.3h-1.3zM682.7 477.9h1.3v1.3h-1.3zM682.7 493.5h1.3v1.3h-1.3zM682.7 509.2h1.3v1.3h-1.3zM682.7 524.8h1.3v1.3h-1.3zM682.7 540.4h1.3v1.3h-1.3zM682.7 556.0h1.3v1.3h-1.3zM682.7 571.6h1.3v1.3h-1.3zM682.7 587.3h1.3v1.3h-1.3zM682.7 602.9h1.3v1.3h-1.3zM682.7 618.5h1.3v1.3h-1.3zM682.7 634.1h1.3v1.3h-1.3zM682.7 649.7h1.3v1.3h-1.3zM682.7 665.4h1.3v1.3h-1.3zM682.7 681.0h1.3v1.3h-1.3zM682.7 696.6h1.3v1.3h-1.3zM682.7 712.2h1.3v1.3h-1.3zM682.7 727.8h1.3v1.3h-1.3zM682.7 743.5h1.3v1.3h-1.3zM682.7 759.1h1.3v1.3h-1.3zM682.7 774.7h1.3v1.3h-1.3zM682.7 790.3h1.3v1.3h-1.3zM682.7 805.9h1.3v1.3h-1.3zM698.3 353.0h1.3v1.3h-1.3zM698.3 368.6h1.3v1.3h-1.3zM698.3 384.2h1.3v1.3h-1.3zM698.3 399.8h1.3v1.3h-1.3zM698.3 415.4h1.3v1.3h-1.3zM698.3 431.1h1.3v1.3h-1.3zM698.3 446.7h1.3v1.3h-1.3zM698.3 462.3h1.3v1.3h-1.3zM698.3 477.9h1.3v1.3h-1.3zM698.3 493.5h1.3v1.3h-1.3zM698.3 509.2h1.3v1.3h-1.3zM698.3 524.8h1.3v1.3h-1.3zM698.3 540.4h1.3v1.3h-1.3zM698.3 556.0h1.3v1.3h-1.3zM698.3 571.6h1.3v1.3h-1.3zM698.3 587.3h1.3v1.3h-1.3zM698.3 602.9h1.3v1.3h-1.3zM698.3 618.5h1.3v1.3h-1.3zM698.3 634.1h1.3v1.3h-1.3zM698.3 649.7h1.3v1.3h-1.3zM698.3 665.4h1.3v1.3h-1.3zM698.3 681.0h1.3v1.3h-1.3zM698.3 696.6h1.3v1.3h-1.3zM698.3 712.2h1.3v1.3h-1.3zM698.3 727.8h1.3v1.3h-1.3zM698.3 743.5h1.3v1.3h-1.3zM698.3 759.1h1.3v1.3h-1.3zM698.3 774.7h1.3v1.3h-1.3zM698.3 790.3h1.3v1.3h-1.3zM698.3 805.9h1.3v1.3h-1.3zM713.9 353.0h1.3v1.3h-1.3zM713.9 368.6h1.3v1.3h-1.3zM713.9 384.2h1.3v1.3h-1.3zM713.9 399.8h1.3v1.3h-1.3zM713.9 415.4h1.3v1.3h-1.3zM713.9 431.1h1.3v1.3h-1.3zM713.9 446.7h1.3v1.3h-1.3zM713.9 462.3h1.3v1.3h-1.3zM713.9 477.9h1.3v1.3h-1.3zM713.9 493.5h1.3v1.3h-1.3zM713.9 509.2h1.3v1.3h-1.3zM713.9 524.8h1.3v1.3h-1.3zM713.9 540.4h1.3v1.3h-1.3zM713.9 556.0h1.3v1.3h-1.3zM713.9 571.6h1.3v1.3h-1.3zM713.9 587.3h1.3v1.3h-1.3zM713.9 602.9h1.3v1.3h-1.3zM713.9 618.5h1.3v1.3h-1.3zM713.9 634.1h1.3v1.3h-1.3zM713.9 649.7h1.3v1.3h-1.3zM713.9 665.4h1.3v1.3h-1.3zM713.9 681.0h1.3v1.3h-1.3zM713.9 696.6h1.3v1.3h-1.3zM713.9 712.2h1.3v1.3h-1.3zM713.9 727.8h1.3v1.3h-1.3zM713.9 743.5h1.3v1.3h-1.3zM713.9 759.1h1.3v1.3h-1.3zM713.9 774.7h1.3v1.3h-1.3zM713.9 790.3h1.3v1.3h-1.3zM713.9 805.9h1.3v1.3h-1.3zM729.5 353.0h1.3v1.3h-1.3zM729.5 368.6h1.3v1.3h-1.3zM729.5 384.2h1.3v1.3h-1.3zM729.5 399.8h1.3v1.3h-1.3zM729.5 415.4h1.3v1.3h-1.3zM729.5 431.1h1.3v1.3h-1.3zM729.5 446.7h1.3v1.3h-1.3zM729.5 462.3h1.3v1.3h-1.3zM729.5 477.9h1.3v1.3h-1.3zM729.5 493.5h1.3v1.3h-1.3zM729.5 509.2h1.3v1.3h-1.3zM729.5 524.8h1.3v1.3h-1.3zM729.5 540.4h1.3v1.3h-1.3zM729.5 556.0h1.3v1.3h-1.3zM729.5 571.6h1.3v1.3h-1.3zM729.5 587.3h1.3v1.3h-1.3zM729.5 602.9h1.3v1.3h-1.3zM729.5 618.5h1.3v1.3h-1.3zM729.5 634.1h1.3v1.3h-1.3zM729.5 649.7h1.3v1.3h-1.3zM729.5 665.4h1.3v1.3h-1.3zM729.5 681.0h1.3v1.3h-1.3zM729.5 696.6h1.3v1.3h-1.3zM729.5 712.2h1.3v1.3h-1.3zM729.5 727.8h1.3v1.3h-1.3zM729.5 743.5h1.3v1.3h-1.3zM729.5 759.1h1.3v1.3h-1.3zM729.5 774.7h1.3v1.3h-1.3zM729.5 790.3h1.3v1.3h-1.3zM729.5 805.9h1.3v1.3h-1.3zM745.2 353.0h1.3v1.3h-1.3zM745.2 368.6h1.3v1.3h-1.3zM745.2 384.2h1.3v1.3h-1.3zM745.2 399.8h1.3v1.3h-1.3zM745.2 415.4h1.3v1.3h-1.3zM745.2 431.1h1.3v1.3h-1.3zM745.2 446.7h1.3v1.3h-1.3zM745.2 462.3h1.3v1.3h-1.3zM745.2 477.9h1.3v1.3h-1.3zM745.2 493.5h1.3v1.3h-1.3zM745.2 509.2h1.3v1.3h-1.3zM745.2 524.8h1.3v1.3h-1.3zM745.2 540.4h1.3v1.3h-1.3zM745.2 556.0h1.3v1.3h-1.3zM745.2 571.6h1.3v1.3h-1.3zM745.2 587.3h1.3v1.3h-1.3zM745.2 602.9h1.3v1.3h-1.3zM745.2 618.5h1.3v1.3h-1.3zM745.2 634.1h1.3v1.3h-1.3zM745.2 649.7h1.3v1.3h-1.3zM745.2 665.4h1.3v1.3h-1.3zM745.2 681.0h1.3v1.3h-1.3zM745.2 696.6h1.3v1.3h-1.3zM745.2 712.2h1.3v1.3h-1.3zM745.2 727.8h1.3v1.3h-1.3zM745.2 743.5h1.3v1.3h-1.3zM745.2 759.1h1.3v1.3h-1.3zM745.2 774.7h1.3v1.3h-1.3zM745.2 790.3h1.3v1.3h-1.3zM745.2 805.9h1.3v1.3h-1.3zM760.8 353.0h1.3v1.3h-1.3zM760.8 368.6h1.3v1.3h-1.3zM760.8 384.2h1.3v1.3h-1.3zM760.8 399.8h1.3v1.3h-1.3zM760.8 415.4h1.3v1.3h-1.3zM760.8 431.1h1.3v1.3h-1.3zM760.8 446.7h1.3v1.3h-1.3zM760.8 462.3h1.3v1.3h-1.3zM760.8 477.9h1.3v1.3h-1.3zM760.8 493.5h1.3v1.3h-1.3zM760.8 509.2h1.3v1.3h-1.3zM760.8 524.8h1.3v1.3h-1.3zM760.8 540.4h1.3v1.3h-1.3zM760.8 556.0h1.3v1.3h-1.3zM760.8 571.6h1.3v1.3h-1.3zM760.8 587.3h1.3v1.3h-1.3zM760.8 602.9h1.3v1.3h-1.3zM760.8 618.5h1.3v1.3h-1.3zM760.8 634.1h1.3v1.3h-1.3zM760.8 649.7h1.3v1.3h-1.3zM760.8 665.4h1.3v1.3h-1.3zM760.8 681.0h1.3v1.3h-1.3zM760.8 696.6h1.3v1.3h-1.3zM760.8 712.2h1.3v1.3h-1.3zM760.8 727.8h1.3v1.3h-1.3zM760.8 743.5h1.3v1.3h-1.3zM760.8 759.1h1.3v1.3h-1.3zM760.8 774.7h1.3v1.3h-1.3zM760.8 790.3h1.3v1.3h-1.3zM760.8 805.9h1.3v1.3h-1.3zM776.4 353.0h1.3v1.3h-1.3zM776.4 368.6h1.3v1.3h-1.3zM776.4 384.2h1.3v1.3h-1.3zM776.4 399.8h1.3v1.3h-1.3zM776.4 415.4h1.3v1.3h-1.3zM776.4 431.1h1.3v1.3h-1.3zM776.4 446.7h1.3v1.3h-1.3zM776.4 462.3h1.3v1.3h-1.3zM776.4 477.9h1.3v1.3h-1.3zM776.4 493.5h1.3v1.3h-1.3zM776.4 509.2h1.3v1.3h-1.3zM776.4 524.8h1.3v1.3h-1.3zM776.4 540.4h1.3v1.3h-1.3zM776.4 556.0h1.3v1.3h-1.3zM776.4 571.6h1.3v1.3h-1.3zM776.4 587.3h1.3v1.3h-1.3zM776.4 602.9h1.3v1.3h-1.3zM776.4 618.5h1.3v1.3h-1.3zM776.4 634.1h1.3v1.3h-1.3zM776.4 649.7h1.3v1.3h-1.3zM776.4 665.4h1.3v1.3h-1.3zM776.4 681.0h1.3v1.3h-1.3zM776.4 696.6h1.3v1.3h-1.3zM776.4 712.2h1.3v1.3h-1.3zM776.4 727.8h1.3v1.3h-1.3zM776.4 743.5h1.3v1.3h-1.3zM776.4 759.1h1.3v1.3h-1.3zM776.4 774.7h1.3v1.3h-1.3zM776.4 790.3h1.3v1.3h-1.3zM776.4 805.9h1.3v1.3h-1.3zM792.0 353.0h1.3v1.3h-1.3zM792.0 368.6h1.3v1.3h-1.3zM792.0 384.2h1.3v1.3h-1.3zM792.0 399.8h1.3v1.3h-1.3zM792.0 415.4h1.3v1.3h-1.3zM792.0 431.1h1.3v1.3h-1.3zM792.0 446.7h1.3v1.3h-1.3zM792.0 462.3h1.3v1.3h-1.3zM792.0 477.9h1.3v1.3h-1.3zM792.0 493.5h1.3v1.3h-1.3zM792.0 509.2h1.3v1.3h-1.3zM792.0 524.8h1.3v1.3h-1.3zM792.0 540.4h1.3v1.3h-1.3zM792.0 556.0h1.3v1.3h-1.3zM792.0 571.6h1.3v1.3h-1.3zM792.0 587.3h1.3v1.3h-1.3zM792.0 602.9h1.3v1.3h-1.3zM792.0 618.5h1.3v1.3h-1.3zM792.0 634.1h1.3v1.3h-1.3zM792.0 649.7h1.3v1.3h-1.3zM792.0 665.4h1.3v1.3h-1.3zM792.0 681.0h1.3v1.3h-1.3zM792.0 696.6h1.3v1.3h-1.3zM792.0 712.2h1.3v1.3h-1.3zM792.0 727.8h1.3v1.3h-1.3zM792.0 743.5h1.3v1.3h-1.3zM792.0 759.1h1.3v1.3h-1.3zM792.0 774.7h1.3v1.3h-1.3zM792.0 790.3h1.3v1.3h-1.3zM792.0 805.9h1.3v1.3h-1.3zM807.6 353.0h1.3v1.3h-1.3zM807.6 368.6h1.3v1.3h-1.3zM807.6 384.2h1.3v1.3h-1.3zM807.6 399.8h1.3v1.3h-1.3zM807.6 415.4h1.3v1.3h-1.3zM807.6 431.1h1.3v1.3h-1.3zM807.6 446.7h1.3v1.3h-1.3zM807.6 462.3h1.3v1.3h-1.3zM807.6 477.9h1.3v1.3h-1.3zM807.6 493.5h1.3v1.3h-1.3zM807.6 509.2h1.3v1.3h-1.3zM807.6 524.8h1.3v1.3h-1.3zM807.6 540.4h1.3v1.3h-1.3zM807.6 556.0h1.3v1.3h-1.3zM807.6 571.6h1.3v1.3h-1.3zM807.6 587.3h1.3v1.3h-1.3zM807.6 602.9h1.3v1.3h-1.3zM807.6 618.5h1.3v1.3h-1.3zM807.6 634.1h1.3v1.3h-1.3zM807.6 649.7h1.3v1.3h-1.3zM807.6 665.4h1.3v1.3h-1.3zM807.6 681.0h1.3v1.3h-1.3zM807.6 696.6h1.3v1.3h-1.3zM807.6 712.2h1.3v1.3h-1.3zM807.6 727.8h1.3v1.3h-1.3zM807.6 743.5h1.3v1.3h-1.3zM807.6 759.1h1.3v1.3h-1.3zM807.6 774.7h1.3v1.3h-1.3zM807.6 790.3h1.3v1.3h-1.3zM807.6 805.9h1.3v1.3h-1.3zM823.3 353.0h1.3v1.3h-1.3zM823.3 368.6h1.3v1.3h-1.3zM823.3 384.2h1.3v1.3h-1.3zM823.3 399.8h1.3v1.3h-1.3zM823.3 415.4h1.3v1.3h-1.3zM823.3 431.1h1.3v1.3h-1.3zM823.3 446.7h1.3v1.3h-1.3zM823.3 462.3h1.3v1.3h-1.3zM823.3 477.9h1.3v1.3h-1.3zM823.3 493.5h1.3v1.3h-1.3zM823.3 509.2h1.3v1.3h-1.3zM823.3 524.8h1.3v1.3h-1.3zM823.3 540.4h1.3v1.3h-1.3zM823.3 556.0h1.3v1.3h-1.3zM823.3 571.6h1.3v1.3h-1.3zM823.3 587.3h1.3v1.3h-1.3zM823.3 602.9h1.3v1.3h-1.3zM823.3 618.5h1.3v1.3h-1.3zM823.3 634.1h1.3v1.3h-1.3zM823.3 649.7h1.3v1.3h-1.3zM823.3 665.4h1.3v1.3h-1.3zM823.3 681.0h1.3v1.3h-1.3zM823.3 696.6h1.3v1.3h-1.3zM823.3 712.2h1.3v1.3h-1.3zM823.3 727.8h1.3v1.3h-1.3zM823.3 743.5h1.3v1.3h-1.3zM823.3 759.1h1.3v1.3h-1.3zM823.3 774.7h1.3v1.3h-1.3zM823.3 790.3h1.3v1.3h-1.3zM823.3 805.9h1.3v1.3h-1.3zM838.9 353.0h1.3v1.3h-1.3zM838.9 368.6h1.3v1.3h-1.3zM838.9 384.2h1.3v1.3h-1.3zM838.9 399.8h1.3v1.3h-1.3zM838.9 415.4h1.3v1.3h-1.3zM838.9 431.1h1.3v1.3h-1.3zM838.9 446.7h1.3v1.3h-1.3zM838.9 462.3h1.3v1.3h-1.3zM838.9 477.9h1.3v1.3h-1.3zM838.9 493.5h1.3v1.3h-1.3zM838.9 509.2h1.3v1.3h-1.3zM838.9 524.8h1.3v1.3h-1.3zM838.9 540.4h1.3v1.3h-1.3zM838.9 556.0h1.3v1.3h-1.3zM838.9 571.6h1.3v1.3h-1.3zM838.9 587.3h1.3v1.3h-1.3zM838.9 602.9h1.3v1.3h-1.3zM838.9 618.5h1.3v1.3h-1.3zM838.9 634.1h1.3v1.3h-1.3zM838.9 649.7h1.3v1.3h-1.3zM838.9 665.4h1.3v1.3h-1.3zM838.9 681.0h1.3v1.3h-1.3zM838.9 696.6h1.3v1.3h-1.3zM838.9 712.2h1.3v1.3h-1.3zM838.9 727.8h1.3v1.3h-1.3zM838.9 743.5h1.3v1.3h-1.3zM838.9 759.1h1.3v1.3h-1.3zM838.9 774.7h1.3v1.3h-1.3zM838.9 790.3h1.3v1.3h-1.3zM838.9 805.9h1.3v1.3h-1.3zM854.5 353.0h1.3v1.3h-1.3zM854.5 368.6h1.3v1.3h-1.3zM854.5 384.2h1.3v1.3h-1.3zM854.5 399.8h1.3v1.3h-1.3zM854.5 415.4h1.3v1.3h-1.3zM854.5 431.1h1.3v1.3h-1.3zM854.5 446.7h1.3v1.3h-1.3zM854.5 462.3h1.3v1.3h-1.3zM854.5 477.9h1.3v1.3h-1.3zM854.5 493.5h1.3v1.3h-1.3zM854.5 509.2h1.3v1.3h-1.3zM854.5 524.8h1.3v1.3h-1.3zM854.5 540.4h1.3v1.3h-1.3zM854.5 556.0h1.3v1.3h-1.3zM854.5 571.6h1.3v1.3h-1.3zM854.5 587.3h1.3v1.3h-1.3zM854.5 602.9h1.3v1.3h-1.3zM854.5 618.5h1.3v1.3h-1.3zM854.5 634.1h1.3v1.3h-1.3zM854.5 649.7h1.3v1.3h-1.3zM854.5 665.4h1.3v1.3h-1.3zM854.5 681.0h1.3v1.3h-1.3zM854.5 696.6h1.3v1.3h-1.3zM854.5 712.2h1.3v1.3h-1.3zM854.5 727.8h1.3v1.3h-1.3zM854.5 743.5h1.3v1.3h-1.3zM854.5 759.1h1.3v1.3h-1.3zM854.5 774.7h1.3v1.3h-1.3zM854.5 790.3h1.3v1.3h-1.3zM854.5 805.9h1.3v1.3h-1.3zM870.1 353.0h1.3v1.3h-1.3zM870.1 368.6h1.3v1.3h-1.3zM870.1 384.2h1.3v1.3h-1.3zM870.1 399.8h1.3v1.3h-1.3zM870.1 415.4h1.3v1.3h-1.3zM870.1 431.1h1.3v1.3h-1.3zM870.1 446.7h1.3v1.3h-1.3zM870.1 462.3h1.3v1.3h-1.3zM870.1 477.9h1.3v1.3h-1.3zM870.1 493.5h1.3v1.3h-1.3zM870.1 509.2h1.3v1.3h-1.3zM870.1 524.8h1.3v1.3h-1.3zM870.1 540.4h1.3v1.3h-1.3zM870.1 556.0h1.3v1.3h-1.3zM870.1 571.6h1.3v1.3h-1.3zM870.1 587.3h1.3v1.3h-1.3zM870.1 602.9h1.3v1.3h-1.3zM870.1 618.5h1.3v1.3h-1.3zM870.1 634.1h1.3v1.3h-1.3zM870.1 649.7h1.3v1.3h-1.3zM870.1 665.4h1.3v1.3h-1.3zM870.1 681.0h1.3v1.3h-1.3zM870.1 696.6h1.3v1.3h-1.3zM870.1 712.2h1.3v1.3h-1.3zM870.1 727.8h1.3v1.3h-1.3zM870.1 743.5h1.3v1.3h-1.3zM870.1 759.1h1.3v1.3h-1.3zM870.1 774.7h1.3v1.3h-1.3zM870.1 790.3h1.3v1.3h-1.3zM870.1 805.9h1.3v1.3h-1.3zM885.7 353.0h1.3v1.3h-1.3zM885.7 368.6h1.3v1.3h-1.3zM885.7 384.2h1.3v1.3h-1.3zM885.7 399.8h1.3v1.3h-1.3zM885.7 415.4h1.3v1.3h-1.3zM885.7 431.1h1.3v1.3h-1.3zM885.7 446.7h1.3v1.3h-1.3zM885.7 462.3h1.3v1.3h-1.3zM885.7 477.9h1.3v1.3h-1.3zM885.7 493.5h1.3v1.3h-1.3zM885.7 509.2h1.3v1.3h-1.3zM885.7 524.8h1.3v1.3h-1.3zM885.7 540.4h1.3v1.3h-1.3zM885.7 556.0h1.3v1.3h-1.3zM885.7 571.6h1.3v1.3h-1.3zM885.7 587.3h1.3v1.3h-1.3zM885.7 602.9h1.3v1.3h-1.3zM885.7 618.5h1.3v1.3h-1.3zM885.7 634.1h1.3v1.3h-1.3zM885.7 649.7h1.3v1.3h-1.3zM885.7 665.4h1.3v1.3h-1.3zM885.7 681.0h1.3v1.3h-1.3zM885.7 696.6h1.3v1.3h-1.3zM885.7 712.2h1.3v1.3h-1.3zM885.7 727.8h1.3v1.3h-1.3zM885.7 743.5h1.3v1.3h-1.3zM885.7 759.1h1.3v1.3h-1.3zM885.7 774.7h1.3v1.3h-1.3zM885.7 790.3h1.3v1.3h-1.3zM885.7 805.9h1.3v1.3h-1.3zM901.4 353.0h1.3v1.3h-1.3zM901.4 368.6h1.3v1.3h-1.3zM901.4 384.2h1.3v1.3h-1.3zM901.4 399.8h1.3v1.3h-1.3zM901.4 415.4h1.3v1.3h-1.3zM901.4 431.1h1.3v1.3h-1.3zM901.4 446.7h1.3v1.3h-1.3zM901.4 462.3h1.3v1.3h-1.3zM901.4 477.9h1.3v1.3h-1.3zM901.4 493.5h1.3v1.3h-1.3zM901.4 509.2h1.3v1.3h-1.3zM901.4 524.8h1.3v1.3h-1.3zM901.4 540.4h1.3v1.3h-1.3zM901.4 556.0h1.3v1.3h-1.3zM901.4 571.6h1.3v1.3h-1.3zM901.4 587.3h1.3v1.3h-1.3zM901.4 602.9h1.3v1.3h-1.3zM901.4 618.5h1.3v1.3h-1.3zM901.4 634.1h1.3v1.3h-1.3zM901.4 649.7h1.3v1.3h-1.3zM901.4 665.4h1.3v1.3h-1.3zM901.4 681.0h1.3v1.3h-1.3zM901.4 696.6h1.3v1.3h-1.3zM901.4 712.2h1.3v1.3h-1.3zM901.4 727.8h1.3v1.3h-1.3zM901.4 743.5h1.3v1.3h-1.3zM901.4 759.1h1.3v1.3h-1.3zM901.4 774.7h1.3v1.3h-1.3zM901.4 790.3h1.3v1.3h-1.3zM901.4 805.9h1.3v1.3h-1.3zM917.0 353.0h1.3v1.3h-1.3zM917.0 368.6h1.3v1.3h-1.3zM917.0 384.2h1.3v1.3h-1.3zM917.0 399.8h1.3v1.3h-1.3zM917.0 415.4h1.3v1.3h-1.3zM917.0 431.1h1.3v1.3h-1.3zM917.0 446.7h1.3v1.3h-1.3zM917.0 462.3h1.3v1.3h-1.3zM917.0 477.9h1.3v1.3h-1.3zM917.0 493.5h1.3v1.3h-1.3zM917.0 509.2h1.3v1.3h-1.3zM917.0 524.8h1.3v1.3h-1.3zM917.0 540.4h1.3v1.3h-1.3zM917.0 556.0h1.3v1.3h-1.3zM917.0 571.6h1.3v1.3h-1.3zM917.0 587.3h1.3v1.3h-1.3zM917.0 602.9h1.3v1.3h-1.3zM917.0 618.5h1.3v1.3h-1.3zM917.0 634.1h1.3v1.3h-1.3zM917.0 649.7h1.3v1.3h-1.3zM917.0 665.4h1.3v1.3h-1.3zM917.0 681.0h1.3v1.3h-1.3zM917.0 696.6h1.3v1.3h-1.3zM917.0 712.2h1.3v1.3h-1.3zM917.0 727.8h1.3v1.3h-1.3zM917.0 743.5h1.3v1.3h-1.3zM917.0 759.1h1.3v1.3h-1.3zM917.0 774.7h1.3v1.3h-1.3zM917.0 790.3h1.3v1.3h-1.3zM917.0 805.9h1.3v1.3h-1.3zM932.6 353.0h1.3v1.3h-1.3zM932.6 368.6h1.3v1.3h-1.3zM932.6 384.2h1.3v1.3h-1.3zM932.6 399.8h1.3v1.3h-1.3zM932.6 415.4h1.3v1.3h-1.3zM932.6 431.1h1.3v1.3h-1.3zM932.6 446.7h1.3v1.3h-1.3zM932.6 462.3h1.3v1.3h-1.3zM932.6 477.9h1.3v1.3h-1.3zM932.6 493.5h1.3v1.3h-1.3zM932.6 509.2h1.3v1.3h-1.3zM932.6 524.8h1.3v1.3h-1.3zM932.6 540.4h1.3v1.3h-1.3zM932.6 556.0h1.3v1.3h-1.3zM932.6 571.6h1.3v1.3h-1.3zM932.6 587.3h1.3v1.3h-1.3zM932.6 602.9h1.3v1.3h-1.3zM932.6 618.5h1.3v1.3h-1.3zM932.6 634.1h1.3v1.3h-1.3zM932.6 649.7h1.3v1.3h-1.3zM932.6 665.4h1.3v1.3h-1.3zM932.6 681.0h1.3v1.3h-1.3zM932.6 696.6h1.3v1.3h-1.3zM932.6 712.2h1.3v1.3h-1.3zM932.6 727.8h1.3v1.3h-1.3zM932.6 743.5h1.3v1.3h-1.3zM932.6 759.1h1.3v1.3h-1.3zM932.6 774.7h1.3v1.3h-1.3zM932.6 790.3h1.3v1.3h-1.3zM932.6 805.9h1.3v1.3h-1.3zM948.2 353.0h1.3v1.3h-1.3zM948.2 368.6h1.3v1.3h-1.3zM948.2 384.2h1.3v1.3h-1.3zM948.2 399.8h1.3v1.3h-1.3zM948.2 415.4h1.3v1.3h-1.3zM948.2 431.1h1.3v1.3h-1.3zM948.2 446.7h1.3v1.3h-1.3zM948.2 462.3h1.3v1.3h-1.3zM948.2 477.9h1.3v1.3h-1.3zM948.2 493.5h1.3v1.3h-1.3zM948.2 509.2h1.3v1.3h-1.3zM948.2 524.8h1.3v1.3h-1.3zM948.2 540.4h1.3v1.3h-1.3zM948.2 556.0h1.3v1.3h-1.3zM948.2 571.6h1.3v1.3h-1.3zM948.2 587.3h1.3v1.3h-1.3zM948.2 602.9h1.3v1.3h-1.3zM948.2 618.5h1.3v1.3h-1.3zM948.2 634.1h1.3v1.3h-1.3zM948.2 649.7h1.3v1.3h-1.3zM948.2 665.4h1.3v1.3h-1.3zM948.2 681.0h1.3v1.3h-1.3zM948.2 696.6h1.3v1.3h-1.3zM948.2 712.2h1.3v1.3h-1.3zM948.2 727.8h1.3v1.3h-1.3zM948.2 743.5h1.3v1.3h-1.3zM948.2 759.1h1.3v1.3h-1.3zM948.2 774.7h1.3v1.3h-1.3zM948.2 790.3h1.3v1.3h-1.3zM948.2 805.9h1.3v1.3h-1.3zM963.8 353.0h1.3v1.3h-1.3zM963.8 368.6h1.3v1.3h-1.3zM963.8 384.2h1.3v1.3h-1.3zM963.8 399.8h1.3v1.3h-1.3zM963.8 415.4h1.3v1.3h-1.3zM963.8 431.1h1.3v1.3h-1.3zM963.8 446.7h1.3v1.3h-1.3zM963.8 462.3h1.3v1.3h-1.3zM963.8 477.9h1.3v1.3h-1.3zM963.8 493.5h1.3v1.3h-1.3zM963.8 509.2h1.3v1.3h-1.3zM963.8 524.8h1.3v1.3h-1.3zM963.8 540.4h1.3v1.3h-1.3zM963.8 556.0h1.3v1.3h-1.3zM963.8 571.6h1.3v1.3h-1.3zM963.8 587.3h1.3v1.3h-1.3zM963.8 602.9h1.3v1.3h-1.3zM963.8 618.5h1.3v1.3h-1.3zM963.8 634.1h1.3v1.3h-1.3zM963.8 649.7h1.3v1.3h-1.3zM963.8 665.4h1.3v1.3h-1.3zM963.8 681.0h1.3v1.3h-1.3zM963.8 696.6h1.3v1.3h-1.3zM963.8 712.2h1.3v1.3h-1.3zM963.8 727.8h1.3v1.3h-1.3zM963.8 743.5h1.3v1.3h-1.3zM963.8 759.1h1.3v1.3h-1.3zM963.8 774.7h1.3v1.3h-1.3zM963.8 790.3h1.3v1.3h-1.3zM963.8 805.9h1.3v1.3h-1.3zM979.5 353.0h1.3v1.3h-1.3zM979.5 368.6h1.3v1.3h-1.3zM979.5 384.2h1.3v1.3h-1.3zM979.5 399.8h1.3v1.3h-1.3zM979.5 415.4h1.3v1.3h-1.3zM979.5 431.1h1.3v1.3h-1.3zM979.5 446.7h1.3v1.3h-1.3zM979.5 462.3h1.3v1.3h-1.3zM979.5 477.9h1.3v1.3h-1.3zM979.5 493.5h1.3v1.3h-1.3zM979.5 509.2h1.3v1.3h-1.3zM979.5 524.8h1.3v1.3h-1.3zM979.5 540.4h1.3v1.3h-1.3zM979.5 556.0h1.3v1.3h-1.3zM979.5 571.6h1.3v1.3h-1.3zM979.5 587.3h1.3v1.3h-1.3zM979.5 602.9h1.3v1.3h-1.3zM979.5 618.5h1.3v1.3h-1.3zM979.5 634.1h1.3v1.3h-1.3zM979.5 649.7h1.3v1.3h-1.3zM979.5 665.4h1.3v1.3h-1.3zM979.5 681.0h1.3v1.3h-1.3zM979.5 696.6h1.3v1.3h-1.3zM979.5 712.2h1.3v1.3h-1.3zM979.5 727.8h1.3v1.3h-1.3zM979.5 743.5h1.3v1.3h-1.3zM979.5 759.1h1.3v1.3h-1.3zM979.5 774.7h1.3v1.3h-1.3zM979.5 790.3h1.3v1.3h-1.3zM979.5 805.9h1.3v1.3h-1.3zM995.1 353.0h1.3v1.3h-1.3zM995.1 368.6h1.3v1.3h-1.3zM995.1 384.2h1.3v1.3h-1.3zM995.1 399.8h1.3v1.3h-1.3zM995.1 415.4h1.3v1.3h-1.3zM995.1 431.1h1.3v1.3h-1.3zM995.1 446.7h1.3v1.3h-1.3zM995.1 462.3h1.3v1.3h-1.3zM995.1 477.9h1.3v1.3h-1.3zM995.1 493.5h1.3v1.3h-1.3zM995.1 509.2h1.3v1.3h-1.3zM995.1 524.8h1.3v1.3h-1.3zM995.1 540.4h1.3v1.3h-1.3zM995.1 556.0h1.3v1.3h-1.3zM995.1 571.6h1.3v1.3h-1.3zM995.1 587.3h1.3v1.3h-1.3zM995.1 602.9h1.3v1.3h-1.3zM995.1 618.5h1.3v1.3h-1.3zM995.1 634.1h1.3v1.3h-1.3zM995.1 649.7h1.3v1.3h-1.3zM995.1 665.4h1.3v1.3h-1.3zM995.1 681.0h1.3v1.3h-1.3zM995.1 696.6h1.3v1.3h-1.3zM995.1 712.2h1.3v1.3h-1.3zM995.1 727.8h1.3v1.3h-1.3zM995.1 743.5h1.3v1.3h-1.3zM995.1 759.1h1.3v1.3h-1.3zM995.1 774.7h1.3v1.3h-1.3zM995.1 790.3h1.3v1.3h-1.3zM995.1 805.9h1.3v1.3h-1.3zM1010.7 353.0h1.3v1.3h-1.3zM1010.7 368.6h1.3v1.3h-1.3zM1010.7 384.2h1.3v1.3h-1.3zM1010.7 399.8h1.3v1.3h-1.3zM1010.7 415.4h1.3v1.3h-1.3zM1010.7 431.1h1.3v1.3h-1.3zM1010.7 446.7h1.3v1.3h-1.3zM1010.7 462.3h1.3v1.3h-1.3zM1010.7 477.9h1.3v1.3h-1.3zM1010.7 493.5h1.3v1.3h-1.3zM1010.7 509.2h1.3v1.3h-1.3zM1010.7 524.8h1.3v1.3h-1.3zM1010.7 540.4h1.3v1.3h-1.3zM1010.7 556.0h1.3v1.3h-1.3zM1010.7 571.6h1.3v1.3h-1.3zM1010.7 587.3h1.3v1.3h-1.3zM1010.7 602.9h1.3v1.3h-1.3zM1010.7 618.5h1.3v1.3h-1.3zM1010.7 634.1h1.3v1.3h-1.3zM1010.7 649.7h1.3v1.3h-1.3zM1010.7 665.4h1.3v1.3h-1.3zM1010.7 681.0h1.3v1.3h-1.3zM1010.7 696.6h1.3v1.3h-1.3zM1010.7 712.2h1.3v1.3h-1.3zM1010.7 727.8h1.3v1.3h-1.3zM1010.7 743.5h1.3v1.3h-1.3zM1010.7 759.1h1.3v1.3h-1.3zM1010.7 774.7h1.3v1.3h-1.3zM1010.7 790.3h1.3v1.3h-1.3zM1010.7 805.9h1.3v1.3h-1.3zM1026.3 353.0h1.3v1.3h-1.3zM1026.3 368.6h1.3v1.3h-1.3zM1026.3 384.2h1.3v1.3h-1.3zM1026.3 399.8h1.3v1.3h-1.3zM1026.3 415.4h1.3v1.3h-1.3zM1026.3 431.1h1.3v1.3h-1.3zM1026.3 446.7h1.3v1.3h-1.3zM1026.3 462.3h1.3v1.3h-1.3zM1026.3 477.9h1.3v1.3h-1.3zM1026.3 493.5h1.3v1.3h-1.3zM1026.3 509.2h1.3v1.3h-1.3zM1026.3 524.8h1.3v1.3h-1.3zM1026.3 540.4h1.3v1.3h-1.3zM1026.3 556.0h1.3v1.3h-1.3zM1026.3 571.6h1.3v1.3h-1.3zM1026.3 587.3h1.3v1.3h-1.3zM1026.3 602.9h1.3v1.3h-1.3zM1026.3 618.5h1.3v1.3h-1.3zM1026.3 634.1h1.3v1.3h-1.3zM1026.3 649.7h1.3v1.3h-1.3zM1026.3 665.4h1.3v1.3h-1.3zM1026.3 681.0h1.3v1.3h-1.3zM1026.3 696.6h1.3v1.3h-1.3zM1026.3 712.2h1.3v1.3h-1.3zM1026.3 727.8h1.3v1.3h-1.3zM1026.3 743.5h1.3v1.3h-1.3zM1026.3 759.1h1.3v1.3h-1.3zM1026.3 774.7h1.3v1.3h-1.3zM1026.3 790.3h1.3v1.3h-1.3zM1026.3 805.9h1.3v1.3h-1.3zM1041.9 353.0h1.3v1.3h-1.3zM1041.9 368.6h1.3v1.3h-1.3zM1041.9 384.2h1.3v1.3h-1.3zM1041.9 399.8h1.3v1.3h-1.3zM1041.9 415.4h1.3v1.3h-1.3zM1041.9 431.1h1.3v1.3h-1.3zM1041.9 446.7h1.3v1.3h-1.3zM1041.9 462.3h1.3v1.3h-1.3zM1041.9 477.9h1.3v1.3h-1.3zM1041.9 493.5h1.3v1.3h-1.3zM1041.9 509.2h1.3v1.3h-1.3zM1041.9 524.8h1.3v1.3h-1.3zM1041.9 540.4h1.3v1.3h-1.3zM1041.9 556.0h1.3v1.3h-1.3zM1041.9 571.6h1.3v1.3h-1.3zM1041.9 587.3h1.3v1.3h-1.3zM1041.9 602.9h1.3v1.3h-1.3zM1041.9 618.5h1.3v1.3h-1.3zM1041.9 634.1h1.3v1.3h-1.3zM1041.9 649.7h1.3v1.3h-1.3zM1041.9 665.4h1.3v1.3h-1.3zM1041.9 681.0h1.3v1.3h-1.3zM1041.9 696.6h1.3v1.3h-1.3zM1041.9 712.2h1.3v1.3h-1.3zM1041.9 727.8h1.3v1.3h-1.3zM1041.9 743.5h1.3v1.3h-1.3zM1041.9 759.1h1.3v1.3h-1.3zM1041.9 774.7h1.3v1.3h-1.3zM1041.9 790.3h1.3v1.3h-1.3zM1041.9 805.9h1.3v1.3h-1.3zM1057.5 353.0h1.3v1.3h-1.3zM1057.5 368.6h1.3v1.3h-1.3zM1057.5 384.2h1.3v1.3h-1.3zM1057.5 399.8h1.3v1.3h-1.3zM1057.5 415.4h1.3v1.3h-1.3zM1057.5 431.1h1.3v1.3h-1.3zM1057.5 446.7h1.3v1.3h-1.3zM1057.5 462.3h1.3v1.3h-1.3zM1057.5 477.9h1.3v1.3h-1.3zM1057.5 493.5h1.3v1.3h-1.3zM1057.5 509.2h1.3v1.3h-1.3zM1057.5 524.8h1.3v1.3h-1.3zM1057.5 540.4h1.3v1.3h-1.3zM1057.5 556.0h1.3v1.3h-1.3zM1057.5 571.6h1.3v1.3h-1.3zM1057.5 587.3h1.3v1.3h-1.3zM1057.5 602.9h1.3v1.3h-1.3zM1057.5 618.5h1.3v1.3h-1.3zM1057.5 634.1h1.3v1.3h-1.3zM1057.5 649.7h1.3v1.3h-1.3zM1057.5 665.4h1.3v1.3h-1.3zM1057.5 681.0h1.3v1.3h-1.3zM1057.5 696.6h1.3v1.3h-1.3zM1057.5 712.2h1.3v1.3h-1.3zM1057.5 727.8h1.3v1.3h-1.3zM1057.5 743.5h1.3v1.3h-1.3zM1057.5 759.1h1.3v1.3h-1.3zM1057.5 774.7h1.3v1.3h-1.3zM1057.5 790.3h1.3v1.3h-1.3zM1057.5 805.9h1.3v1.3h-1.3zM1073.2 353.0h1.3v1.3h-1.3zM1073.2 368.6h1.3v1.3h-1.3zM1073.2 384.2h1.3v1.3h-1.3zM1073.2 399.8h1.3v1.3h-1.3zM1073.2 415.4h1.3v1.3h-1.3zM1073.2 431.1h1.3v1.3h-1.3zM1073.2 446.7h1.3v1.3h-1.3zM1073.2 462.3h1.3v1.3h-1.3zM1073.2 477.9h1.3v1.3h-1.3zM1073.2 493.5h1.3v1.3h-1.3zM1073.2 509.2h1.3v1.3h-1.3zM1073.2 524.8h1.3v1.3h-1.3zM1073.2 540.4h1.3v1.3h-1.3zM1073.2 556.0h1.3v1.3h-1.3zM1073.2 571.6h1.3v1.3h-1.3zM1073.2 587.3h1.3v1.3h-1.3zM1073.2 602.9h1.3v1.3h-1.3zM1073.2 618.5h1.3v1.3h-1.3zM1073.2 634.1h1.3v1.3h-1.3zM1073.2 649.7h1.3v1.3h-1.3zM1073.2 665.4h1.3v1.3h-1.3zM1073.2 681.0h1.3v1.3h-1.3zM1073.2 696.6h1.3v1.3h-1.3zM1073.2 712.2h1.3v1.3h-1.3zM1073.2 727.8h1.3v1.3h-1.3zM1073.2 743.5h1.3v1.3h-1.3zM1073.2 759.1h1.3v1.3h-1.3zM1073.2 774.7h1.3v1.3h-1.3zM1073.2 790.3h1.3v1.3h-1.3zM1073.2 805.9h1.3v1.3h-1.3zM1088.8 353.0h1.3v1.3h-1.3zM1088.8 368.6h1.3v1.3h-1.3zM1088.8 384.2h1.3v1.3h-1.3zM1088.8 399.8h1.3v1.3h-1.3zM1088.8 415.4h1.3v1.3h-1.3zM1088.8 431.1h1.3v1.3h-1.3zM1088.8 446.7h1.3v1.3h-1.3zM1088.8 462.3h1.3v1.3h-1.3zM1088.8 477.9h1.3v1.3h-1.3zM1088.8 493.5h1.3v1.3h-1.3zM1088.8 509.2h1.3v1.3h-1.3zM1088.8 524.8h1.3v1.3h-1.3zM1088.8 540.4h1.3v1.3h-1.3zM1088.8 556.0h1.3v1.3h-1.3zM1088.8 571.6h1.3v1.3h-1.3zM1088.8 587.3h1.3v1.3h-1.3zM1088.8 602.9h1.3v1.3h-1.3zM1088.8 618.5h1.3v1.3h-1.3zM1088.8 634.1h1.3v1.3h-1.3zM1088.8 649.7h1.3v1.3h-1.3zM1088.8 665.4h1.3v1.3h-1.3zM1088.8 681.0h1.3v1.3h-1.3zM1088.8 696.6h1.3v1.3h-1.3zM1088.8 712.2h1.3v1.3h-1.3zM1088.8 727.8h1.3v1.3h-1.3zM1088.8 743.5h1.3v1.3h-1.3zM1088.8 759.1h1.3v1.3h-1.3zM1088.8 774.7h1.3v1.3h-1.3zM1088.8 790.3h1.3v1.3h-1.3zM1088.8 805.9h1.3v1.3h-1.3zM1104.4 353.0h1.3v1.3h-1.3zM1104.4 368.6h1.3v1.3h-1.3zM1104.4 384.2h1.3v1.3h-1.3zM1104.4 399.8h1.3v1.3h-1.3zM1104.4 415.4h1.3v1.3h-1.3zM1104.4 431.1h1.3v1.3h-1.3zM1104.4 446.7h1.3v1.3h-1.3zM1104.4 462.3h1.3v1.3h-1.3zM1104.4 477.9h1.3v1.3h-1.3zM1104.4 493.5h1.3v1.3h-1.3zM1104.4 509.2h1.3v1.3h-1.3zM1104.4 524.8h1.3v1.3h-1.3zM1104.4 540.4h1.3v1.3h-1.3zM1104.4 556.0h1.3v1.3h-1.3zM1104.4 571.6h1.3v1.3h-1.3zM1104.4 587.3h1.3v1.3h-1.3zM1104.4 602.9h1.3v1.3h-1.3zM1104.4 618.5h1.3v1.3h-1.3zM1104.4 634.1h1.3v1.3h-1.3zM1104.4 649.7h1.3v1.3h-1.3zM1104.4 665.4h1.3v1.3h-1.3zM1104.4 681.0h1.3v1.3h-1.3zM1104.4 696.6h1.3v1.3h-1.3zM1104.4 712.2h1.3v1.3h-1.3zM1104.4 727.8h1.3v1.3h-1.3zM1104.4 743.5h1.3v1.3h-1.3zM1104.4 759.1h1.3v1.3h-1.3zM1104.4 774.7h1.3v1.3h-1.3zM1104.4 790.3h1.3v1.3h-1.3zM1104.4 805.9h1.3v1.3h-1.3zM1120.0 353.0h1.3v1.3h-1.3zM1120.0 368.6h1.3v1.3h-1.3zM1120.0 384.2h1.3v1.3h-1.3zM1120.0 399.8h1.3v1.3h-1.3zM1120.0 415.4h1.3v1.3h-1.3zM1120.0 431.1h1.3v1.3h-1.3zM1120.0 446.7h1.3v1.3h-1.3zM1120.0 462.3h1.3v1.3h-1.3zM1120.0 477.9h1.3v1.3h-1.3zM1120.0 493.5h1.3v1.3h-1.3zM1120.0 509.2h1.3v1.3h-1.3zM1120.0 524.8h1.3v1.3h-1.3zM1120.0 540.4h1.3v1.3h-1.3zM1120.0 556.0h1.3v1.3h-1.3zM1120.0 571.6h1.3v1.3h-1.3zM1120.0 587.3h1.3v1.3h-1.3zM1120.0 602.9h1.3v1.3h-1.3zM1120.0 618.5h1.3v1.3h-1.3zM1120.0 634.1h1.3v1.3h-1.3zM1120.0 649.7h1.3v1.3h-1.3zM1120.0 665.4h1.3v1.3h-1.3zM1120.0 681.0h1.3v1.3h-1.3zM1120.0 696.6h1.3v1.3h-1.3zM1120.0 712.2h1.3v1.3h-1.3zM1120.0 727.8h1.3v1.3h-1.3zM1120.0 743.5h1.3v1.3h-1.3zM1120.0 759.1h1.3v1.3h-1.3zM1120.0 774.7h1.3v1.3h-1.3zM1120.0 790.3h1.3v1.3h-1.3zM1120.0 805.9h1.3v1.3h-1.3zM1135.6 353.0h1.3v1.3h-1.3zM1135.6 368.6h1.3v1.3h-1.3zM1135.6 384.2h1.3v1.3h-1.3zM1135.6 399.8h1.3v1.3h-1.3zM1135.6 415.4h1.3v1.3h-1.3zM1135.6 431.1h1.3v1.3h-1.3zM1135.6 446.7h1.3v1.3h-1.3zM1135.6 462.3h1.3v1.3h-1.3zM1135.6 477.9h1.3v1.3h-1.3zM1135.6 493.5h1.3v1.3h-1.3zM1135.6 509.2h1.3v1.3h-1.3zM1135.6 524.8h1.3v1.3h-1.3zM1135.6 540.4h1.3v1.3h-1.3zM1135.6 556.0h1.3v1.3h-1.3zM1135.6 571.6h1.3v1.3h-1.3zM1135.6 587.3h1.3v1.3h-1.3zM1135.6 602.9h1.3v1.3h-1.3zM1135.6 618.5h1.3v1.3h-1.3zM1135.6 634.1h1.3v1.3h-1.3zM1135.6 649.7h1.3v1.3h-1.3zM1135.6 665.4h1.3v1.3h-1.3zM1135.6 681.0h1.3v1.3h-1.3zM1135.6 696.6h1.3v1.3h-1.3zM1135.6 712.2h1.3v1.3h-1.3zM1135.6 727.8h1.3v1.3h-1.3zM1135.6 743.5h1.3v1.3h-1.3zM1135.6 759.1h1.3v1.3h-1.3zM1135.6 774.7h1.3v1.3h-1.3zM1135.6 790.3h1.3v1.3h-1.3zM1135.6 805.9h1.3v1.3h-1.3zM1151.3 353.0h1.3v1.3h-1.3zM1151.3 368.6h1.3v1.3h-1.3zM1151.3 384.2h1.3v1.3h-1.3zM1151.3 399.8h1.3v1.3h-1.3zM1151.3 415.4h1.3v1.3h-1.3zM1151.3 431.1h1.3v1.3h-1.3zM1151.3 446.7h1.3v1.3h-1.3zM1151.3 462.3h1.3v1.3h-1.3zM1151.3 477.9h1.3v1.3h-1.3zM1151.3 493.5h1.3v1.3h-1.3zM1151.3 509.2h1.3v1.3h-1.3zM1151.3 524.8h1.3v1.3h-1.3zM1151.3 540.4h1.3v1.3h-1.3zM1151.3 556.0h1.3v1.3h-1.3zM1151.3 571.6h1.3v1.3h-1.3zM1151.3 587.3h1.3v1.3h-1.3zM1151.3 602.9h1.3v1.3h-1.3zM1151.3 618.5h1.3v1.3h-1.3zM1151.3 634.1h1.3v1.3h-1.3zM1151.3 649.7h1.3v1.3h-1.3zM1151.3 665.4h1.3v1.3h-1.3zM1151.3 681.0h1.3v1.3h-1.3zM1151.3 696.6h1.3v1.3h-1.3zM1151.3 712.2h1.3v1.3h-1.3zM1151.3 727.8h1.3v1.3h-1.3zM1151.3 743.5h1.3v1.3h-1.3zM1151.3 759.1h1.3v1.3h-1.3zM1151.3 774.7h1.3v1.3h-1.3zM1151.3 790.3h1.3v1.3h-1.3zM1151.3 805.9h1.3v1.3h-1.3zM1166.9 353.0h1.3v1.3h-1.3zM1166.9 368.6h1.3v1.3h-1.3zM1166.9 384.2h1.3v1.3h-1.3zM1166.9 399.8h1.3v1.3h-1.3zM1166.9 415.4h1.3v1.3h-1.3zM1166.9 431.1h1.3v1.3h-1.3zM1166.9 446.7h1.3v1.3h-1.3zM1166.9 462.3h1.3v1.3h-1.3zM1166.9 477.9h1.3v1.3h-1.3zM1166.9 493.5h1.3v1.3h-1.3zM1166.9 509.2h1.3v1.3h-1.3zM1166.9 524.8h1.3v1.3h-1.3zM1166.9 540.4h1.3v1.3h-1.3zM1166.9 556.0h1.3v1.3h-1.3zM1166.9 571.6h1.3v1.3h-1.3zM1166.9 587.3h1.3v1.3h-1.3zM1166.9 602.9h1.3v1.3h-1.3zM1166.9 618.5h1.3v1.3h-1.3zM1166.9 634.1h1.3v1.3h-1.3zM1166.9 649.7h1.3v1.3h-1.3zM1166.9 665.4h1.3v1.3h-1.3zM1166.9 681.0h1.3v1.3h-1.3zM1166.9 696.6h1.3v1.3h-1.3zM1166.9 712.2h1.3v1.3h-1.3zM1166.9 727.8h1.3v1.3h-1.3zM1166.9 743.5h1.3v1.3h-1.3zM1166.9 759.1h1.3v1.3h-1.3zM1166.9 774.7h1.3v1.3h-1.3zM1166.9 790.3h1.3v1.3h-1.3zM1166.9 805.9h1.3v1.3h-1.3zM1182.5 353.0h1.3v1.3h-1.3zM1182.5 368.6h1.3v1.3h-1.3zM1182.5 384.2h1.3v1.3h-1.3zM1182.5 399.8h1.3v1.3h-1.3zM1182.5 415.4h1.3v1.3h-1.3zM1182.5 431.1h1.3v1.3h-1.3zM1182.5 446.7h1.3v1.3h-1.3zM1182.5 462.3h1.3v1.3h-1.3zM1182.5 477.9h1.3v1.3h-1.3zM1182.5 493.5h1.3v1.3h-1.3zM1182.5 509.2h1.3v1.3h-1.3zM1182.5 524.8h1.3v1.3h-1.3zM1182.5 540.4h1.3v1.3h-1.3zM1182.5 556.0h1.3v1.3h-1.3zM1182.5 571.6h1.3v1.3h-1.3zM1182.5 587.3h1.3v1.3h-1.3zM1182.5 602.9h1.3v1.3h-1.3zM1182.5 618.5h1.3v1.3h-1.3zM1182.5 634.1h1.3v1.3h-1.3zM1182.5 649.7h1.3v1.3h-1.3zM1182.5 665.4h1.3v1.3h-1.3zM1182.5 681.0h1.3v1.3h-1.3zM1182.5 696.6h1.3v1.3h-1.3zM1182.5 712.2h1.3v1.3h-1.3zM1182.5 727.8h1.3v1.3h-1.3zM1182.5 743.5h1.3v1.3h-1.3zM1182.5 759.1h1.3v1.3h-1.3zM1182.5 774.7h1.3v1.3h-1.3zM1182.5 790.3h1.3v1.3h-1.3zM1182.5 805.9h1.3v1.3h-1.3zM1198.1 353.0h1.3v1.3h-1.3zM1198.1 368.6h1.3v1.3h-1.3zM1198.1 384.2h1.3v1.3h-1.3zM1198.1 399.8h1.3v1.3h-1.3zM1198.1 415.4h1.3v1.3h-1.3zM1198.1 431.1h1.3v1.3h-1.3zM1198.1 446.7h1.3v1.3h-1.3zM1198.1 462.3h1.3v1.3h-1.3zM1198.1 477.9h1.3v1.3h-1.3zM1198.1 493.5h1.3v1.3h-1.3zM1198.1 509.2h1.3v1.3h-1.3zM1198.1 524.8h1.3v1.3h-1.3zM1198.1 540.4h1.3v1.3h-1.3zM1198.1 556.0h1.3v1.3h-1.3zM1198.1 571.6h1.3v1.3h-1.3zM1198.1 587.3h1.3v1.3h-1.3zM1198.1 602.9h1.3v1.3h-1.3zM1198.1 618.5h1.3v1.3h-1.3zM1198.1 634.1h1.3v1.3h-1.3zM1198.1 649.7h1.3v1.3h-1.3zM1198.1 665.4h1.3v1.3h-1.3zM1198.1 681.0h1.3v1.3h-1.3zM1198.1 696.6h1.3v1.3h-1.3zM1198.1 712.2h1.3v1.3h-1.3zM1198.1 727.8h1.3v1.3h-1.3zM1198.1 743.5h1.3v1.3h-1.3zM1198.1 759.1h1.3v1.3h-1.3zM1198.1 774.7h1.3v1.3h-1.3zM1198.1 790.3h1.3v1.3h-1.3zM1198.1 805.9h1.3v1.3h-1.3zM1213.7 353.0h1.3v1.3h-1.3zM1213.7 368.6h1.3v1.3h-1.3zM1213.7 384.2h1.3v1.3h-1.3zM1213.7 399.8h1.3v1.3h-1.3zM1213.7 415.4h1.3v1.3h-1.3zM1213.7 431.1h1.3v1.3h-1.3zM1213.7 446.7h1.3v1.3h-1.3zM1213.7 462.3h1.3v1.3h-1.3zM1213.7 477.9h1.3v1.3h-1.3zM1213.7 493.5h1.3v1.3h-1.3zM1213.7 509.2h1.3v1.3h-1.3zM1213.7 524.8h1.3v1.3h-1.3zM1213.7 540.4h1.3v1.3h-1.3zM1213.7 556.0h1.3v1.3h-1.3zM1213.7 571.6h1.3v1.3h-1.3zM1213.7 587.3h1.3v1.3h-1.3zM1213.7 602.9h1.3v1.3h-1.3zM1213.7 618.5h1.3v1.3h-1.3zM1213.7 634.1h1.3v1.3h-1.3zM1213.7 649.7h1.3v1.3h-1.3zM1213.7 665.4h1.3v1.3h-1.3zM1213.7 681.0h1.3v1.3h-1.3zM1213.7 696.6h1.3v1.3h-1.3zM1213.7 712.2h1.3v1.3h-1.3zM1213.7 727.8h1.3v1.3h-1.3zM1213.7 743.5h1.3v1.3h-1.3zM1213.7 759.1h1.3v1.3h-1.3zM1213.7 774.7h1.3v1.3h-1.3zM1213.7 790.3h1.3v1.3h-1.3zM1213.7 805.9h1.3v1.3h-1.3z" fill="#e8e8e8"/><path d="M873.5 439.5 L880.5 439.5" stroke="#2020c0" stroke-width="1.2" fill="none" stroke-linecap="butt" stroke-linejoin="round"/><path d="M877 436 L877 443" stroke="#2020c0" stroke-width="1.2" fill="none" stroke-linecap="butt" stroke-linejoin="round"/><path d="M858.5 447 L865.5 447" stroke="#2020c0" stroke-width="1.2" fill="none" stroke-linecap="butt" stroke-linejoin="round"/><path d="M862 443.5 L862 450.5" stroke="#2020c0" stroke-width="1.2" fill="none" stroke-linecap="butt" stroke-linejoin="round"/><path d="M982.5 439 L989.5 439" stroke="#2020c0" stroke-width="1.2" fill="none" stroke-linecap="butt" stroke-linejoin="round"/><path d="M986 435.5 L986 442.5" stroke="#2020c0" stroke-width="1.2" fill="none" stroke-linecap="butt" stroke-linejoin="round"/><path d="M1076.9 424 L1083.9 424" stroke="#2020c0" stroke-width="1.2" fill="none" stroke-linecap="butt" stroke-linejoin="round"/><path d="M1080.4 420.5 L1080.4 427.5" stroke="#2020c0" stroke-width="1.2" fill="none" stroke-linecap="butt" stroke-linejoin="round"/><path d="M913 571 L920 571" stroke="#2020c0" stroke-width="1.2" fill="none" stroke-linecap="butt" stroke-linejoin="round"/><path d="M916.5 567.5 L916.5 574.5" stroke="#2020c0" stroke-width="1.2" fill="none" stroke-linecap="butt" stroke-linejoin="round"/><path d="M913 704 L920 704" stroke="#2020c0" stroke-width="1.2" fill="none" stroke-linecap="butt" stroke-linejoin="round"/><path d="M916.5 700.5 L916.5 707.5" stroke="#2020c0" stroke-width="1.2" fill="none" stroke-linecap="butt" stroke-linejoin="round"/><path d="M998.2 541 L1005.2 541" stroke="#2020c0" stroke-width="1.2" fill="none" stroke-linecap="butt" stroke-linejoin="round"/><path d="M1001.7 537.5 L1001.7 544.5" stroke="#2020c0" stroke-width="1.2" fill="none" stroke-linecap="butt" stroke-linejoin="round"/><path d="M1037.5 541 L1044.5 541" stroke="#2020c0" stroke-width="1.2" fill="none" stroke-linecap="butt" stroke-linejoin="round"/><path d="M1041 537.5 L1041 544.5" stroke="#2020c0" stroke-width="1.2" fill="none" stroke-linecap="butt" stroke-linejoin="round"/><path d="M990.9 674 L997.9 674" stroke="#2020c0" stroke-width="1.2" fill="none" stroke-linecap="butt" stroke-linejoin="round"/><path d="M994.4 670.5 L994.4 677.5" stroke="#2020c0" stroke-width="1.2" fill="none" stroke-linecap="butt" stroke-linejoin="round"/><path d="M1029.5 674 L1036.5 674" stroke="#2020c0" stroke-width="1.2" fill="none" stroke-linecap="butt" stroke-linejoin="round"/><path d="M1033 670.5 L1033 677.5" stroke="#2020c0" stroke-width="1.2" fill="none" stroke-linecap="butt" stroke-linejoin="round"/><path d="M826.5 588 L833.5 588" stroke="#2020c0" stroke-width="1.2" fill="none" stroke-linecap="butt" stroke-linejoin="round"/><path d="M830 584.5 L830 591.5" stroke="#2020c0" stroke-width="1.2" fill="none" stroke-linecap="butt" stroke-linejoin="round"/><path d="M826.5 619.3 L833.5 619.3" stroke="#2020c0" stroke-width="1.2" fill="none" stroke-linecap="butt" stroke-linejoin="round"/><path d="M830 615.8 L830 622.8" stroke="#2020c0" stroke-width="1.2" fill="none" stroke-linecap="butt" stroke-linejoin="round"/><path d="M826.5 720.7 L833.5 720.7" stroke="#2020c0" stroke-width="1.2" fill="none" stroke-linecap="butt" stroke-linejoin="round"/><path d="M830 717.2 L830 724.2" stroke="#2020c0" stroke-width="1.2" fill="none" stroke-linecap="butt" stroke-linejoin="round"/><path d="M826.5 752 L833.5 752" stroke="#2020c0" stroke-width="1.2" fill="none" stroke-linecap="butt" stroke-linejoin="round"/><path d="M830 748.5 L830 755.5" stroke="#2020c0" stroke-width="1.2" fill="none" stroke-linecap="butt" stroke-linejoin="round"/><path d="M1021.5 588 L1028.5 588" stroke="#2020c0" stroke-width="1.2" fill="none" stroke-linecap="butt" stroke-linejoin="round"/><path d="M1025 584.5 L1025 591.5" stroke="#2020c0" stroke-width="1.2" fill="none" stroke-linecap="butt" stroke-linejoin="round"/><path d="M1014.5 720.7 L1021.5 720.7" stroke="#2020c0" stroke-width="1.2" fill="none" stroke-linecap="butt" stroke-linejoin="round"/><path d="M1018 717.2 L1018 724.2" stroke="#2020c0" stroke-width="1.2" fill="none" stroke-linecap="butt" stroke-linejoin="round"/><path d="M824.5 439 L831.5 439" stroke="#2020c0" stroke-width="1.2" fill="none" stroke-linecap="butt" stroke-linejoin="round"/><path d="M828 435.5 L828 442.5" stroke="#2020c0" stroke-width="1.2" fill="none" stroke-linecap="butt" stroke-linejoin="round"/><path d="M905.5 488 L912.5 488" stroke="#2020c0" stroke-width="1.2" fill="none" stroke-linecap="butt" stroke-linejoin="round"/><path d="M909 484.5 L909 491.5" stroke="#2020c0" stroke-width="1.2" fill="none" stroke-linecap="butt" stroke-linejoin="round"/><path d="M911.5 367 L918.5 367" stroke="#2020c0" stroke-width="1.2" fill="none" stroke-linecap="butt" stroke-linejoin="round"/><path d="M915 363.5 L915 370.5" stroke="#2020c0" stroke-width="1.2" fill="none" stroke-linecap="butt" stroke-linejoin="round"/><path d="M811.5 401 L818.5 401" stroke="#2020c0" stroke-width="1.2" fill="none" stroke-linecap="butt" stroke-linejoin="round"/><path d="M815 397.5 L815 404.5" stroke="#2020c0" stroke-width="1.2" fill="none" stroke-linecap="butt" stroke-linejoin="round"/><path d="M910.5 399 L917.5 399" stroke="#2020c0" stroke-width="1.2" fill="none" stroke-linecap="butt" stroke-linejoin="round"/><path d="M914 395.5 L914 402.5" stroke="#2020c0" stroke-width="1.2" fill="none" stroke-linecap="butt" stroke-linejoin="round"/><path d="M1076.9 770 L1083.9 770" stroke="#2020c0" stroke-width="1.2" fill="none" stroke-linecap="butt" stroke-linejoin="round"/><path d="M1080.4 766.5 L1080.4 773.5" stroke="#2020c0" stroke-width="1.2" fill="none" stroke-linecap="butt" stroke-linejoin="round"/><path d="M1076.9 466 L1083.9 466" stroke="#2020c0" stroke-width="1.2" fill="none" stroke-linecap="butt" stroke-linejoin="round"/><path d="M1080.4 462.5 L1080.4 469.5" stroke="#2020c0" stroke-width="1.2" fill="none" stroke-linecap="butt" stroke-linejoin="round"/></g></svg><div class="a" style="left:0.00px;top:0.00px;width:1440.00px;height:22.00px;background:linear-gradient(#f6f6f6,#dadada);border-bottom:1px solid #6f6f6f"></div><svg class="a" style="left:18.00px;top:1.00px;" width="20.00" height="19.00" viewBox="0 0 20.00 19.00"><path d="M13.2 10.1c0-2 1.6-2.9 1.7-3-0.9-1.4-2.4-1.5-2.9-1.6-1.2-.1-2.4.7-3 .7-.6 0-1.6-.7-2.600-.7-1.3 0-2.6.8-3.300 2-1.400 2.400-.4 6 1 8 .7 1 1.500 2.100 2.500 2 1-.0 1.400-.6 2.600-.6s1.500.6 2.600.6c1.100 0 1.800-1 2.400-2 .8-1.100 1.100-2.200 1.100-2.300 0 0-2.100-.8-2.100-3.100zM11.300 4.100c.5-.7.9-1.600.8-2.600-.8 0-1.800.5-2.400 1.200-.5.600-1 1.600-.8 2.500.9.100 1.800-.4 2.400-1.100z" fill="#222" transform="translate(0,0.5)"/></svg><span id="t69" class="t" style="left:54.40px;top:3.83px;font-size:14.50px;color:#000;font-weight:bold;letter-spacing:0.041px;">KiCad</span><span id="t70" class="t" style="left:115.00px;top:3.83px;font-size:14.50px;color:#000;letter-spacing:-0.167px;">File</span><span id="t71" class="t" style="left:156.30px;top:3.83px;font-size:14.50px;color:#000;letter-spacing:0.481px;">Edit</span><span id="t72" class="t" style="left:201.00px;top:3.83px;font-size:14.50px;color:#000;letter-spacing:0.002px;">View</span><span id="t73" class="t" style="left:250.70px;top:3.83px;font-size:14.50px;color:#000;letter-spacing:-0.477px;">Place</span><span id="t74" class="t" style="left:303.00px;top:3.83px;font-size:14.50px;color:#000;letter-spacing:0.077px;">Preferences</span><span id="t75" class="t" style="left:399.00px;top:3.83px;font-size:14.50px;color:#000;letter-spacing:0.333px;">Dimensions</span><span id="t76" class="t" style="left:497.00px;top:3.83px;font-size:14.50px;color:#000;letter-spacing:0.350px;">Tools</span><span id="t77" class="t" style="left:550.40px;top:3.83px;font-size:14.50px;color:#000;letter-spacing:0.110px;">Design Rules</span><span id="t78" class="t" style="left:655.40px;top:3.83px;font-size:14.50px;color:#000;letter-spacing:0.381px;">Help</span><span id="t79" class="t" style="left:1121.70px;top:5.54px;font-size:12.00px;color:#000;letter-spacing:-0.407px;">100%</span><span id="t80" class="t" style="left:1191.40px;top:3.83px;font-size:14.50px;color:#000;letter-spacing:0.014px;">Sun Oct 12</span><span id="t81" class="t" style="left:1275.20px;top:3.83px;font-size:14.50px;color:#000;letter-spacing:0.302px;">3:01:43 PM</span><svg class="a" style="left:0.00px;top:0.00px;" width="1440.00" height="22.00" viewBox="0 0 1440.00 22.00"><g transform="translate(722,4)"><rect x="0" y="3" width="18" height="12" rx="2" fill="#222"/><circle cx="10" cy="9" r="4.5" fill="#555" stroke="#ddd" stroke-width="1"/><rect x="2" y="1" width="5" height="3" fill="#222"/></g><g transform="translate(750,3)"><path d="M4 2l5 3-5 3-4-3zM14 2l4 3-4 3-5-3zM0 8l4 3 5-3-5-3zM18 8l-4 3-5-3 5-3zM4 12l5 3 5-3-5-3z" fill="#5a8fd0"/><circle cx="14" cy="13" r="4" fill="#3aa83a"/><path d="M12 13l1.5 1.5 3-3" stroke="#fff" stroke-width="1.3" fill="none"/></g><g transform="translate(776,4)"><path d="M5.5 0h7l7.5 12.5-3.5 5.5H3.5L0 12.5z" fill="#111"/><path d="M9 3.5l5 9H4z" fill="#e8e8e8"/><path d="M3.5 18L8 12.5M16.5 18L12 12.5" stroke="#e8e8e8" stroke-width=".8"/></g><circle cx="812" cy="11" r="7.5" fill="#1a1a1a"/><circle cx="812" cy="11" r="3" fill="none" stroke="#eee" stroke-width="1.5"/><path d="M810 13l4-4" stroke="#eee" stroke-width="1.2"/><g transform="translate(832,3)"><path d="M2 16c3-1 4-2 6-5l7-8 3 3-8 7c-3 2-4 3-8 3z" fill="#222"/><path d="M6 12l3 3M9 9l3 3" stroke="#ddd" stroke-width="1"/></g><g transform="translate(861,3)"><rect x="0" y="0" width="16" height="17" rx="3" fill="#111"/><circle cx="8" cy="8.5" r="4.5" fill="none" stroke="#ddd" stroke-width="1.3"/></g><g transform="translate(884,4)"><rect x="3" y="0" width="12" height="5" fill="#888"/><rect x="0" y="5" width="18" height="8" rx="1.5" fill="#333"/><rect x="3" y="11" width="12" height="4" fill="#aaa"/><circle cx="15" cy="8" r="1" fill="#e44"/></g><path d="M915 4v14M915 12l8-8M917 10l7 7" stroke="#c4c4c4" stroke-width="3" fill="none"/><path d="M922 14l5 5" stroke="#c4c4c4" stroke-width="2"/><g transform="translate(951,11)"><circle r="7.5" fill="none" stroke="#111" stroke-width="1.6"/><circle cy="-3.8" r="1.3" fill="#111"/><path d="M-4-1.5h8M0-1.5v3.5M0 2l-2.5 3.5M0 2l2.5 3.5" stroke="#111" stroke-width="1.5" fill="none"/></g><g transform="translate(981,11)"><path d="M-6.5 0a6.5 6.5 0 1 0 2-4.7" fill="none" stroke="#111" stroke-width="1.7"/><path d="M-7.5-6.5v4h4" fill="#111"/><path d="M0-4v4l3 2" stroke="#111" stroke-width="1.6" fill="none"/></g><path d="M1007 7l6 6-3 3v-13l3 3-6 6" stroke="#aaa" stroke-width="1.1" fill="none"/><g transform="translate(1041,17)"><path d="M-9-7a13 13 0 0 1 18 0" stroke="#111" stroke-width="2" fill="none"/><path d="M-6-4a9 9 0 0 1 12 0" stroke="#111" stroke-width="2" fill="none"/><path d="M-3-1.2a4.5 4.5 0 0 1 6 0" stroke="#111" stroke-width="2" fill="none"/><circle cy="1" r="1.3" fill="#111"/></g><path d="M1062 9h3l4-4v12l-4-4h-3z" fill="#111"/><path d="M1071 8a4 4 0 0 1 0 6" stroke="#111" stroke-width="1.3" fill="none"/><g transform="translate(1093,5)"><rect width="16" height="11" fill="#d96868"/><rect y="2" width="16" height="1.4" fill="#f0d0d0"/><rect y="5" width="16" height="1.4" fill="#f0d0d0"/><rect y="8" width="16" height="1.4" fill="#f0d0d0"/><rect width="7" height="6" fill="#5a5aa0"/></g><g transform="translate(1156,5)"><rect x="0.8" y="0.8" width="19" height="11" rx="2" fill="none" stroke="#111" stroke-width="1.6"/><rect x="20" y="4" width="2" height="4" fill="#111"/><path d="M5 6h4l2-2h3v4h-3l-2-2" fill="#111" stroke="#111"/><path d="M14 5h2M14 7h2" stroke="#111"/></g><circle cx="1374.5" cy="9.5" r="4.5" fill="none" stroke="#111" stroke-width="1.8"/><path d="M1378 13l4 4" stroke="#111" stroke-width="2.2"/><g fill="#111"><rect x="1399" y="5" width="3" height="2.5"/><rect x="1399" y="9.5" width="3" height="2.5"/><rect x="1399" y="14" width="3" height="2.5"/><rect x="1404" y="5" width="16" height="2.5"/><rect x="1404" y="9.5" width="14" height="2.5"/><rect x="1404" y="14" width="16" height="2.5"/></g></svg>
</body></html>
